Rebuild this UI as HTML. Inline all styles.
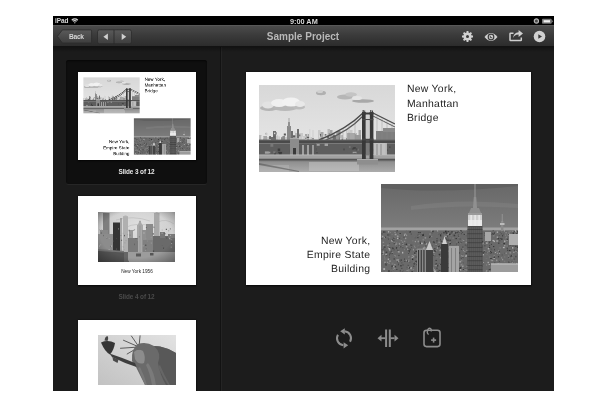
<!DOCTYPE html>
<html><head><meta charset="utf-8">
<style>
html,body{margin:0;padding:0;background:#fff;width:606px;height:406px;overflow:hidden;font-family:"Liberation Sans",sans-serif;}
#scr{position:absolute;left:53px;top:16px;width:501px;height:375px;background:#1c1c1c;overflow:hidden;}
#status{position:absolute;left:0;top:0;width:501px;height:9px;background:#000;}
#toolbar{position:absolute;left:0;top:9px;width:501px;height:21px;background:linear-gradient(#4d4d4d,#3a3a3a 50%,#2c2c2c);box-shadow:0 1px 0 #141414;}
#side{position:absolute;left:0;top:30px;width:167px;height:345px;background:#1b1b1b;}
#sep{position:absolute;left:167px;top:30px;width:1px;height:345px;background:#121212;}
#sep2{position:absolute;left:168px;top:30px;width:1px;height:345px;background:#242424;}
#main{position:absolute;left:169px;top:30px;width:332px;height:345px;background:#1c1c1c;}
.abs{position:absolute;}
.txt{position:absolute;white-space:nowrap;}
svg{position:absolute;display:block;}
.txt,svg{will-change:transform;}
</style></head><body>
<div id="scr">
  <div id="status">
    <div class="txt" style="left:1.5px;top:0.7px;color:#d8d8d8;font-size:6.5px;font-weight:bold;line-height:7px;letter-spacing:-0.1px;">iPad</div>
    <svg style="left:18px;top:2.2px" width="7.6" height="5.6" viewBox="0 0 8 6"><path d="M0.8 2.4 A4.4 4.4 0 0 1 7.2 2.4" stroke="#d8d8d8" stroke-width="1.3" fill="none"/><path d="M2.1 3.7 A2.6 2.6 0 0 1 5.9 3.7" stroke="#d8d8d8" stroke-width="1.3" fill="none"/><path d="M3 5 L4 6 L5 5 A1.4 1.4 0 0 0 3 5Z" fill="#d8d8d8"/></svg>
    <div class="txt" style="left:236.5px;top:1.7px;color:#d8d8d8;font-size:7.3px;font-weight:bold;line-height:7px;">9:00 AM</div>
    <svg style="left:480px;top:1.5px" width="7" height="7" viewBox="0 0 7 7"><circle cx="3.4" cy="3" r="2.1" stroke="#b8b8b8" stroke-width="1.2" fill="#4a4a4a"/></svg>
    <svg style="left:488px;top:1.5px" width="13" height="7" viewBox="0 0 13 7"><rect x="1" y="0.8" width="9.6" height="5" rx="0.8" fill="#787878"/><rect x="2.6" y="2.2" width="6.4" height="2.2" fill="#f0f0f0"/><path d="M10.4 1.4 L12.2 3.3 L10.4 5.2Z" fill="#787878"/></svg>
  </div>
  <div id="toolbar">
    <div class="abs" style="left:0;top:0;width:501px;height:1px;background:#585858;"></div>
    <svg style="left:4px;top:4px" width="36" height="16" viewBox="0 0 36 16"><defs><linearGradient id="btn" x1="0" y1="0" x2="0" y2="1"><stop offset="0" stop-color="#5a5a5a"/><stop offset="1" stop-color="#3e3e3e"/></linearGradient></defs>
      <path d="M0.4 7.4 L5.4 0.9 L33.6 0.9 Q34.6 0.9 34.6 1.9 L34.6 13 Q34.6 14 33.6 14 L5.4 14Z" fill="url(#btn)" stroke="#2c2c2c" stroke-width="0.8"/></svg>
    <div class="txt" style="left:15.8px;top:7.8px;color:#d4d4d4;font-size:6.7px;font-weight:bold;line-height:7px;letter-spacing:-0.3px;">Back</div>
    <svg style="left:44px;top:4px" width="35" height="16" viewBox="0 0 35 16">
      <rect x="0.5" y="0.8" width="34" height="14" rx="2" fill="url(#btn)" stroke="#2c2c2c" stroke-width="0.8"/>
      <rect x="16.6" y="1" width="0.8" height="14" fill="#2a2a2a"/>
      <path d="M6.4 7.8 L10.9 4.6 L10.9 11Z" fill="#d0d0d0"/><path d="M29.2 7.8 L24.7 4.6 L24.7 11Z" fill="#d0d0d0"/>
    </svg>
    <div class="txt" style="left:200px;top:5.8px;width:100px;text-align:center;color:#b8b8b8;font-size:10px;font-weight:bold;line-height:12px;">Sample Project</div>
    <svg style="left:407.6px;top:4.8px" width="13" height="13" viewBox="-6.5 -6.5 13 13"><g fill="#d0d0d0"><path d="M5.52 -0.96 L5.52 0.96 L4.08 0.98 L3.58 2.19 L4.58 3.22 L3.22 4.58 L2.19 3.58 L0.98 4.08 L0.96 5.52 L-0.96 5.52 L-0.98 4.08 L-2.19 3.58 L-3.22 4.58 L-4.58 3.22 L-3.58 2.19 L-4.08 0.98 L-5.52 0.96 L-5.52 -0.96 L-4.08 -0.98 L-3.58 -2.19 L-4.58 -3.22 L-3.22 -4.58 L-2.19 -3.58 L-0.98 -4.08 L-0.96 -5.52 L0.96 -5.52 L0.98 -4.08 L2.19 -3.58 L3.22 -4.58 L4.58 -3.22 L3.58 -2.19 L4.08 -0.98Z"/></g><circle r="1.5" fill="#3a3a3a"/></svg>
    <svg style="left:431px;top:7px" width="14" height="10" viewBox="0 0 14 10"><path d="M0.5 5 Q7 -3 13.5 5 Q7 13 0.5 5Z" fill="#d0d0d0"/><circle cx="7" cy="5" r="3.4" fill="#3a3a3a"/><circle cx="7" cy="5" r="2.2" fill="#d0d0d0"/><path d="M6.3 3.8 L6.3 5.7 L8.2 5.7" stroke="#3a3a3a" stroke-width="0.9" fill="none"/></svg>
    <svg style="left:455.6px;top:4.8px" width="15" height="12" viewBox="0 0 15 12"><path d="M4.5 3.2 L1.6 3.2 Q1 3.2 1 3.8 L1 10 Q1 10.6 1.6 10.6 L11.7 10.6 Q12.3 10.6 12.3 10 L12.3 7.6" stroke="#cfcfcf" stroke-width="1.5" fill="none"/><path d="M3.8 8.6 Q4.6 4.6 9.6 4.4 L9.6 7 L14 3.4 L9.6 0 L9.6 2.2 Q4.6 2.6 3.8 8.6Z" fill="#cfcfcf"/></svg>
    <svg style="left:479.6px;top:5px" width="13" height="13" viewBox="0 0 13 13"><circle cx="6.5" cy="6.5" r="5.8" fill="#d0d0d0"/><path d="M5.3 4.3 L9 6.5 L5.3 8.7Z" fill="#383838"/></svg>
  </div>
  <div id="side">
    <div class="abs" style="left:13px;top:14px;width:141px;height:124px;border-radius:2.5px;background:#0f0f0f;box-shadow:inset 0 1px 2px rgba(0,0,0,0.6),0 1px 0 #262626;"></div>
    <div class="txt" style="left:13px;top:122px;width:141px;text-align:center;color:#e8e8e8;font-size:6.4px;font-weight:bold;line-height:8px;letter-spacing:-0.1px;">Slide 3 of 12</div>
    <div class="txt" style="left:13px;top:247px;width:141px;text-align:center;color:#4a4a4a;font-size:6.4px;font-weight:bold;line-height:8px;letter-spacing:-0.1px;">Slide 4 of 12</div>
  </div>
  <div id="sep"></div><div id="sep2"></div>
  <div id="main"></div>
  <div class="abs" style="left:0;top:30px;width:501px;height:1px;background:#121212;"></div>
  <div class="abs" style="left:0;top:31px;width:501px;height:5px;background:linear-gradient(rgba(0,0,0,0.35),rgba(0,0,0,0));"></div>
  <svg style="left:280px;top:309px" width="24" height="26" viewBox="0 0 24 26">
    <path d="M11.6 6.33 A7 7 0 0 1 17.06 16.8" stroke="#8c8c8c" stroke-width="2" fill="none"/>
    <path d="M4.94 9.8 A7 7 0 0 0 10.39 20.27" stroke="#8c8c8c" stroke-width="2" fill="none"/>
    <path d="M7.2 6.3 L11.8 3.2 L11.8 9.4Z" fill="#8c8c8c"/>
    <path d="M15.2 20.3 L10.6 17.2 L10.6 23.4Z" fill="#8c8c8c"/>
  </svg>
  <svg style="left:323px;top:312px" width="24" height="21" viewBox="0 0 24 21">
    <rect x="9.1" y="1.5" width="2" height="17.5" fill="#8c8c8c"/><rect x="12.8" y="1.5" width="2" height="17.5" fill="#8c8c8c"/>
    <rect x="4" y="9.3" width="5.5" height="1.8" fill="#8c8c8c"/><rect x="14.5" y="9.3" width="4" height="1.8" fill="#8c8c8c"/>
    <path d="M1.5 10.2 L5.5 6.8 L5.5 13.6Z" fill="#8c8c8c"/><path d="M22.5 10.2 L18.5 6.8 L18.5 13.6Z" fill="#8c8c8c"/>
  </svg>
  <svg style="left:368px;top:309px" width="22" height="24" viewBox="0 0 22 24">
    <rect x="3" y="5.2" width="16" height="16.4" rx="2.5" fill="none" stroke="#8c8c8c" stroke-width="1.6"/>
    <path d="M7.6 9.5 Q5.6 8 6.6 5.2 Q7.8 2.5 9.6 3.6 Q10.8 4.6 10 6.6" stroke="#8c8c8c" stroke-width="1.4" fill="none"/>
    <rect x="10.1" y="14.3" width="5" height="1.6" fill="#8c8c8c"/><rect x="11.8" y="12.6" width="1.6" height="5" fill="#8c8c8c"/>
  </svg>
  <!-- main slide -->
  <div class="abs" style="left:193px;top:56px;width:285px;height:213px;box-shadow:0 0.5px 1.5px 0.5px rgba(0,0,0,0.9);"></div>
  <svg style="left:193px;top:56px" width="285" height="213" viewBox="0 0 285 213"><rect width="285" height="213" fill="#fff"/>
<svg x="13" y="13" width="136" height="87" viewBox="0 0 136 87"><defs><linearGradient id="p1sky" x1="0" y1="0" x2="0" y2="1"><stop offset="0" stop-color="#d8d8d8"/><stop offset="1" stop-color="#eaeaea"/></linearGradient><linearGradient id="p1wat" x1="0" y1="0" x2="0" y2="1"><stop offset="0" stop-color="#8a8a8a"/><stop offset="1" stop-color="#acacac"/></linearGradient></defs><rect width="136" height="87" fill="url(#p1sky)"/><ellipse cx="10" cy="23" rx="9" ry="3" fill="#b4b4b4"/><ellipse cx="26" cy="23" rx="12" ry="3" fill="#b8b8b8"/><ellipse cx="40" cy="22" rx="6" ry="2.5" fill="#bcbcbc"/><ellipse cx="9" cy="20" rx="6" ry="3.5" fill="#e2e2e2"/><ellipse cx="20" cy="18" rx="8" ry="4" fill="#f0f0f0"/><ellipse cx="32" cy="17" rx="9" ry="4.5" fill="#f2f2f2"/><ellipse cx="41" cy="19" rx="5" ry="3" fill="#e8e8e8"/><ellipse cx="62" cy="8" rx="5" ry="2.2" fill="#b0b0b0"/><ellipse cx="61" cy="6.5" rx="3" ry="1.5" fill="#d0d0d0"/><ellipse cx="86" cy="12" rx="8" ry="2.5" fill="#b6b6b6"/><ellipse cx="104" cy="16" rx="11" ry="1.8" fill="#a8a8a8"/><ellipse cx="92" cy="9.5" rx="6" ry="2.2" fill="#c4c4c4"/><ellipse cx="98" cy="13" rx="5" ry="2" fill="#e4e4e4"/><rect x="0.0" y="50" width="2.5" height="6" fill="#b9b9b9"/><rect x="2.5" y="51" width="1.5" height="5" fill="#e1e1e1"/><rect x="4.0" y="51" width="4" height="5" fill="#a5a5a5"/><rect x="8.0" y="52" width="4" height="4" fill="#c8c8c8"/><rect x="12.0" y="52" width="2" height="4" fill="#6e6e6e"/><rect x="14.0" y="46" width="3" height="10" fill="#6e6e6e"/><rect x="17.0" y="51" width="2" height="5" fill="#c8c8c8"/><rect x="19.0" y="52" width="3" height="4" fill="#e1e1e1"/><rect x="22.0" y="51" width="4" height="5" fill="#8c8c8c"/><rect x="26.0" y="52" width="4" height="4" fill="#c8c8c8"/><rect x="30.0" y="46" width="4" height="10" fill="#6e6e6e"/><rect x="34.0" y="52" width="2" height="4" fill="#c8c8c8"/><rect x="36.0" y="48" width="2" height="8" fill="#b9b9b9"/><rect x="38.0" y="44" width="2" height="12" fill="#6e6e6e"/><rect x="40.0" y="48" width="4" height="8" fill="#c8c8c8"/><rect x="44.0" y="51" width="2" height="5" fill="#c8c8c8"/><rect x="46.0" y="49" width="4" height="7" fill="#a5a5a5"/><rect x="50.0" y="44" width="1.5" height="12" fill="#d7d7d7"/><rect x="51.5" y="52" width="1.5" height="4" fill="#c8c8c8"/><rect x="53.0" y="45" width="2" height="11" fill="#d7d7d7"/><rect x="55.0" y="46" width="4" height="10" fill="#e1e1e1"/><rect x="59.0" y="45" width="2.5" height="11" fill="#c8c8c8"/><rect x="61.5" y="47" width="3" height="9" fill="#a5a5a5"/><rect x="64.5" y="50" width="2" height="6" fill="#d7d7d7"/><rect x="66.5" y="51" width="2" height="5" fill="#c8c8c8"/><rect x="68.5" y="44" width="2.5" height="12" fill="#b9b9b9"/><rect x="71.0" y="45" width="2.5" height="11" fill="#a5a5a5"/><rect x="73.5" y="51" width="4" height="5" fill="#6e6e6e"/><rect x="77.5" y="46" width="4" height="10" fill="#8c8c8c"/><rect x="81.5" y="50" width="2.5" height="6" fill="#b9b9b9"/><rect x="84.0" y="52" width="3" height="4" fill="#d7d7d7"/><rect x="87.0" y="44" width="1.5" height="12" fill="#c8c8c8"/><rect x="88.5" y="47" width="2.5" height="9" fill="#d7d7d7"/><rect x="91.0" y="45" width="2.5" height="11" fill="#c8c8c8"/><rect x="93.5" y="51" width="3" height="5" fill="#e1e1e1"/><rect x="96.5" y="48" width="1.5" height="8" fill="#b9b9b9"/><rect x="98.0" y="52" width="1.5" height="4" fill="#d7d7d7"/><rect x="99.5" y="45" width="2.5" height="11" fill="#a5a5a5"/><rect x="71.7" y="54.0" width="1.4" height="2.9" fill="#c8c8c8"/><rect x="16.8" y="47.1" width="0.9" height="2.5" fill="#787878"/><rect x="73.8" y="49.6" width="2.4" height="2.0" fill="#787878"/><rect x="44.9" y="50.9" width="2.3" height="2.6" fill="#c8c8c8"/><rect x="70.6" y="54.9" width="2.0" height="1.8" fill="#787878"/><rect x="15.1" y="47.6" width="1.2" height="1.5" fill="#e1e1e1"/><rect x="83.1" y="47.6" width="1.3" height="1.3" fill="#c8c8c8"/><rect x="61.0" y="48.9" width="1.0" height="2.7" fill="#5a5a5a"/><rect x="45.7" y="53.8" width="2.4" height="2.4" fill="#e1e1e1"/><rect x="39.8" y="49.5" width="1.6" height="1.8" fill="#787878"/><rect x="6.7" y="47.9" width="1.1" height="1.7" fill="#5a5a5a"/><rect x="10.2" y="51.1" width="1.7" height="2.9" fill="#5a5a5a"/><rect x="7.0" y="47.9" width="1.4" height="2.3" fill="#c8c8c8"/><rect x="60.2" y="50.3" width="1.0" height="2.0" fill="#e1e1e1"/><rect x="48.0" y="48.8" width="1.0" height="2.5" fill="#c8c8c8"/><rect x="47.9" y="52.2" width="1.7" height="1.4" fill="#c8c8c8"/><rect x="14.7" y="50.9" width="0.8" height="2.1" fill="#5a5a5a"/><rect x="69.6" y="48.4" width="1.4" height="1.3" fill="#787878"/><rect x="53.3" y="53.0" width="1.4" height="1.4" fill="#787878"/><rect x="80.6" y="53.4" width="2.1" height="1.5" fill="#e1e1e1"/><rect x="35.6" y="46.3" width="0.8" height="1.6" fill="#c8c8c8"/><rect x="19.4" y="51.4" width="1.4" height="2.6" fill="#c8c8c8"/><rect x="95.5" y="49.3" width="1.2" height="1.5" fill="#787878"/><rect x="33.8" y="50.3" width="2.5" height="2.2" fill="#5a5a5a"/><rect x="47.9" y="51.9" width="2.2" height="1.2" fill="#5a5a5a"/><rect x="91.0" y="53.0" width="2.1" height="2.0" fill="#787878"/><rect x="43.4" y="51.7" width="0.9" height="2.9" fill="#e1e1e1"/><rect x="46.3" y="52.7" width="0.9" height="1.3" fill="#787878"/><rect x="2.8" y="51.3" width="1.6" height="2.3" fill="#e1e1e1"/><rect x="65.7" y="49.2" width="1.7" height="1.3" fill="#5a5a5a"/><rect x="79.9" y="52.5" width="1.0" height="2.5" fill="#787878"/><rect x="43.4" y="53.8" width="2.2" height="1.4" fill="#c8c8c8"/><rect x="21.3" y="50.5" width="2.1" height="1.7" fill="#e1e1e1"/><rect x="83.4" y="46.5" width="2.1" height="2.8" fill="#e1e1e1"/><rect x="82.7" y="53.9" width="1.0" height="1.3" fill="#5a5a5a"/><rect x="87.3" y="53.0" width="1.8" height="2.6" fill="#787878"/><rect x="17.2" y="50.3" width="2.0" height="2.1" fill="#c8c8c8"/><rect x="68.2" y="50.8" width="1.6" height="2.6" fill="#5a5a5a"/><rect x="24.8" y="48.5" width="2.1" height="2.0" fill="#5a5a5a"/><rect x="76.0" y="54.2" width="1.6" height="2.2" fill="#787878"/><rect x="28" y="41" width="4" height="14" fill="#8a8a8a"/><rect x="29" y="37" width="2" height="5" fill="#909090"/><rect x="29.6" y="33" width="0.8" height="5" fill="#999"/><rect x="117" y="46" width="19" height="10" fill="#7e7e7e"/><rect x="124" y="43" width="12" height="4" fill="#8a8a8a"/><rect x="88" y="48" width="8" height="8" fill="#a8a8a8"/><rect x="96" y="50" width="6" height="6" fill="#999"/><rect x="78" y="46" width="1.5" height="10" fill="#999"/><path d="M104 28 Q88 44 60 55" stroke="#4a4a4a" stroke-width="1.4" fill="none"/><path d="M104 31 Q90 46 66 55.5" stroke="#555" stroke-width="1.1" fill="none"/><path d="M114 28 Q124 33 136 39" stroke="#4a4a4a" stroke-width="1.3" fill="none"/><path d="M114 31 Q124 36 136 42" stroke="#555" stroke-width="1" fill="none"/><line x1="72" y1="52" x2="72" y2="56" stroke="#888" stroke-width="0.4"/><line x1="78" y1="48" x2="78" y2="56" stroke="#888" stroke-width="0.4"/><line x1="84" y1="44" x2="84" y2="56" stroke="#888" stroke-width="0.4"/><line x1="90" y1="40" x2="90" y2="56" stroke="#888" stroke-width="0.4"/><line x1="96" y1="36" x2="96" y2="56" stroke="#888" stroke-width="0.4"/><line x1="118" y1="31.0" x2="118" y2="56" stroke="#888" stroke-width="0.4"/><line x1="123" y1="33.6" x2="123" y2="56" stroke="#888" stroke-width="0.4"/><line x1="128" y1="36.2" x2="128" y2="56" stroke="#888" stroke-width="0.4"/><line x1="133" y1="38.8" x2="133" y2="56" stroke="#888" stroke-width="0.4"/><rect x="0" y="55" width="136" height="3.5" fill="#4a4a4a"/><rect x="0" y="54.5" width="136" height="1" fill="#6a6a6a"/><rect x="0" y="58.5" width="136" height="11.5" fill="#5e5e5e"/><rect x="92.8" y="62.8" width="2.6" height="2.0" fill="#4b4b4b"/><rect x="93.7" y="66.8" width="3.8" height="1.5" fill="#a0a0a0"/><rect x="119.6" y="60.4" width="2.3" height="1.8" fill="#787878"/><rect x="59.2" y="59.2" width="1.7" height="1.1" fill="#5f5f5f"/><rect x="105.0" y="67.0" width="1.5" height="2.4" fill="#5f5f5f"/><rect x="19.2" y="66.9" width="3.9" height="1.4" fill="#3c3c3c"/><rect x="53.4" y="63.1" width="4.0" height="2.7" fill="#4b4b4b"/><rect x="94.6" y="67.9" width="2.2" height="1.8" fill="#5f5f5f"/><rect x="42.7" y="65.4" width="1.1" height="2.1" fill="#787878"/><rect x="94.2" y="62.2" width="2.6" height="1.6" fill="#3c3c3c"/><rect x="15.1" y="67.2" width="1.7" height="2.8" fill="#3c3c3c"/><rect x="35.6" y="58.9" width="3.3" height="1.5" fill="#4b4b4b"/><rect x="109.9" y="66.6" width="3.0" height="2.9" fill="#787878"/><rect x="20.0" y="67.2" width="2.7" height="2.4" fill="#3c3c3c"/><rect x="37.4" y="66.1" width="1.6" height="2.8" fill="#5f5f5f"/><rect x="125.7" y="64.5" width="3.4" height="1.2" fill="#4b4b4b"/><rect x="8.9" y="66.7" width="2.4" height="1.7" fill="#a0a0a0"/><rect x="56.0" y="67.2" width="2.9" height="1.1" fill="#4b4b4b"/><rect x="125.7" y="67.7" width="1.8" height="1.4" fill="#5f5f5f"/><rect x="84.2" y="63.5" width="1.6" height="1.9" fill="#4b4b4b"/><rect x="36.2" y="66.1" width="4.0" height="1.1" fill="#3c3c3c"/><rect x="98.2" y="63.7" width="1.6" height="1.9" fill="#787878"/><rect x="14.2" y="66.3" width="2.3" height="2.0" fill="#787878"/><rect x="130.0" y="61.4" width="1.6" height="1.5" fill="#4b4b4b"/><rect x="111.5" y="65.2" width="2.9" height="1.8" fill="#5f5f5f"/><rect x="131.6" y="66.5" width="1.0" height="2.3" fill="#5f5f5f"/><rect x="57.7" y="59.0" width="3.0" height="1.8" fill="#a0a0a0"/><rect x="89.9" y="61.2" width="1.7" height="1.6" fill="#787878"/><rect x="24.8" y="61.1" width="1.0" height="1.7" fill="#5f5f5f"/><rect x="130.3" y="63.7" width="1.7" height="2.9" fill="#5f5f5f"/><rect x="29.2" y="60.2" width="2.0" height="1.2" fill="#5f5f5f"/><rect x="67.4" y="60.4" width="2.5" height="1.0" fill="#5f5f5f"/><rect x="109.5" y="59.9" width="2.8" height="1.8" fill="#5f5f5f"/><rect x="40.8" y="60.7" width="2.8" height="2.1" fill="#4b4b4b"/><rect x="88.1" y="65.3" width="3.6" height="1.8" fill="#5f5f5f"/><rect x="96.6" y="63.2" width="1.9" height="2.2" fill="#4b4b4b"/><rect x="5.9" y="66.4" width="3.7" height="2.3" fill="#a0a0a0"/><rect x="18.7" y="63.5" width="2.5" height="2.7" fill="#3c3c3c"/><rect x="110.7" y="64.0" width="3.7" height="2.4" fill="#4b4b4b"/><rect x="11.4" y="58.9" width="2.9" height="2.9" fill="#787878"/><rect x="112.0" y="63.8" width="2.9" height="2.3" fill="#4b4b4b"/><rect x="65.6" y="58.5" width="3.4" height="2.5" fill="#a0a0a0"/><rect x="120.3" y="59.4" width="2.6" height="2.5" fill="#787878"/><rect x="33.8" y="59.2" width="1.8" height="2.5" fill="#4b4b4b"/><rect x="30.9" y="64.7" width="2.4" height="2.7" fill="#3c3c3c"/><rect x="116" y="58" width="12" height="12" fill="#b4b4b4"/><rect x="119" y="59" width="1" height="11" fill="#888"/><rect x="123" y="59" width="1" height="11" fill="#888"/><rect x="31" y="53" width="9" height="17" fill="#8c8c8c"/><rect x="34" y="63" width="3" height="7" fill="#3a3a3a"/><rect x="31" y="53" width="9" height="1" fill="#a8a8a8"/><rect x="40" y="58.5" width="17" height="11.5" fill="#5a5a5a"/><rect x="43" y="60" width="2" height="10" fill="#a0a0a0"/><rect x="48" y="60" width="2" height="10" fill="#a0a0a0"/><rect x="53" y="60" width="2" height="10" fill="#9a9a9a"/><rect x="0" y="70" width="136" height="3.5" fill="#a2a2a2"/><rect x="0" y="73.5" width="136" height="1.5" fill="#555"/><rect x="0" y="69.5" width="136" height="0.8" fill="#c0c0c0"/><rect x="0" y="75" width="136" height="12" fill="url(#p1wat)"/><rect x="50" y="77" width="50" height="9" fill="#c8c8c8" opacity="0.5"/><rect x="0" y="80" width="30" height="7" fill="#bcbcbc" opacity="0.4"/><rect x="0" y="75" width="136" height="1.2" fill="#6a6a6a"/><path d="M0 78 L40 86 L40 87 L0 80Z" fill="#555" opacity="0.6"/><rect x="103" y="27" width="3.8" height="50" fill="#383838"/><rect x="110.6" y="27" width="3.8" height="50" fill="#383838"/><rect x="103.6" y="25" width="1.2" height="3" fill="#444"/><rect x="105.2" y="25.5" width="1" height="2" fill="#444"/><rect x="111.2" y="25" width="1.2" height="3" fill="#444"/><rect x="113" y="25.5" width="1" height="2" fill="#444"/><rect x="103" y="27.5" width="11.4" height="2.2" fill="#3c3c3c"/><rect x="103" y="34" width="11.4" height="1.2" fill="#4a4a4a"/><rect x="103" y="53.5" width="11.4" height="2" fill="#444"/><rect x="106.8" y="29.7" width="3.8" height="4.3" fill="#d2d2d2"/><rect x="106.8" y="35.2" width="3.8" height="18.3" fill="#cbcbcb"/><rect x="106.8" y="58.5" width="3.8" height="12" fill="#7a7a7a"/><rect x="114.5" y="58" width="12" height="12" fill="#c0c0c0"/><rect x="117.5" y="59" width="1" height="11" fill="#8a8a8a"/><rect x="121.5" y="59" width="1" height="11" fill="#8a8a8a"/><rect x="98" y="74" width="21" height="5.5" fill="#8e8e8e"/><rect x="98" y="74" width="21" height="1" fill="#aaa"/></svg>
<svg x="135" y="112" width="137" height="88" viewBox="0 0 137 88"><defs><linearGradient id="p2sky" x1="0" y1="0" x2="0" y2="1"><stop offset="0" stop-color="#686868"/><stop offset="0.5" stop-color="#7c7c7c"/><stop offset="1" stop-color="#8e8e8e"/></linearGradient></defs><rect width="137" height="88" fill="url(#p2sky)"/><path d="M0 4 Q60 10 137 2 L137 0 L0 0Z" fill="#606060"/><path d="M30 22 Q80 14 137 20 L137 24 Q80 20 30 26Z" fill="#8a8a8a" opacity="0.35"/><rect x="0" y="43.5" width="137" height="3" fill="#a2a2a2"/><rect x="0" y="46.5" width="137" height="41.5" fill="#6a6a6a"/><rect x="61.7" y="69.2" width="1.7" height="1.2" fill="#b4b4b4"/><rect x="116.7" y="53.9" width="1.6" height="1.2" fill="#4b4b4b"/><rect x="12.8" y="58.6" width="0.7" height="1.6" fill="#323232"/><rect x="81.3" y="62.4" width="1.1" height="1.5" fill="#4b4b4b"/><rect x="85.1" y="80.5" width="0.7" height="0.6" fill="#5a5a5a"/><rect x="81.8" y="78.3" width="1.0" height="1.3" fill="#5a5a5a"/><rect x="70.9" y="72.6" width="1.2" height="1.4" fill="#9b9b9b"/><rect x="89.4" y="62.9" width="1.3" height="1.7" fill="#3c3c3c"/><rect x="96.6" y="59.1" width="0.9" height="0.9" fill="#3c3c3c"/><rect x="76.9" y="50.5" width="0.7" height="0.9" fill="#3c3c3c"/><rect x="130.8" y="81.2" width="0.6" height="0.9" fill="#323232"/><rect x="64.2" y="86.7" width="1.1" height="0.7" fill="#5a5a5a"/><rect x="106.3" y="57.2" width="0.7" height="1.0" fill="#878787"/><rect x="103.5" y="50.9" width="0.9" height="0.7" fill="#323232"/><rect x="63.5" y="66.2" width="1.4" height="0.8" fill="#b4b4b4"/><rect x="26.0" y="76.4" width="0.8" height="1.4" fill="#3c3c3c"/><rect x="53.9" y="87.1" width="0.6" height="1.6" fill="#696969"/><rect x="136.2" y="46.8" width="0.8" height="1.8" fill="#3c3c3c"/><rect x="5.7" y="52.1" width="1.1" height="0.6" fill="#787878"/><rect x="113.3" y="62.0" width="0.7" height="0.9" fill="#5a5a5a"/><rect x="2.1" y="61.3" width="1.3" height="0.8" fill="#9b9b9b"/><rect x="113.6" y="51.6" width="1.1" height="1.4" fill="#696969"/><rect x="124.0" y="79.9" width="0.9" height="0.8" fill="#b4b4b4"/><rect x="26.8" y="85.4" width="1.7" height="1.3" fill="#878787"/><rect x="6.5" y="50.5" width="1.2" height="0.9" fill="#878787"/><rect x="35.1" y="80.2" width="1.3" height="1.0" fill="#4b4b4b"/><rect x="126.8" y="86.6" width="0.8" height="1.2" fill="#3c3c3c"/><rect x="38.2" y="84.1" width="0.8" height="0.6" fill="#696969"/><rect x="56.2" y="56.3" width="0.7" height="0.9" fill="#b4b4b4"/><rect x="78.1" y="51.5" width="1.0" height="1.7" fill="#787878"/><rect x="89.7" y="74.7" width="1.3" height="0.8" fill="#323232"/><rect x="126.1" y="65.7" width="1.0" height="1.0" fill="#323232"/><rect x="2.9" y="72.4" width="1.2" height="1.5" fill="#787878"/><rect x="18.6" y="49.0" width="1.1" height="1.0" fill="#323232"/><rect x="122.9" y="76.6" width="1.4" height="1.6" fill="#787878"/><rect x="48.0" y="74.4" width="1.7" height="1.6" fill="#878787"/><rect x="128.9" y="47.3" width="1.2" height="0.6" fill="#878787"/><rect x="51.8" y="46.5" width="0.7" height="0.7" fill="#3c3c3c"/><rect x="135.6" y="82.5" width="1.5" height="1.1" fill="#9b9b9b"/><rect x="60.1" y="80.8" width="0.7" height="1.5" fill="#323232"/><rect x="42.3" y="49.6" width="0.6" height="1.7" fill="#3c3c3c"/><rect x="67.9" y="71.5" width="1.7" height="0.9" fill="#323232"/><rect x="50.2" y="51.9" width="1.3" height="1.2" fill="#787878"/><rect x="90.1" y="64.3" width="1.7" height="1.0" fill="#696969"/><rect x="27.1" y="63.9" width="1.6" height="1.7" fill="#5a5a5a"/><rect x="52.5" y="70.2" width="1.0" height="0.8" fill="#9b9b9b"/><rect x="47.9" y="83.2" width="0.6" height="0.7" fill="#696969"/><rect x="112.2" y="50.7" width="1.2" height="1.7" fill="#878787"/><rect x="52.2" y="67.6" width="1.4" height="1.5" fill="#9b9b9b"/><rect x="43.7" y="80.4" width="0.9" height="1.3" fill="#696969"/><rect x="77.9" y="58.8" width="1.5" height="0.6" fill="#4b4b4b"/><rect x="55.3" y="53.9" width="1.5" height="0.9" fill="#4b4b4b"/><rect x="108.8" y="86.8" width="0.7" height="0.7" fill="#b4b4b4"/><rect x="89.4" y="79.5" width="1.8" height="1.4" fill="#5a5a5a"/><rect x="112.5" y="56.6" width="1.5" height="1.5" fill="#b4b4b4"/><rect x="97.5" y="53.4" width="0.9" height="1.0" fill="#b4b4b4"/><rect x="68.3" y="87.4" width="0.8" height="1.6" fill="#5a5a5a"/><rect x="11.9" y="84.7" width="1.5" height="0.8" fill="#9b9b9b"/><rect x="26.9" y="82.8" width="0.6" height="1.3" fill="#b4b4b4"/><rect x="108.8" y="85.2" width="1.2" height="1.4" fill="#5a5a5a"/><rect x="13.5" y="81.9" width="1.6" height="1.7" fill="#3c3c3c"/><rect x="29.1" y="83.3" width="1.8" height="1.8" fill="#b4b4b4"/><rect x="133.3" y="84.7" width="0.9" height="1.5" fill="#323232"/><rect x="47.6" y="49.4" width="1.1" height="1.3" fill="#696969"/><rect x="66.5" y="47.2" width="1.6" height="0.7" fill="#323232"/><rect x="23.6" y="59.9" width="1.5" height="0.8" fill="#4b4b4b"/><rect x="136.5" y="83.4" width="1.2" height="1.4" fill="#9b9b9b"/><rect x="129.1" y="66.4" width="1.7" height="0.7" fill="#5a5a5a"/><rect x="60.0" y="69.2" width="1.6" height="1.3" fill="#4b4b4b"/><rect x="71.4" y="81.0" width="1.3" height="1.0" fill="#878787"/><rect x="130.3" y="82.1" width="1.3" height="1.0" fill="#4b4b4b"/><rect x="132.2" y="67.8" width="1.3" height="0.8" fill="#b4b4b4"/><rect x="15.6" y="46.2" width="1.1" height="1.2" fill="#323232"/><rect x="70.4" y="62.6" width="1.6" height="1.3" fill="#9b9b9b"/><rect x="12.7" y="52.9" width="1.7" height="1.2" fill="#878787"/><rect x="36.7" y="65.6" width="0.8" height="1.1" fill="#9b9b9b"/><rect x="71.7" y="50.5" width="1.1" height="0.6" fill="#696969"/><rect x="17.7" y="78.3" width="0.6" height="0.8" fill="#5a5a5a"/><rect x="1.6" y="57.8" width="1.5" height="0.9" fill="#9b9b9b"/><rect x="14.3" y="76.3" width="0.7" height="1.2" fill="#696969"/><rect x="98.0" y="75.1" width="1.7" height="0.6" fill="#878787"/><rect x="112.6" y="71.6" width="1.2" height="1.6" fill="#b4b4b4"/><rect x="87.2" y="68.0" width="1.6" height="1.3" fill="#4b4b4b"/><rect x="31.8" y="76.7" width="1.6" height="1.7" fill="#787878"/><rect x="82.3" y="83.0" width="0.8" height="1.5" fill="#5a5a5a"/><rect x="121.1" y="51.6" width="0.9" height="1.5" fill="#696969"/><rect x="52.9" y="64.0" width="1.7" height="1.3" fill="#4b4b4b"/><rect x="27.4" y="72.1" width="1.6" height="0.7" fill="#787878"/><rect x="124.4" y="86.2" width="0.7" height="1.2" fill="#787878"/><rect x="68.6" y="74.5" width="0.8" height="0.7" fill="#3c3c3c"/><rect x="3.3" y="77.6" width="1.3" height="1.7" fill="#9b9b9b"/><rect x="20.0" y="53.7" width="0.8" height="1.6" fill="#696969"/><rect x="126.5" y="50.0" width="0.7" height="1.7" fill="#9b9b9b"/><rect x="10.6" y="50.0" width="1.1" height="1.1" fill="#787878"/><rect x="58.7" y="70.9" width="0.6" height="1.4" fill="#5a5a5a"/><rect x="24.7" y="64.8" width="1.5" height="1.1" fill="#5a5a5a"/><rect x="82.6" y="49.9" width="1.6" height="1.0" fill="#3c3c3c"/><rect x="109.4" y="75.2" width="1.6" height="1.4" fill="#878787"/><rect x="77.8" y="53.9" width="1.3" height="1.0" fill="#696969"/><rect x="38.2" y="50.8" width="1.5" height="0.8" fill="#878787"/><rect x="18.2" y="59.7" width="1.2" height="1.0" fill="#878787"/><rect x="104.5" y="62.8" width="1.5" height="0.7" fill="#787878"/><rect x="41.2" y="50.2" width="1.7" height="1.8" fill="#323232"/><rect x="31.7" y="85.2" width="1.4" height="1.0" fill="#878787"/><rect x="77.7" y="68.1" width="1.1" height="1.8" fill="#5a5a5a"/><rect x="95.7" y="77.6" width="1.8" height="0.6" fill="#3c3c3c"/><rect x="100.8" y="56.7" width="1.1" height="0.7" fill="#5a5a5a"/><rect x="88.5" y="46.4" width="0.9" height="0.9" fill="#787878"/><rect x="75.1" y="67.1" width="1.8" height="1.3" fill="#3c3c3c"/><rect x="87.1" y="79.6" width="0.7" height="1.3" fill="#323232"/><rect x="52.7" y="85.0" width="1.1" height="1.8" fill="#9b9b9b"/><rect x="74.0" y="70.8" width="1.1" height="1.2" fill="#696969"/><rect x="71.9" y="70.8" width="1.0" height="0.9" fill="#696969"/><rect x="76.5" y="57.8" width="1.5" height="1.0" fill="#323232"/><rect x="105.4" y="70.3" width="1.4" height="1.1" fill="#878787"/><rect x="7.2" y="59.1" width="1.1" height="1.3" fill="#787878"/><rect x="10.0" y="83.6" width="1.1" height="1.2" fill="#5a5a5a"/><rect x="6.2" y="50.1" width="1.6" height="1.7" fill="#4b4b4b"/><rect x="133.6" y="79.9" width="1.3" height="0.7" fill="#878787"/><rect x="62.2" y="54.5" width="0.7" height="1.2" fill="#3c3c3c"/><rect x="49.6" y="51.8" width="1.1" height="1.3" fill="#878787"/><rect x="49.7" y="76.9" width="1.6" height="0.8" fill="#696969"/><rect x="100.2" y="55.9" width="0.7" height="1.7" fill="#b4b4b4"/><rect x="85.3" y="60.9" width="0.9" height="1.4" fill="#5a5a5a"/><rect x="86.4" y="77.3" width="0.8" height="0.9" fill="#5a5a5a"/><rect x="120.0" y="47.6" width="0.7" height="0.9" fill="#878787"/><rect x="3.7" y="47.6" width="0.9" height="0.9" fill="#3c3c3c"/><rect x="124.6" y="52.7" width="0.9" height="1.8" fill="#9b9b9b"/><rect x="65.3" y="54.7" width="1.0" height="1.5" fill="#3c3c3c"/><rect x="109.5" y="64.6" width="1.6" height="1.6" fill="#5a5a5a"/><rect x="60.7" y="77.0" width="1.1" height="0.8" fill="#4b4b4b"/><rect x="89.2" y="87.1" width="1.0" height="1.3" fill="#4b4b4b"/><rect x="58.4" y="61.3" width="0.7" height="1.7" fill="#3c3c3c"/><rect x="74.2" y="63.9" width="1.3" height="1.6" fill="#9b9b9b"/><rect x="40.8" y="78.2" width="0.7" height="0.9" fill="#3c3c3c"/><rect x="94.9" y="66.5" width="1.5" height="1.0" fill="#4b4b4b"/><rect x="29.9" y="73.3" width="1.0" height="1.7" fill="#787878"/><rect x="96.8" y="69.6" width="1.7" height="1.7" fill="#696969"/><rect x="59.8" y="79.3" width="1.0" height="1.0" fill="#878787"/><rect x="132.1" y="76.3" width="1.2" height="0.7" fill="#787878"/><rect x="3.3" y="74.1" width="1.3" height="1.6" fill="#787878"/><rect x="108.8" y="68.4" width="1.6" height="1.3" fill="#4b4b4b"/><rect x="12.2" y="64.9" width="1.6" height="1.6" fill="#5a5a5a"/><rect x="70.4" y="68.6" width="1.3" height="1.8" fill="#878787"/><rect x="8.7" y="68.7" width="1.5" height="0.7" fill="#3c3c3c"/><rect x="37.4" y="50.4" width="1.0" height="0.6" fill="#4b4b4b"/><rect x="13.3" y="79.9" width="1.1" height="1.5" fill="#9b9b9b"/><rect x="104.5" y="67.6" width="1.5" height="1.1" fill="#787878"/><rect x="110.2" y="59.8" width="0.8" height="1.2" fill="#3c3c3c"/><rect x="96.7" y="84.0" width="1.1" height="1.6" fill="#787878"/><rect x="116.5" y="79.4" width="1.6" height="1.7" fill="#b4b4b4"/><rect x="87.4" y="67.7" width="1.5" height="1.6" fill="#878787"/><rect x="126.1" y="84.0" width="0.9" height="0.8" fill="#878787"/><rect x="93.4" y="59.3" width="1.1" height="1.2" fill="#696969"/><rect x="132.4" y="48.5" width="1.0" height="0.7" fill="#4b4b4b"/><rect x="105.9" y="53.4" width="0.7" height="1.2" fill="#9b9b9b"/><rect x="124.1" y="47.5" width="0.7" height="0.8" fill="#5a5a5a"/><rect x="80.3" y="70.9" width="1.2" height="1.2" fill="#9b9b9b"/><rect x="25.3" y="57.7" width="0.8" height="1.5" fill="#696969"/><rect x="85.6" y="85.1" width="1.3" height="1.6" fill="#9b9b9b"/><rect x="121.1" y="83.9" width="1.0" height="1.3" fill="#3c3c3c"/><rect x="65.9" y="55.2" width="0.7" height="1.7" fill="#878787"/><rect x="133.2" y="79.0" width="1.5" height="1.5" fill="#323232"/><rect x="89.8" y="55.9" width="0.6" height="1.2" fill="#787878"/><rect x="61.4" y="56.2" width="1.1" height="1.6" fill="#878787"/><rect x="21.4" y="59.4" width="0.9" height="1.6" fill="#b4b4b4"/><rect x="17.9" y="76.8" width="1.3" height="1.2" fill="#323232"/><rect x="20.6" y="78.0" width="0.6" height="1.6" fill="#4b4b4b"/><rect x="112.2" y="49.4" width="0.9" height="1.5" fill="#3c3c3c"/><rect x="121.4" y="74.8" width="0.7" height="1.5" fill="#b4b4b4"/><rect x="117.0" y="58.6" width="1.5" height="1.1" fill="#3c3c3c"/><rect x="106.7" y="64.3" width="0.6" height="1.1" fill="#9b9b9b"/><rect x="21.5" y="80.5" width="1.0" height="1.0" fill="#3c3c3c"/><rect x="75.9" y="87.4" width="1.4" height="0.7" fill="#3c3c3c"/><rect x="93.8" y="50.4" width="1.1" height="1.2" fill="#3c3c3c"/><rect x="89.3" y="46.5" width="1.1" height="1.5" fill="#5a5a5a"/><rect x="40.1" y="50.7" width="1.5" height="1.6" fill="#5a5a5a"/><rect x="123.1" y="52.3" width="1.4" height="1.7" fill="#696969"/><rect x="130.2" y="77.3" width="1.3" height="0.7" fill="#5a5a5a"/><rect x="27.3" y="76.4" width="1.0" height="1.7" fill="#9b9b9b"/><rect x="98.8" y="59.8" width="1.6" height="0.7" fill="#4b4b4b"/><rect x="84.9" y="51.5" width="1.4" height="0.8" fill="#5a5a5a"/><rect x="54.9" y="80.7" width="1.3" height="0.7" fill="#5a5a5a"/><rect x="4.4" y="87.0" width="1.1" height="1.5" fill="#787878"/><rect x="125.7" y="63.7" width="1.2" height="1.4" fill="#4b4b4b"/><rect x="112.1" y="62.0" width="1.0" height="1.1" fill="#323232"/><rect x="99.2" y="71.4" width="1.0" height="1.5" fill="#5a5a5a"/><rect x="90.1" y="71.3" width="0.6" height="1.0" fill="#787878"/><rect x="41.9" y="64.3" width="1.3" height="0.8" fill="#787878"/><rect x="107.6" y="80.2" width="1.3" height="0.8" fill="#b4b4b4"/><rect x="123.3" y="68.8" width="1.0" height="1.2" fill="#4b4b4b"/><rect x="78.4" y="54.2" width="1.7" height="1.8" fill="#5a5a5a"/><rect x="77.4" y="47.1" width="1.4" height="1.5" fill="#4b4b4b"/><rect x="33.4" y="69.9" width="1.4" height="1.0" fill="#787878"/><rect x="36.3" y="82.6" width="1.1" height="1.5" fill="#5a5a5a"/><rect x="123.4" y="68.6" width="1.3" height="1.3" fill="#696969"/><rect x="23.0" y="76.9" width="1.7" height="1.0" fill="#4b4b4b"/><rect x="16.7" y="80.2" width="0.9" height="1.7" fill="#5a5a5a"/><rect x="103.5" y="61.1" width="0.8" height="1.3" fill="#3c3c3c"/><rect x="62.0" y="62.7" width="1.5" height="1.7" fill="#4b4b4b"/><rect x="42.0" y="73.9" width="1.5" height="1.1" fill="#323232"/><rect x="21.6" y="63.1" width="0.6" height="1.2" fill="#3c3c3c"/><rect x="77.7" y="53.2" width="1.2" height="0.9" fill="#787878"/><rect x="7.3" y="78.5" width="1.5" height="1.5" fill="#878787"/><rect x="130.9" y="70.9" width="1.2" height="1.1" fill="#878787"/><rect x="102.6" y="66.2" width="1.8" height="1.6" fill="#878787"/><rect x="112.6" y="50.9" width="0.7" height="1.7" fill="#787878"/><rect x="71.7" y="63.9" width="1.7" height="1.0" fill="#323232"/><rect x="40.4" y="71.6" width="1.1" height="1.1" fill="#787878"/><rect x="102.6" y="58.6" width="1.3" height="0.7" fill="#3c3c3c"/><rect x="115.3" y="56.1" width="1.6" height="1.8" fill="#9b9b9b"/><rect x="94.9" y="67.8" width="0.9" height="1.0" fill="#878787"/><rect x="128.3" y="82.5" width="1.8" height="1.5" fill="#787878"/><rect x="118.3" y="63.5" width="1.6" height="0.9" fill="#878787"/><rect x="77.4" y="83.5" width="0.7" height="1.6" fill="#3c3c3c"/><rect x="120.4" y="69.9" width="1.1" height="1.0" fill="#696969"/><rect x="3.3" y="53.1" width="1.1" height="1.1" fill="#b4b4b4"/><rect x="54.2" y="60.8" width="1.3" height="0.7" fill="#323232"/><rect x="62.1" y="59.0" width="1.0" height="0.8" fill="#9b9b9b"/><rect x="119.9" y="54.4" width="1.6" height="1.4" fill="#323232"/><rect x="26.7" y="80.8" width="1.0" height="1.2" fill="#4b4b4b"/><rect x="86.7" y="75.0" width="1.3" height="1.2" fill="#5a5a5a"/><rect x="26.1" y="82.5" width="0.7" height="0.7" fill="#787878"/><rect x="131.2" y="57.4" width="1.1" height="1.7" fill="#787878"/><rect x="95.0" y="84.9" width="1.1" height="0.7" fill="#5a5a5a"/><rect x="117.6" y="51.0" width="1.4" height="0.9" fill="#5a5a5a"/><rect x="68.4" y="58.3" width="0.9" height="1.6" fill="#b4b4b4"/><rect x="120.7" y="70.5" width="0.9" height="1.0" fill="#4b4b4b"/><rect x="91.1" y="57.5" width="1.4" height="0.7" fill="#3c3c3c"/><rect x="60.1" y="67.9" width="1.2" height="0.7" fill="#696969"/><rect x="73.3" y="63.6" width="1.3" height="0.8" fill="#5a5a5a"/><rect x="33.6" y="57.6" width="1.3" height="0.8" fill="#4b4b4b"/><rect x="134.8" y="47.4" width="1.2" height="1.5" fill="#878787"/><rect x="0.4" y="83.0" width="0.7" height="0.7" fill="#787878"/><rect x="43.8" y="66.1" width="0.6" height="0.9" fill="#b4b4b4"/><rect x="101.6" y="68.1" width="1.3" height="1.5" fill="#3c3c3c"/><rect x="83.0" y="55.8" width="1.1" height="1.5" fill="#5a5a5a"/><rect x="35.4" y="68.6" width="1.6" height="1.3" fill="#696969"/><rect x="4.8" y="70.8" width="1.5" height="1.3" fill="#4b4b4b"/><rect x="44.4" y="71.2" width="1.3" height="1.6" fill="#b4b4b4"/><rect x="60.3" y="56.9" width="1.6" height="0.7" fill="#4b4b4b"/><rect x="77.7" y="68.5" width="1.5" height="0.9" fill="#4b4b4b"/><rect x="7.4" y="63.7" width="1.4" height="1.6" fill="#b4b4b4"/><rect x="106.6" y="77.8" width="1.2" height="1.4" fill="#b4b4b4"/><rect x="23.4" y="56.6" width="0.8" height="1.4" fill="#9b9b9b"/><rect x="8.3" y="63.0" width="1.0" height="0.9" fill="#323232"/><rect x="17.5" y="77.3" width="1.3" height="0.8" fill="#9b9b9b"/><rect x="71.2" y="86.9" width="0.6" height="1.1" fill="#b4b4b4"/><rect x="19.3" y="62.3" width="1.0" height="1.1" fill="#3c3c3c"/><rect x="132.6" y="74.2" width="1.5" height="1.8" fill="#5a5a5a"/><rect x="40.4" y="50.9" width="1.6" height="1.1" fill="#3c3c3c"/><rect x="127.3" y="61.1" width="1.0" height="1.8" fill="#5a5a5a"/><rect x="5.4" y="62.7" width="1.4" height="0.7" fill="#787878"/><rect x="77.5" y="83.8" width="1.7" height="1.7" fill="#4b4b4b"/><rect x="63.1" y="62.3" width="1.6" height="1.1" fill="#323232"/><rect x="29.4" y="60.4" width="0.8" height="1.3" fill="#4b4b4b"/><rect x="65.5" y="62.6" width="1.3" height="1.5" fill="#9b9b9b"/><rect x="61.0" y="87.2" width="1.4" height="1.6" fill="#5a5a5a"/><rect x="73.8" y="63.4" width="0.7" height="0.9" fill="#696969"/><rect x="84.8" y="67.5" width="1.5" height="1.2" fill="#5a5a5a"/><rect x="36.7" y="61.0" width="0.8" height="1.7" fill="#787878"/><rect x="18.7" y="56.0" width="1.6" height="0.7" fill="#787878"/><rect x="114.5" y="64.7" width="1.6" height="1.1" fill="#696969"/><rect x="105.2" y="67.6" width="0.7" height="1.1" fill="#5a5a5a"/><rect x="66.7" y="53.8" width="1.2" height="0.8" fill="#5a5a5a"/><rect x="42.6" y="63.6" width="1.3" height="0.8" fill="#b4b4b4"/><rect x="35.5" y="76.1" width="1.4" height="0.8" fill="#5a5a5a"/><rect x="113.9" y="68.2" width="1.1" height="0.8" fill="#b4b4b4"/><rect x="118.2" y="55.4" width="1.0" height="1.0" fill="#5a5a5a"/><rect x="19.2" y="81.2" width="1.5" height="1.2" fill="#323232"/><rect x="110.4" y="86.5" width="1.0" height="1.4" fill="#5a5a5a"/><rect x="76.2" y="60.7" width="0.7" height="1.5" fill="#787878"/><rect x="32.0" y="72.2" width="0.7" height="1.1" fill="#878787"/><rect x="67.3" y="66.3" width="1.7" height="0.9" fill="#696969"/><rect x="30.3" y="84.4" width="0.8" height="1.5" fill="#787878"/><rect x="90.8" y="56.0" width="0.7" height="1.0" fill="#878787"/><rect x="109.8" y="65.8" width="0.9" height="1.6" fill="#696969"/><rect x="95.6" y="47.0" width="1.1" height="1.0" fill="#3c3c3c"/><rect x="124.5" y="57.3" width="1.1" height="1.6" fill="#696969"/><rect x="64.0" y="59.5" width="0.9" height="0.6" fill="#787878"/><rect x="44.2" y="61.5" width="1.0" height="1.6" fill="#4b4b4b"/><rect x="87.7" y="62.0" width="1.0" height="1.7" fill="#323232"/><rect x="78.6" y="85.1" width="1.5" height="1.4" fill="#b4b4b4"/><rect x="56.1" y="63.2" width="0.9" height="1.6" fill="#9b9b9b"/><rect x="52.1" y="83.7" width="0.6" height="0.8" fill="#b4b4b4"/><rect x="37.2" y="66.5" width="1.2" height="0.6" fill="#5a5a5a"/><rect x="36.8" y="56.7" width="0.9" height="1.2" fill="#b4b4b4"/><rect x="133.7" y="46.1" width="1.3" height="1.6" fill="#b4b4b4"/><rect x="10.8" y="80.2" width="1.7" height="1.4" fill="#787878"/><rect x="36.0" y="50.3" width="0.6" height="1.6" fill="#5a5a5a"/><rect x="94.9" y="74.5" width="1.8" height="1.6" fill="#4b4b4b"/><rect x="45.5" y="74.6" width="1.6" height="1.0" fill="#878787"/><rect x="39.0" y="77.1" width="1.2" height="0.9" fill="#5a5a5a"/><rect x="49.4" y="75.3" width="1.7" height="1.5" fill="#3c3c3c"/><rect x="135.0" y="79.9" width="1.7" height="1.0" fill="#9b9b9b"/><rect x="69.9" y="74.2" width="0.6" height="1.3" fill="#878787"/><rect x="118.7" y="48.2" width="0.9" height="1.2" fill="#878787"/><rect x="34.5" y="72.3" width="1.0" height="1.4" fill="#4b4b4b"/><rect x="45.6" y="77.5" width="1.6" height="1.6" fill="#878787"/><rect x="87.5" y="51.2" width="1.5" height="0.9" fill="#4b4b4b"/><rect x="17.1" y="61.6" width="1.4" height="0.9" fill="#4b4b4b"/><rect x="132.9" y="65.6" width="1.4" height="1.5" fill="#4b4b4b"/><rect x="36.6" y="57.3" width="0.9" height="1.4" fill="#878787"/><rect x="127.4" y="87.0" width="0.7" height="1.5" fill="#3c3c3c"/><rect x="118.9" y="54.0" width="1.0" height="1.2" fill="#3c3c3c"/><rect x="55.2" y="83.5" width="1.6" height="1.6" fill="#4b4b4b"/><rect x="51.0" y="58.8" width="1.6" height="1.6" fill="#696969"/><rect x="30.5" y="76.0" width="1.1" height="0.8" fill="#878787"/><rect x="92.1" y="55.0" width="0.9" height="1.6" fill="#9b9b9b"/><rect x="23.9" y="50.4" width="1.7" height="0.9" fill="#9b9b9b"/><rect x="59.1" y="52.3" width="1.7" height="0.9" fill="#4b4b4b"/><rect x="37.4" y="62.6" width="1.0" height="0.7" fill="#5a5a5a"/><rect x="49.9" y="56.8" width="0.7" height="0.7" fill="#696969"/><rect x="91.5" y="46.2" width="1.0" height="0.8" fill="#5a5a5a"/><rect x="135.4" y="63.0" width="0.6" height="1.0" fill="#b4b4b4"/><rect x="54.0" y="48.4" width="1.3" height="1.4" fill="#696969"/><rect x="37.8" y="85.0" width="1.6" height="1.8" fill="#9b9b9b"/><rect x="78.0" y="85.0" width="0.7" height="1.6" fill="#4b4b4b"/><rect x="73.6" y="74.0" width="0.9" height="0.6" fill="#b4b4b4"/><rect x="42.3" y="67.3" width="0.6" height="0.9" fill="#787878"/><rect x="1.5" y="67.9" width="1.6" height="1.6" fill="#9b9b9b"/><rect x="54.5" y="79.3" width="1.6" height="1.5" fill="#3c3c3c"/><rect x="127.8" y="66.0" width="1.6" height="1.1" fill="#323232"/><rect x="1.3" y="51.8" width="1.0" height="1.5" fill="#b4b4b4"/><rect x="89.7" y="79.6" width="1.0" height="1.4" fill="#787878"/><rect x="42.6" y="48.8" width="1.4" height="1.3" fill="#696969"/><rect x="45.7" y="76.8" width="0.9" height="1.5" fill="#b4b4b4"/><rect x="41.6" y="54.5" width="1.0" height="0.8" fill="#787878"/><rect x="47.8" y="63.9" width="0.6" height="1.2" fill="#878787"/><rect x="12.9" y="85.5" width="1.6" height="1.5" fill="#323232"/><rect x="120.2" y="59.3" width="1.5" height="0.7" fill="#787878"/><rect x="58.7" y="86.0" width="0.9" height="1.1" fill="#4b4b4b"/><rect x="110.9" y="48.9" width="1.1" height="1.7" fill="#4b4b4b"/><rect x="106.2" y="67.8" width="0.6" height="1.5" fill="#878787"/><rect x="124.4" y="48.3" width="1.3" height="1.0" fill="#9b9b9b"/><rect x="116.9" y="72.1" width="1.2" height="1.3" fill="#3c3c3c"/><rect x="16.6" y="76.7" width="1.5" height="1.1" fill="#9b9b9b"/><rect x="57.2" y="62.0" width="0.9" height="1.3" fill="#323232"/><rect x="70.3" y="47.3" width="1.4" height="1.1" fill="#323232"/><rect x="81.2" y="84.7" width="0.8" height="1.2" fill="#696969"/><rect x="100.7" y="59.0" width="1.5" height="1.8" fill="#878787"/><rect x="7.2" y="86.2" width="1.5" height="1.7" fill="#3c3c3c"/><rect x="32.0" y="80.9" width="1.4" height="1.7" fill="#3c3c3c"/><rect x="108.9" y="67.2" width="1.8" height="0.7" fill="#323232"/><rect x="97.1" y="56.4" width="1.6" height="1.1" fill="#b4b4b4"/><rect x="2.0" y="63.7" width="1.2" height="1.8" fill="#5a5a5a"/><rect x="10.0" y="69.0" width="1.5" height="1.2" fill="#5a5a5a"/><rect x="9.8" y="66.6" width="0.7" height="1.6" fill="#3c3c3c"/><rect x="108.8" y="52.3" width="1.0" height="0.7" fill="#323232"/><rect x="126.8" y="85.6" width="0.9" height="0.9" fill="#878787"/><rect x="24.8" y="62.1" width="1.6" height="1.3" fill="#9b9b9b"/><rect x="9.8" y="87.0" width="0.8" height="1.4" fill="#5a5a5a"/><rect x="76.4" y="87.3" width="1.1" height="1.6" fill="#787878"/><rect x="115.3" y="85.3" width="1.4" height="0.9" fill="#5a5a5a"/><rect x="24.7" y="51.3" width="1.4" height="1.2" fill="#4b4b4b"/><rect x="38.0" y="56.7" width="1.0" height="1.3" fill="#696969"/><rect x="26.8" y="87.3" width="1.4" height="1.5" fill="#787878"/><rect x="118.8" y="77.9" width="0.8" height="0.7" fill="#696969"/><rect x="58.0" y="80.0" width="1.1" height="1.1" fill="#b4b4b4"/><rect x="16.9" y="49.9" width="1.2" height="1.1" fill="#9b9b9b"/><rect x="79.1" y="57.8" width="1.6" height="0.9" fill="#3c3c3c"/><rect x="92.4" y="64.9" width="1.7" height="1.1" fill="#878787"/><rect x="82.1" y="64.6" width="0.7" height="1.1" fill="#696969"/><rect x="79.8" y="73.3" width="0.9" height="1.4" fill="#323232"/><rect x="91.7" y="56.2" width="1.1" height="0.8" fill="#696969"/><rect x="53.0" y="57.6" width="0.7" height="1.7" fill="#3c3c3c"/><rect x="74.5" y="50.1" width="1.7" height="0.7" fill="#787878"/><rect x="2.2" y="47.3" width="1.3" height="1.4" fill="#323232"/><rect x="91.2" y="52.5" width="0.7" height="0.8" fill="#b4b4b4"/><rect x="43.1" y="73.8" width="1.3" height="1.8" fill="#323232"/><rect x="135.5" y="62.4" width="1.6" height="1.4" fill="#3c3c3c"/><rect x="136.2" y="48.8" width="1.2" height="1.1" fill="#5a5a5a"/><rect x="70.7" y="70.2" width="1.2" height="1.6" fill="#b4b4b4"/><rect x="53.9" y="76.8" width="0.7" height="0.8" fill="#696969"/><rect x="90.5" y="86.3" width="1.2" height="1.7" fill="#878787"/><rect x="64.0" y="46.7" width="1.6" height="1.7" fill="#323232"/><rect x="14.9" y="63.1" width="1.3" height="1.8" fill="#3c3c3c"/><rect x="41.2" y="67.1" width="0.7" height="1.3" fill="#4b4b4b"/><rect x="90.5" y="67.2" width="1.0" height="1.0" fill="#5a5a5a"/><rect x="33.7" y="63.2" width="0.7" height="0.9" fill="#9b9b9b"/><rect x="23.2" y="50.3" width="0.8" height="1.7" fill="#b4b4b4"/><rect x="21.1" y="86.3" width="1.2" height="1.1" fill="#3c3c3c"/><rect x="56.4" y="46.4" width="0.8" height="1.6" fill="#878787"/><rect x="21.4" y="68.0" width="0.6" height="0.7" fill="#696969"/><rect x="124.5" y="68.5" width="1.5" height="1.5" fill="#878787"/><rect x="56.8" y="49.3" width="0.9" height="0.7" fill="#878787"/><rect x="44.9" y="66.3" width="1.4" height="1.7" fill="#4b4b4b"/><rect x="77.5" y="66.8" width="1.7" height="1.1" fill="#696969"/><rect x="36.5" y="70.9" width="0.9" height="0.7" fill="#9b9b9b"/><rect x="52.5" y="72.9" width="1.0" height="0.7" fill="#696969"/><rect x="114.1" y="48.6" width="1.2" height="1.3" fill="#878787"/><rect x="111.7" y="74.0" width="1.5" height="0.6" fill="#787878"/><rect x="66.1" y="55.6" width="1.5" height="1.2" fill="#323232"/><rect x="51.0" y="70.6" width="0.7" height="1.4" fill="#787878"/><rect x="131.1" y="61.2" width="1.3" height="1.0" fill="#696969"/><rect x="28.6" y="77.7" width="0.7" height="0.8" fill="#3c3c3c"/><rect x="70.5" y="77.3" width="0.7" height="0.7" fill="#696969"/><rect x="80.5" y="79.5" width="1.7" height="1.4" fill="#787878"/><rect x="54.9" y="57.9" width="1.4" height="0.7" fill="#5a5a5a"/><rect x="113.5" y="59.6" width="1.0" height="1.6" fill="#696969"/><rect x="87.7" y="48.4" width="1.5" height="0.7" fill="#3c3c3c"/><rect x="75.4" y="84.5" width="1.4" height="0.6" fill="#5a5a5a"/><rect x="79.1" y="46.2" width="1.5" height="1.1" fill="#3c3c3c"/><rect x="23.5" y="49.5" width="1.4" height="0.8" fill="#9b9b9b"/><rect x="92.4" y="79.2" width="1.1" height="1.7" fill="#3c3c3c"/><rect x="114.0" y="85.7" width="1.0" height="1.6" fill="#3c3c3c"/><rect x="96.0" y="62.5" width="1.4" height="1.4" fill="#3c3c3c"/><rect x="125.9" y="54.8" width="1.1" height="1.2" fill="#3c3c3c"/><rect x="21.2" y="57.4" width="1.1" height="1.7" fill="#878787"/><rect x="27.3" y="75.2" width="1.2" height="1.1" fill="#878787"/><rect x="69.8" y="66.0" width="1.3" height="1.6" fill="#787878"/><rect x="27.6" y="60.4" width="0.8" height="1.0" fill="#b4b4b4"/><rect x="93.3" y="64.8" width="1.3" height="1.2" fill="#4b4b4b"/><rect x="65.6" y="86.7" width="1.0" height="1.4" fill="#5a5a5a"/><rect x="86.3" y="60.6" width="1.1" height="0.7" fill="#3c3c3c"/><rect x="109.6" y="56.6" width="0.9" height="0.9" fill="#3c3c3c"/><rect x="76.4" y="86.5" width="1.7" height="1.1" fill="#9b9b9b"/><rect x="16.0" y="53.7" width="1.3" height="1.4" fill="#b4b4b4"/><rect x="115.7" y="47.5" width="1.4" height="1.3" fill="#b4b4b4"/><rect x="66.9" y="66.3" width="1.1" height="1.8" fill="#787878"/><rect x="110.0" y="50.1" width="1.5" height="0.9" fill="#5a5a5a"/><rect x="117.5" y="76.6" width="1.0" height="0.8" fill="#5a5a5a"/><rect x="79.5" y="83.3" width="1.7" height="1.4" fill="#787878"/><rect x="14.9" y="78.7" width="1.6" height="1.3" fill="#696969"/><rect x="15.1" y="60.9" width="0.8" height="1.7" fill="#696969"/><rect x="39.1" y="69.3" width="0.9" height="0.7" fill="#323232"/><rect x="38.9" y="57.5" width="1.2" height="1.6" fill="#4b4b4b"/><rect x="112.2" y="68.6" width="0.8" height="0.7" fill="#4b4b4b"/><rect x="73.0" y="73.4" width="1.7" height="1.5" fill="#696969"/><rect x="41.8" y="63.7" width="1.5" height="1.4" fill="#b4b4b4"/><rect x="31.9" y="64.8" width="1.0" height="1.5" fill="#b4b4b4"/><rect x="37.0" y="76.2" width="1.7" height="0.7" fill="#b4b4b4"/><rect x="15.1" y="85.0" width="1.4" height="0.7" fill="#323232"/><rect x="13.9" y="69.5" width="0.7" height="1.8" fill="#696969"/><rect x="48.3" y="51.8" width="1.7" height="1.4" fill="#4b4b4b"/><rect x="4.1" y="69.7" width="1.8" height="1.4" fill="#b4b4b4"/><rect x="74.0" y="64.1" width="1.4" height="0.7" fill="#787878"/><rect x="83.6" y="84.4" width="1.7" height="0.7" fill="#4b4b4b"/><rect x="66.3" y="49.3" width="1.2" height="1.3" fill="#b4b4b4"/><rect x="12.2" y="83.3" width="0.9" height="0.9" fill="#696969"/><rect x="128.2" y="86.5" width="1.7" height="1.7" fill="#878787"/><rect x="127.6" y="46.8" width="1.2" height="1.3" fill="#787878"/><rect x="127.4" y="49.6" width="1.2" height="1.8" fill="#323232"/><rect x="14.9" y="58.4" width="1.0" height="1.8" fill="#878787"/><rect x="4.4" y="80.4" width="1.4" height="1.2" fill="#3c3c3c"/><rect x="0.1" y="48.8" width="1.6" height="1.8" fill="#5a5a5a"/><rect x="55.6" y="59.9" width="1.0" height="0.6" fill="#5a5a5a"/><rect x="35.8" y="70.3" width="1.2" height="1.0" fill="#787878"/><rect x="62.1" y="55.7" width="1.7" height="0.8" fill="#4b4b4b"/><rect x="28.9" y="64.7" width="0.9" height="1.7" fill="#4b4b4b"/><rect x="32.5" y="73.2" width="0.9" height="1.2" fill="#696969"/><rect x="78.3" y="46.9" width="1.0" height="0.7" fill="#b4b4b4"/><rect x="45.0" y="76.1" width="1.4" height="1.5" fill="#b4b4b4"/><rect x="12.6" y="74.4" width="1.2" height="1.1" fill="#323232"/><rect x="56.6" y="87.1" width="1.0" height="1.0" fill="#3c3c3c"/><rect x="135.2" y="62.1" width="0.8" height="1.5" fill="#5a5a5a"/><rect x="46.2" y="78.8" width="1.1" height="0.9" fill="#3c3c3c"/><rect x="65.0" y="80.0" width="0.6" height="1.2" fill="#878787"/><rect x="130.3" y="63.6" width="0.8" height="0.7" fill="#4b4b4b"/><rect x="119.9" y="85.9" width="1.7" height="1.0" fill="#4b4b4b"/><rect x="19.3" y="75.7" width="1.7" height="0.8" fill="#4b4b4b"/><rect x="95.8" y="55.8" width="1.6" height="1.7" fill="#9b9b9b"/><rect x="50.1" y="76.2" width="1.7" height="0.8" fill="#3c3c3c"/><rect x="134.2" y="76.1" width="1.4" height="0.7" fill="#787878"/><rect x="25.0" y="51.1" width="1.2" height="1.2" fill="#9b9b9b"/><rect x="104.1" y="67.9" width="1.7" height="0.7" fill="#5a5a5a"/><rect x="2.3" y="84.2" width="1.8" height="1.7" fill="#b4b4b4"/><rect x="25.4" y="86.1" width="1.4" height="0.7" fill="#9b9b9b"/><rect x="108.2" y="86.4" width="1.2" height="1.3" fill="#9b9b9b"/><rect x="63.5" y="53.9" width="1.7" height="1.8" fill="#323232"/><rect x="59.9" y="70.3" width="1.3" height="0.9" fill="#323232"/><rect x="23.6" y="76.6" width="0.9" height="0.6" fill="#5a5a5a"/><rect x="57.9" y="85.9" width="1.3" height="0.7" fill="#323232"/><rect x="24.9" y="46.6" width="1.0" height="0.6" fill="#696969"/><rect x="115.7" y="69.3" width="1.4" height="0.9" fill="#787878"/><rect x="22.7" y="52.0" width="1.3" height="1.3" fill="#878787"/><rect x="73.7" y="65.1" width="1.0" height="1.7" fill="#5a5a5a"/><rect x="92.5" y="71.8" width="1.7" height="1.4" fill="#9b9b9b"/><rect x="69.5" y="86.9" width="0.9" height="0.8" fill="#787878"/><rect x="32.1" y="70.2" width="0.8" height="1.7" fill="#696969"/><rect x="87.2" y="72.3" width="0.6" height="1.2" fill="#3c3c3c"/><rect x="67.9" y="84.3" width="1.2" height="1.1" fill="#323232"/><rect x="90.5" y="62.6" width="1.2" height="1.6" fill="#9b9b9b"/><rect x="7.7" y="59.3" width="1.4" height="0.7" fill="#4b4b4b"/><rect x="132.4" y="57.6" width="1.1" height="0.7" fill="#323232"/><rect x="32.0" y="80.4" width="1.6" height="0.9" fill="#b4b4b4"/><rect x="14.0" y="60.7" width="0.7" height="0.7" fill="#9b9b9b"/><rect x="20.7" y="59.1" width="1.4" height="1.2" fill="#5a5a5a"/><rect x="88.3" y="74.6" width="1.1" height="1.0" fill="#4b4b4b"/><rect x="93.5" y="79.1" width="1.5" height="1.6" fill="#4b4b4b"/><rect x="16.1" y="65.7" width="1.5" height="0.7" fill="#323232"/><rect x="130.5" y="73.3" width="1.2" height="1.4" fill="#878787"/><rect x="127.3" y="72.7" width="0.7" height="1.4" fill="#3c3c3c"/><rect x="35.4" y="58.0" width="1.1" height="0.9" fill="#696969"/><rect x="134.5" y="71.8" width="0.8" height="1.5" fill="#323232"/><rect x="59.5" y="62.9" width="1.1" height="1.5" fill="#323232"/><rect x="77.7" y="85.2" width="1.4" height="1.2" fill="#878787"/><rect x="97.1" y="47.6" width="1.7" height="1.2" fill="#5a5a5a"/><rect x="31.5" y="71.7" width="0.7" height="0.8" fill="#878787"/><rect x="43.1" y="57.3" width="0.8" height="1.4" fill="#3c3c3c"/><rect x="45.1" y="84.5" width="1.7" height="0.9" fill="#696969"/><rect x="131.4" y="78.1" width="1.0" height="0.9" fill="#b4b4b4"/><rect x="135.4" y="48.7" width="0.7" height="1.4" fill="#323232"/><rect x="64.6" y="76.9" width="0.9" height="0.8" fill="#787878"/><rect x="32.9" y="59.6" width="0.7" height="0.7" fill="#787878"/><rect x="40.4" y="81.7" width="1.6" height="1.2" fill="#5a5a5a"/><rect x="55.5" y="55.8" width="1.2" height="1.8" fill="#3c3c3c"/><rect x="58.6" y="65.8" width="1.1" height="1.4" fill="#b4b4b4"/><rect x="123.2" y="56.4" width="1.2" height="1.8" fill="#b4b4b4"/><rect x="11.9" y="53.5" width="1.8" height="1.3" fill="#4b4b4b"/><rect x="75.3" y="57.3" width="1.5" height="1.5" fill="#787878"/><rect x="36.6" y="79.1" width="0.6" height="0.7" fill="#323232"/><rect x="59.0" y="50.4" width="1.2" height="1.7" fill="#323232"/><rect x="75.1" y="46.1" width="1.2" height="1.3" fill="#4b4b4b"/><rect x="135.9" y="66.7" width="1.5" height="0.9" fill="#5a5a5a"/><rect x="93.0" y="71.6" width="0.7" height="1.5" fill="#4b4b4b"/><rect x="33.5" y="69.7" width="1.1" height="1.1" fill="#878787"/><rect x="99.7" y="71.7" width="0.8" height="0.9" fill="#9b9b9b"/><rect x="134.7" y="82.3" width="1.7" height="1.4" fill="#787878"/><rect x="41.5" y="55.2" width="1.6" height="1.2" fill="#878787"/><rect x="100.9" y="82.1" width="0.8" height="0.6" fill="#3c3c3c"/><rect x="96.7" y="64.6" width="1.0" height="1.1" fill="#9b9b9b"/><rect x="59.4" y="54.8" width="0.6" height="1.6" fill="#3c3c3c"/><rect x="62.1" y="65.7" width="1.7" height="1.1" fill="#878787"/><rect x="92.5" y="66.9" width="1.6" height="1.7" fill="#3c3c3c"/><rect x="101.1" y="58.3" width="1.5" height="1.7" fill="#9b9b9b"/><rect x="59.4" y="73.1" width="0.9" height="1.5" fill="#b4b4b4"/><rect x="80.1" y="76.2" width="1.3" height="1.1" fill="#878787"/><rect x="47.0" y="63.7" width="0.7" height="1.1" fill="#878787"/><rect x="40.9" y="85.7" width="1.5" height="1.1" fill="#9b9b9b"/><rect x="79.6" y="80.1" width="1.6" height="1.1" fill="#787878"/><rect x="101.9" y="70.0" width="0.9" height="1.4" fill="#b4b4b4"/><rect x="55.6" y="52.5" width="0.6" height="1.5" fill="#787878"/><rect x="110.5" y="67.1" width="0.6" height="1.5" fill="#787878"/><rect x="72.1" y="66.6" width="0.8" height="1.4" fill="#9b9b9b"/><rect x="90.5" y="58.0" width="1.6" height="1.1" fill="#4b4b4b"/><rect x="13.4" y="48.0" width="1.2" height="1.3" fill="#9b9b9b"/><rect x="77.7" y="85.6" width="1.0" height="1.5" fill="#3c3c3c"/><rect x="1.2" y="68.7" width="0.8" height="1.0" fill="#5a5a5a"/><rect x="51.9" y="57.4" width="1.0" height="1.2" fill="#323232"/><rect x="73.6" y="62.5" width="1.1" height="1.5" fill="#5a5a5a"/><rect x="28.2" y="47.1" width="1.7" height="1.4" fill="#323232"/><rect x="100.9" y="57.0" width="1.2" height="1.4" fill="#323232"/><rect x="90.8" y="58.1" width="1.0" height="1.3" fill="#787878"/><rect x="95.5" y="60.0" width="1.7" height="0.9" fill="#9b9b9b"/><rect x="95.7" y="47.1" width="1.7" height="1.5" fill="#696969"/><rect x="83.2" y="87.0" width="0.9" height="0.9" fill="#787878"/><rect x="20.5" y="86.0" width="1.0" height="1.1" fill="#878787"/><rect x="24.0" y="53.6" width="1.3" height="1.5" fill="#9b9b9b"/><rect x="48.5" y="75.3" width="0.9" height="1.7" fill="#5a5a5a"/><rect x="65.4" y="48.5" width="1.2" height="1.4" fill="#3c3c3c"/><rect x="104.6" y="74.2" width="1.7" height="0.6" fill="#787878"/><rect x="6.0" y="60.7" width="1.8" height="1.3" fill="#878787"/><rect x="8.6" y="50.2" width="0.6" height="1.4" fill="#4b4b4b"/><rect x="75.6" y="47.8" width="0.8" height="1.4" fill="#323232"/><rect x="63.8" y="58.0" width="1.3" height="1.0" fill="#787878"/><rect x="0.5" y="84.3" width="1.0" height="0.6" fill="#787878"/><rect x="42.4" y="70.6" width="0.9" height="0.7" fill="#3c3c3c"/><rect x="64.0" y="67.2" width="1.0" height="1.7" fill="#9b9b9b"/><rect x="94.5" y="66.8" width="1.1" height="1.1" fill="#b4b4b4"/><rect x="36.3" y="64.4" width="1.3" height="1.8" fill="#5a5a5a"/><rect x="38.9" y="58.3" width="1.1" height="1.4" fill="#323232"/><rect x="84.7" y="57.8" width="0.8" height="1.6" fill="#b4b4b4"/><rect x="93.3" y="74.7" width="1.5" height="1.1" fill="#878787"/><rect x="68.4" y="55.4" width="1.3" height="1.4" fill="#5a5a5a"/><rect x="10.2" y="56.2" width="1.8" height="1.3" fill="#b4b4b4"/><rect x="75.9" y="47.6" width="0.9" height="1.0" fill="#3c3c3c"/><rect x="72.6" y="50.7" width="1.6" height="1.6" fill="#3c3c3c"/><rect x="61.1" y="87.1" width="1.7" height="1.3" fill="#b4b4b4"/><rect x="80.8" y="70.2" width="0.8" height="1.2" fill="#5a5a5a"/><rect x="92.0" y="55.0" width="1.1" height="1.3" fill="#787878"/><rect x="135.1" y="84.2" width="1.3" height="0.6" fill="#5a5a5a"/><rect x="82.4" y="56.1" width="1.0" height="0.8" fill="#b4b4b4"/><rect x="71.4" y="86.5" width="0.8" height="0.8" fill="#5a5a5a"/><rect x="103.5" y="48.4" width="0.6" height="1.6" fill="#4b4b4b"/><rect x="108.0" y="72.3" width="1.5" height="1.7" fill="#787878"/><rect x="109.9" y="83.4" width="1.5" height="1.0" fill="#3c3c3c"/><rect x="84.0" y="84.8" width="0.7" height="1.3" fill="#878787"/><rect x="120.0" y="73.2" width="1.1" height="1.4" fill="#878787"/><rect x="67.6" y="86.2" width="0.9" height="0.9" fill="#5a5a5a"/><rect x="92.1" y="48.7" width="0.8" height="0.9" fill="#696969"/><rect x="127.7" y="73.6" width="0.7" height="1.4" fill="#878787"/><rect x="127.6" y="59.3" width="0.6" height="1.1" fill="#878787"/><rect x="16.7" y="56.5" width="0.7" height="1.0" fill="#787878"/><rect x="76.1" y="62.2" width="1.7" height="1.4" fill="#4b4b4b"/><rect x="27.8" y="46.5" width="1.4" height="1.4" fill="#5a5a5a"/><rect x="61.2" y="66.1" width="0.7" height="1.3" fill="#323232"/><rect x="17.7" y="61.9" width="0.9" height="1.1" fill="#878787"/><rect x="101.8" y="77.6" width="1.5" height="0.7" fill="#3c3c3c"/><rect x="20.2" y="52.7" width="0.6" height="0.6" fill="#878787"/><rect x="19.8" y="75.6" width="0.8" height="1.0" fill="#323232"/><rect x="80.9" y="55.5" width="0.8" height="1.1" fill="#878787"/><rect x="27.4" y="72.6" width="0.8" height="0.8" fill="#b4b4b4"/><rect x="108.1" y="63.0" width="1.1" height="1.5" fill="#3c3c3c"/><rect x="53.0" y="65.7" width="0.6" height="1.3" fill="#5a5a5a"/><rect x="110.1" y="84.8" width="1.1" height="1.5" fill="#878787"/><rect x="39.5" y="57.9" width="1.4" height="0.8" fill="#787878"/><rect x="126.2" y="50.5" width="1.4" height="0.9" fill="#696969"/><rect x="40.0" y="77.1" width="1.5" height="1.4" fill="#4b4b4b"/><rect x="85.7" y="81.9" width="1.0" height="0.9" fill="#b4b4b4"/><rect x="133.7" y="76.7" width="1.6" height="1.0" fill="#696969"/><rect x="136.4" y="80.8" width="1.4" height="1.8" fill="#4b4b4b"/><rect x="35.4" y="66.6" width="0.7" height="1.5" fill="#323232"/><rect x="59.3" y="70.0" width="0.9" height="1.7" fill="#878787"/><rect x="26.1" y="64.6" width="1.6" height="1.8" fill="#696969"/><rect x="25.5" y="67.0" width="1.3" height="1.3" fill="#696969"/><rect x="27.1" y="69.1" width="1.0" height="0.6" fill="#323232"/><rect x="93.9" y="72.0" width="1.4" height="1.2" fill="#b4b4b4"/><rect x="87.0" y="48.7" width="1.5" height="0.9" fill="#9b9b9b"/><rect x="24.3" y="65.2" width="1.2" height="1.4" fill="#696969"/><rect x="43.4" y="62.5" width="1.0" height="1.5" fill="#9b9b9b"/><rect x="73.5" y="71.7" width="1.7" height="1.4" fill="#5a5a5a"/><rect x="17.2" y="70.9" width="1.4" height="1.1" fill="#4b4b4b"/><rect x="74.5" y="54.1" width="1.4" height="1.0" fill="#323232"/><rect x="50.4" y="84.7" width="0.8" height="1.4" fill="#696969"/><rect x="93.3" y="68.7" width="1.6" height="1.0" fill="#3c3c3c"/><rect x="7.8" y="72.9" width="1.2" height="0.7" fill="#4b4b4b"/><rect x="116.4" y="52.7" width="1.0" height="0.7" fill="#787878"/><rect x="125.4" y="61.5" width="1.4" height="1.0" fill="#878787"/><rect x="75.6" y="70.2" width="1.6" height="1.4" fill="#787878"/><rect x="39.2" y="78.1" width="1.4" height="1.2" fill="#323232"/><rect x="60.2" y="81.4" width="1.2" height="1.7" fill="#4b4b4b"/><rect x="69.7" y="48.4" width="0.8" height="1.3" fill="#3c3c3c"/><rect x="135.2" y="78.9" width="0.9" height="1.1" fill="#b4b4b4"/><rect x="57.3" y="57.6" width="1.8" height="1.4" fill="#878787"/><rect x="93.1" y="81.5" width="0.7" height="0.7" fill="#878787"/><rect x="72.8" y="85.9" width="1.7" height="1.1" fill="#878787"/><rect x="13.4" y="55.6" width="0.8" height="1.4" fill="#696969"/><rect x="50.2" y="82.9" width="0.9" height="0.6" fill="#4b4b4b"/><rect x="65.9" y="51.5" width="0.8" height="1.7" fill="#3c3c3c"/><rect x="77.3" y="52.4" width="1.0" height="0.8" fill="#323232"/><rect x="38.4" y="48.0" width="1.4" height="1.1" fill="#3c3c3c"/><rect x="14.9" y="47.5" width="1.4" height="1.2" fill="#5a5a5a"/><rect x="113.1" y="83.8" width="0.8" height="1.2" fill="#696969"/><rect x="125.2" y="54.7" width="1.4" height="0.7" fill="#4b4b4b"/><rect x="129.5" y="71.6" width="1.0" height="1.5" fill="#323232"/><rect x="111.5" y="55.9" width="1.6" height="1.2" fill="#b4b4b4"/><rect x="118.1" y="56.3" width="1.3" height="1.0" fill="#4b4b4b"/><rect x="81.2" y="56.9" width="0.9" height="1.4" fill="#5a5a5a"/><rect x="63.3" y="50.9" width="0.7" height="0.8" fill="#878787"/><rect x="67.7" y="72.7" width="1.0" height="1.0" fill="#4b4b4b"/><rect x="30.8" y="71.2" width="0.9" height="0.7" fill="#b4b4b4"/><rect x="81.6" y="71.5" width="1.5" height="1.3" fill="#878787"/><rect x="55.5" y="72.9" width="1.0" height="1.1" fill="#787878"/><rect x="16.8" y="56.4" width="1.2" height="1.3" fill="#696969"/><rect x="109.2" y="74.1" width="1.6" height="1.1" fill="#323232"/><rect x="34.3" y="59.1" width="0.7" height="1.6" fill="#696969"/><rect x="80.8" y="72.4" width="1.4" height="1.8" fill="#b4b4b4"/><rect x="121.8" y="49.5" width="0.9" height="1.5" fill="#5a5a5a"/><rect x="12.9" y="48.8" width="1.4" height="1.7" fill="#696969"/><rect x="127.3" y="79.5" width="1.0" height="1.2" fill="#5a5a5a"/><rect x="87.2" y="79.3" width="1.0" height="0.8" fill="#3c3c3c"/><rect x="57.2" y="49.4" width="1.5" height="1.3" fill="#5a5a5a"/><rect x="61.9" y="70.8" width="1.0" height="0.6" fill="#878787"/><rect x="59.8" y="56.7" width="0.8" height="1.3" fill="#3c3c3c"/><rect x="17.2" y="79.5" width="0.7" height="1.3" fill="#3c3c3c"/><rect x="68.8" y="53.4" width="1.3" height="1.0" fill="#787878"/><rect x="78.9" y="83.2" width="1.7" height="1.5" fill="#323232"/><rect x="64.6" y="78.3" width="1.4" height="0.8" fill="#b4b4b4"/><rect x="118.9" y="79.4" width="1.5" height="1.7" fill="#9b9b9b"/><rect x="12.6" y="52.0" width="0.7" height="0.8" fill="#696969"/><rect x="15.5" y="51.8" width="0.8" height="1.3" fill="#787878"/><rect x="14.1" y="59.9" width="1.1" height="1.2" fill="#878787"/><rect x="12.7" y="82.7" width="0.7" height="0.9" fill="#4b4b4b"/><rect x="56.4" y="67.6" width="0.8" height="1.2" fill="#696969"/><rect x="8.1" y="65.3" width="1.3" height="1.3" fill="#b4b4b4"/><rect x="73.6" y="66.3" width="1.8" height="0.9" fill="#878787"/><rect x="85.5" y="65.8" width="1.4" height="1.1" fill="#9b9b9b"/><rect x="127.9" y="54.7" width="0.7" height="0.8" fill="#5a5a5a"/><rect x="124.4" y="49.8" width="0.6" height="1.6" fill="#787878"/><rect x="12.4" y="57.8" width="1.6" height="1.2" fill="#787878"/><rect x="59.7" y="65.0" width="1.2" height="1.0" fill="#9b9b9b"/><rect x="69.0" y="85.5" width="1.7" height="1.8" fill="#4b4b4b"/><rect x="21.0" y="67.8" width="1.3" height="1.7" fill="#b4b4b4"/><rect x="10.9" y="63.7" width="1.7" height="1.6" fill="#323232"/><rect x="11.2" y="55.3" width="0.7" height="1.5" fill="#323232"/><rect x="80.6" y="80.8" width="1.1" height="0.8" fill="#3c3c3c"/><rect x="46.6" y="64.4" width="1.5" height="0.8" fill="#3c3c3c"/><rect x="27.3" y="61.7" width="1.2" height="0.7" fill="#696969"/><rect x="6.0" y="66.3" width="0.7" height="0.7" fill="#696969"/><rect x="127.5" y="48.7" width="1.0" height="1.0" fill="#b4b4b4"/><rect x="128.0" y="53.1" width="1.8" height="0.8" fill="#5a5a5a"/><rect x="16.5" y="58.6" width="1.1" height="1.6" fill="#787878"/><rect x="27.8" y="83.3" width="1.6" height="1.2" fill="#323232"/><rect x="40.4" y="83.9" width="1.6" height="1.1" fill="#3c3c3c"/><rect x="81.2" y="80.0" width="0.7" height="0.9" fill="#787878"/><rect x="59.7" y="66.7" width="1.5" height="1.0" fill="#696969"/><rect x="74.6" y="62.6" width="1.3" height="0.9" fill="#323232"/><rect x="62.3" y="47.9" width="1.3" height="1.6" fill="#3c3c3c"/><rect x="36.9" y="48.1" width="1.0" height="1.0" fill="#3c3c3c"/><rect x="32.4" y="79.4" width="1.3" height="1.5" fill="#323232"/><rect x="49.2" y="64.4" width="1.2" height="0.6" fill="#3c3c3c"/><rect x="54.9" y="80.6" width="1.4" height="0.7" fill="#878787"/><rect x="102.5" y="66.9" width="1.6" height="1.6" fill="#4b4b4b"/><rect x="92.0" y="65.2" width="1.2" height="1.3" fill="#b4b4b4"/><rect x="70.4" y="87.0" width="1.7" height="1.6" fill="#b4b4b4"/><rect x="81.7" y="83.7" width="0.7" height="1.2" fill="#878787"/><rect x="1.0" y="70.1" width="1.7" height="0.9" fill="#9b9b9b"/><rect x="15.4" y="72.3" width="1.6" height="1.1" fill="#787878"/><rect x="30.7" y="76.4" width="1.7" height="1.5" fill="#696969"/><rect x="131.1" y="63.0" width="1.2" height="1.7" fill="#b4b4b4"/><rect x="10.5" y="64.3" width="0.9" height="0.8" fill="#878787"/><rect x="127.6" y="51.1" width="1.1" height="0.9" fill="#b4b4b4"/><rect x="15.0" y="59.8" width="1.1" height="1.2" fill="#878787"/><rect x="18.2" y="58.9" width="0.6" height="1.5" fill="#b4b4b4"/><rect x="31.2" y="56.1" width="1.2" height="1.4" fill="#787878"/><rect x="89.6" y="58.2" width="1.4" height="0.8" fill="#5a5a5a"/><rect x="135.2" y="85.5" width="1.7" height="1.4" fill="#3c3c3c"/><rect x="33.1" y="78.6" width="1.7" height="0.9" fill="#3c3c3c"/><rect x="60.7" y="57.5" width="1.7" height="1.3" fill="#4b4b4b"/><rect x="101.9" y="77.8" width="1.2" height="0.9" fill="#b4b4b4"/><rect x="82.3" y="75.1" width="1.5" height="0.8" fill="#696969"/><rect x="132.5" y="54.8" width="0.9" height="1.8" fill="#323232"/><rect x="126.3" y="80.9" width="1.6" height="1.6" fill="#3c3c3c"/><rect x="120.5" y="84.8" width="1.5" height="0.7" fill="#878787"/><rect x="8.4" y="76.3" width="1.2" height="1.7" fill="#9b9b9b"/><rect x="116.7" y="54.3" width="1.0" height="1.1" fill="#323232"/><rect x="87.3" y="48.8" width="1.7" height="1.5" fill="#878787"/><rect x="63.1" y="54.5" width="1.1" height="1.4" fill="#b4b4b4"/><rect x="97.7" y="52.5" width="1.8" height="1.7" fill="#5a5a5a"/><rect x="18.7" y="86.2" width="1.6" height="1.3" fill="#4b4b4b"/><rect x="92.4" y="46.9" width="1.6" height="1.3" fill="#696969"/><rect x="83.8" y="60.7" width="1.0" height="0.7" fill="#323232"/><rect x="116.0" y="68.8" width="0.7" height="1.2" fill="#9b9b9b"/><rect x="110.3" y="85.8" width="1.6" height="1.8" fill="#9b9b9b"/><rect x="106.0" y="71.0" width="1.3" height="0.8" fill="#787878"/><rect x="49.6" y="46.2" width="1.6" height="1.3" fill="#9b9b9b"/><rect x="81.0" y="81.4" width="1.5" height="1.8" fill="#9b9b9b"/><rect x="122.9" y="72.3" width="1.5" height="1.3" fill="#787878"/><rect x="8.3" y="69.6" width="1.0" height="0.7" fill="#3c3c3c"/><rect x="78.6" y="76.9" width="1.5" height="0.7" fill="#b4b4b4"/><rect x="57.7" y="79.3" width="1.0" height="1.8" fill="#5a5a5a"/><rect x="78.7" y="58.5" width="1.0" height="1.2" fill="#878787"/><rect x="122.2" y="58.1" width="1.2" height="1.2" fill="#696969"/><rect x="95.2" y="60.8" width="1.1" height="1.7" fill="#4b4b4b"/><rect x="118.3" y="76.8" width="0.7" height="0.8" fill="#3c3c3c"/><rect x="114.6" y="87.1" width="1.5" height="0.8" fill="#3c3c3c"/><rect x="85.2" y="71.1" width="0.8" height="1.8" fill="#b4b4b4"/><rect x="131.7" y="48.5" width="1.1" height="1.6" fill="#323232"/><rect x="35.4" y="55.1" width="1.0" height="1.3" fill="#787878"/><rect x="115.6" y="86.5" width="1.3" height="0.9" fill="#696969"/><rect x="123.1" y="60.8" width="1.3" height="1.6" fill="#9b9b9b"/><rect x="13.5" y="85.4" width="0.8" height="1.5" fill="#b4b4b4"/><rect x="79.8" y="80.2" width="0.8" height="1.6" fill="#9b9b9b"/><rect x="117.0" y="66.6" width="1.1" height="0.9" fill="#b4b4b4"/><rect x="0.6" y="65.4" width="1.8" height="1.0" fill="#4b4b4b"/><rect x="95.8" y="59.7" width="1.5" height="1.3" fill="#878787"/><rect x="70.4" y="80.6" width="1.6" height="1.4" fill="#696969"/><rect x="47.7" y="78.0" width="1.0" height="0.8" fill="#323232"/><rect x="13.7" y="49.8" width="1.8" height="1.5" fill="#9b9b9b"/><rect x="8.5" y="52.8" width="0.7" height="1.3" fill="#878787"/><rect x="130.4" y="58.3" width="0.9" height="0.9" fill="#4b4b4b"/><rect x="115.7" y="52.6" width="1.3" height="1.1" fill="#b4b4b4"/><rect x="129.8" y="59.0" width="1.6" height="1.2" fill="#3c3c3c"/><rect x="63.3" y="60.8" width="1.3" height="1.2" fill="#5a5a5a"/><rect x="95.8" y="55.6" width="1.4" height="1.6" fill="#5a5a5a"/><rect x="33.4" y="52.5" width="1.8" height="1.7" fill="#5a5a5a"/><rect x="73.9" y="48.1" width="1.0" height="1.7" fill="#3c3c3c"/><rect x="23.3" y="74.3" width="0.6" height="1.7" fill="#3c3c3c"/><rect x="118.3" y="47.9" width="1.7" height="0.9" fill="#5a5a5a"/><rect x="13.2" y="68.2" width="0.7" height="1.1" fill="#696969"/><rect x="60.1" y="51.2" width="1.3" height="1.6" fill="#696969"/><rect x="0.5" y="69.0" width="1.2" height="1.5" fill="#4b4b4b"/><rect x="94.8" y="55.3" width="0.8" height="1.2" fill="#696969"/><rect x="30.5" y="87.0" width="1.2" height="1.0" fill="#323232"/><rect x="72.2" y="48.1" width="1.4" height="1.2" fill="#878787"/><rect x="134.0" y="55.8" width="0.7" height="1.1" fill="#b4b4b4"/><rect x="28.5" y="46.2" width="0.8" height="0.7" fill="#9b9b9b"/><rect x="56.8" y="85.7" width="0.6" height="0.9" fill="#323232"/><rect x="81.1" y="72.7" width="1.6" height="1.6" fill="#4b4b4b"/><rect x="79.9" y="64.7" width="1.1" height="1.2" fill="#4b4b4b"/><rect x="93.0" y="79.6" width="1.2" height="1.7" fill="#9b9b9b"/><rect x="113.2" y="79.4" width="0.9" height="1.0" fill="#323232"/><rect x="60.8" y="65.0" width="1.1" height="0.8" fill="#696969"/><rect x="58.8" y="82.0" width="1.8" height="1.5" fill="#696969"/><rect x="41.3" y="68.9" width="1.8" height="1.7" fill="#b4b4b4"/><rect x="84.6" y="69.0" width="1.2" height="1.0" fill="#3c3c3c"/><rect x="103.2" y="65.9" width="0.9" height="0.7" fill="#878787"/><rect x="62.4" y="64.3" width="0.7" height="1.5" fill="#878787"/><rect x="112.4" y="74.2" width="1.5" height="0.8" fill="#b4b4b4"/><rect x="10.8" y="63.6" width="0.8" height="1.6" fill="#3c3c3c"/><rect x="118.3" y="69.0" width="0.8" height="0.9" fill="#b4b4b4"/><rect x="6.6" y="54.3" width="1.1" height="1.6" fill="#4b4b4b"/><rect x="80.7" y="56.8" width="0.7" height="1.3" fill="#878787"/><rect x="115.3" y="67.3" width="1.2" height="0.9" fill="#878787"/><rect x="3.9" y="79.5" width="1.6" height="0.8" fill="#323232"/><rect x="47.9" y="60.3" width="0.8" height="0.8" fill="#b4b4b4"/><rect x="38.2" y="71.2" width="0.9" height="1.5" fill="#696969"/><rect x="101.4" y="79.6" width="0.9" height="1.3" fill="#4b4b4b"/><rect x="130.2" y="70.2" width="0.9" height="1.4" fill="#696969"/><rect x="100.2" y="78.0" width="1.3" height="0.9" fill="#3c3c3c"/><rect x="13.7" y="78.2" width="0.8" height="1.5" fill="#696969"/><rect x="25.8" y="82.7" width="0.6" height="1.4" fill="#4b4b4b"/><rect x="82.4" y="84.8" width="1.3" height="1.3" fill="#787878"/><rect x="13.7" y="71.1" width="0.9" height="1.8" fill="#878787"/><rect x="117.9" y="75.9" width="0.9" height="0.6" fill="#787878"/><rect x="16.0" y="51.6" width="1.6" height="1.0" fill="#b4b4b4"/><rect x="4.8" y="53.1" width="1.5" height="1.3" fill="#696969"/><rect x="16.9" y="64.2" width="1.7" height="1.7" fill="#696969"/><rect x="2.9" y="62.5" width="1.7" height="1.2" fill="#3c3c3c"/><rect x="94.7" y="74.3" width="1.6" height="0.6" fill="#3c3c3c"/><rect x="24.5" y="75.7" width="1.3" height="1.4" fill="#9b9b9b"/><rect x="64.3" y="51.8" width="1.2" height="1.2" fill="#b4b4b4"/><rect x="29.4" y="76.4" width="1.3" height="1.8" fill="#696969"/><rect x="74.9" y="77.9" width="0.9" height="1.0" fill="#878787"/><rect x="67.3" y="83.0" width="1.3" height="1.0" fill="#4b4b4b"/><rect x="134.1" y="66.6" width="1.8" height="1.3" fill="#878787"/><rect x="59.9" y="51.0" width="1.0" height="1.5" fill="#5a5a5a"/><rect x="106.9" y="64.1" width="1.5" height="1.3" fill="#b4b4b4"/><rect x="49.4" y="81.1" width="0.9" height="1.6" fill="#b4b4b4"/><rect x="96.1" y="63.8" width="1.8" height="1.2" fill="#4b4b4b"/><rect x="53.5" y="71.7" width="1.0" height="0.6" fill="#4b4b4b"/><rect x="24.2" y="75.6" width="0.8" height="1.2" fill="#696969"/><rect x="12.1" y="81.6" width="0.6" height="1.8" fill="#9b9b9b"/><rect x="10.6" y="78.6" width="1.8" height="1.6" fill="#787878"/><rect x="60.2" y="82.1" width="0.7" height="1.2" fill="#9b9b9b"/><rect x="111.6" y="46.1" width="1.3" height="1.1" fill="#5a5a5a"/><rect x="130.3" y="70.9" width="0.9" height="1.3" fill="#323232"/><rect x="125.5" y="55.9" width="1.0" height="1.2" fill="#9b9b9b"/><rect x="31.6" y="64.2" width="1.1" height="1.3" fill="#696969"/><rect x="63.6" y="72.5" width="1.4" height="1.7" fill="#4b4b4b"/><rect x="32.4" y="86.5" width="1.3" height="1.0" fill="#696969"/><rect x="59.3" y="87.0" width="1.2" height="1.8" fill="#696969"/><rect x="52.2" y="87.4" width="1.1" height="1.1" fill="#4b4b4b"/><rect x="71.4" y="68.7" width="1.3" height="1.7" fill="#5a5a5a"/><rect x="12.6" y="87.0" width="0.6" height="0.7" fill="#696969"/><rect x="132.3" y="78.7" width="1.7" height="0.7" fill="#9b9b9b"/><rect x="2.7" y="52.9" width="0.6" height="0.7" fill="#787878"/><rect x="64.7" y="80.1" width="1.3" height="1.5" fill="#5a5a5a"/><rect x="80.6" y="83.8" width="1.4" height="0.9" fill="#787878"/><rect x="49.3" y="75.9" width="1.1" height="1.1" fill="#5a5a5a"/><rect x="27.3" y="66.4" width="1.6" height="0.9" fill="#323232"/><rect x="12.5" y="56.0" width="0.8" height="1.2" fill="#3c3c3c"/><rect x="31.0" y="74.6" width="1.3" height="1.5" fill="#323232"/><rect x="45.5" y="87.4" width="1.1" height="1.2" fill="#4b4b4b"/><rect x="34.3" y="76.8" width="1.8" height="1.6" fill="#3c3c3c"/><rect x="11.5" y="68.5" width="0.8" height="0.9" fill="#9b9b9b"/><rect x="44.7" y="65.2" width="1.6" height="1.3" fill="#5a5a5a"/><rect x="60.7" y="68.3" width="1.4" height="1.6" fill="#b4b4b4"/><rect x="33.9" y="78.4" width="0.7" height="0.8" fill="#b4b4b4"/><rect x="30.4" y="71.9" width="0.9" height="0.6" fill="#787878"/><rect x="59.1" y="79.8" width="1.7" height="1.1" fill="#323232"/><rect x="67.2" y="62.6" width="0.7" height="1.4" fill="#787878"/><rect x="93.9" y="59.2" width="1.2" height="1.0" fill="#878787"/><rect x="29.9" y="60.7" width="1.5" height="1.0" fill="#4b4b4b"/><rect x="62.5" y="70.2" width="1.7" height="0.6" fill="#787878"/><rect x="81.5" y="63.9" width="1.4" height="1.1" fill="#787878"/><rect x="75.2" y="50.4" width="1.2" height="0.9" fill="#696969"/><rect x="58.6" y="70.7" width="0.7" height="1.0" fill="#3c3c3c"/><rect x="54.0" y="81.1" width="1.5" height="0.8" fill="#b4b4b4"/><rect x="131.7" y="61.3" width="0.6" height="1.5" fill="#4b4b4b"/><rect x="6.2" y="77.8" width="0.7" height="0.9" fill="#b4b4b4"/><rect x="104.7" y="55.7" width="1.2" height="1.6" fill="#4b4b4b"/><rect x="71.7" y="53.7" width="0.7" height="0.8" fill="#b4b4b4"/><rect x="107.6" y="66.5" width="1.1" height="1.4" fill="#9b9b9b"/><rect x="56.1" y="80.9" width="1.2" height="1.7" fill="#3c3c3c"/><rect x="113.0" y="78.0" width="1.4" height="1.3" fill="#5a5a5a"/><rect x="79.9" y="48.9" width="0.9" height="1.4" fill="#4b4b4b"/><rect x="75.0" y="71.2" width="1.1" height="0.9" fill="#696969"/><rect x="123.1" y="46.3" width="0.8" height="1.2" fill="#b4b4b4"/><rect x="61.1" y="63.8" width="1.4" height="1.5" fill="#b4b4b4"/><rect x="110.4" y="76.1" width="1.8" height="1.1" fill="#9b9b9b"/><rect x="70.4" y="57.8" width="0.8" height="0.9" fill="#5a5a5a"/><rect x="76.0" y="67.6" width="1.0" height="0.6" fill="#696969"/><rect x="89.1" y="68.4" width="1.5" height="0.7" fill="#3c3c3c"/><rect x="108.0" y="57.6" width="0.6" height="1.7" fill="#3c3c3c"/><rect x="128.8" y="60.4" width="1.4" height="1.2" fill="#4b4b4b"/><rect x="123.1" y="83.5" width="1.5" height="0.9" fill="#787878"/><rect x="111.5" y="58.0" width="1.4" height="0.8" fill="#696969"/><rect x="104.7" y="86.8" width="1.3" height="1.4" fill="#878787"/><rect x="65.5" y="61.7" width="0.7" height="1.3" fill="#4b4b4b"/><rect x="71.2" y="77.1" width="0.7" height="1.6" fill="#787878"/><rect x="92.7" y="47.9" width="1.7" height="1.2" fill="#5a5a5a"/><rect x="118.6" y="67.5" width="0.8" height="1.3" fill="#696969"/><rect x="34.9" y="65.5" width="1.2" height="1.0" fill="#878787"/><rect x="20.4" y="56.5" width="0.7" height="0.6" fill="#b4b4b4"/><rect x="62.0" y="75.2" width="1.6" height="0.8" fill="#787878"/><rect x="89.9" y="57.9" width="1.7" height="1.0" fill="#5a5a5a"/><rect x="26.7" y="64.0" width="1.1" height="0.7" fill="#3c3c3c"/><rect x="21.2" y="62.0" width="1.1" height="1.0" fill="#787878"/><rect x="33.2" y="52.5" width="1.4" height="0.9" fill="#787878"/><rect x="36.0" y="53.3" width="1.7" height="0.8" fill="#3c3c3c"/><rect x="96.3" y="80.9" width="1.7" height="1.7" fill="#878787"/><rect x="23.0" y="65.0" width="0.6" height="1.3" fill="#878787"/><rect x="84.9" y="46.3" width="1.5" height="0.7" fill="#878787"/><rect x="1.3" y="76.1" width="0.7" height="0.7" fill="#787878"/><rect x="32.1" y="71.6" width="1.1" height="1.7" fill="#9b9b9b"/><rect x="33.1" y="67.9" width="1.6" height="1.0" fill="#787878"/><rect x="33.1" y="68.2" width="1.4" height="1.7" fill="#3c3c3c"/><rect x="112.5" y="72.3" width="1.5" height="1.6" fill="#3c3c3c"/><rect x="84.9" y="72.0" width="1.1" height="0.9" fill="#878787"/><rect x="39.2" y="50.7" width="0.6" height="1.2" fill="#4b4b4b"/><rect x="91.9" y="84.3" width="1.2" height="1.2" fill="#9b9b9b"/><rect x="21.8" y="64.1" width="1.2" height="1.4" fill="#696969"/><rect x="51.1" y="47.1" width="1.6" height="1.1" fill="#3c3c3c"/><rect x="89.4" y="67.9" width="1.6" height="1.5" fill="#9b9b9b"/><rect x="127.7" y="84.9" width="1.8" height="1.3" fill="#696969"/><rect x="82.1" y="65.8" width="0.8" height="1.4" fill="#9b9b9b"/><rect x="136.3" y="68.1" width="0.6" height="1.3" fill="#878787"/><rect x="65.4" y="57.9" width="1.5" height="1.2" fill="#696969"/><rect x="46.2" y="65.4" width="1.0" height="1.4" fill="#878787"/><rect x="131.3" y="82.5" width="1.3" height="1.7" fill="#b4b4b4"/><rect x="109.6" y="82.4" width="1.3" height="1.6" fill="#878787"/><rect x="13.3" y="83.5" width="1.1" height="1.4" fill="#9b9b9b"/><rect x="66.8" y="55.7" width="1.6" height="1.4" fill="#4b4b4b"/><rect x="133.1" y="86.2" width="1.5" height="1.0" fill="#b4b4b4"/><rect x="105.2" y="86.2" width="1.1" height="1.1" fill="#9b9b9b"/><rect x="3.5" y="65.5" width="0.9" height="1.3" fill="#4b4b4b"/><rect x="117.5" y="67.0" width="1.4" height="0.7" fill="#323232"/><rect x="126.9" y="71.5" width="1.2" height="1.2" fill="#878787"/><rect x="122.3" y="59.1" width="1.7" height="1.2" fill="#323232"/><rect x="115.2" y="75.5" width="1.1" height="1.7" fill="#9b9b9b"/><rect x="129.9" y="53.6" width="1.2" height="1.2" fill="#4b4b4b"/><rect x="62.4" y="66.5" width="1.6" height="1.0" fill="#323232"/><rect x="91.0" y="56.4" width="1.7" height="1.1" fill="#9b9b9b"/><rect x="19.6" y="51.0" width="1.3" height="1.8" fill="#696969"/><rect x="130.7" y="57.8" width="0.7" height="1.4" fill="#323232"/><rect x="16.0" y="76.9" width="0.8" height="1.6" fill="#4b4b4b"/><rect x="86.9" y="49.1" width="1.0" height="1.5" fill="#3c3c3c"/><rect x="85.9" y="61.8" width="0.7" height="1.4" fill="#5a5a5a"/><rect x="35.2" y="77.9" width="1.6" height="1.1" fill="#5a5a5a"/><rect x="53.3" y="66.0" width="1.6" height="1.7" fill="#323232"/><rect x="100.9" y="61.6" width="0.9" height="1.1" fill="#4b4b4b"/><rect x="10.4" y="81.4" width="1.8" height="1.7" fill="#3c3c3c"/><rect x="78.5" y="77.1" width="1.3" height="1.6" fill="#9b9b9b"/><rect x="68.6" y="86.5" width="1.2" height="1.1" fill="#787878"/><rect x="80.2" y="85.0" width="0.9" height="1.7" fill="#787878"/><rect x="105.3" y="58.3" width="1.2" height="1.7" fill="#b4b4b4"/><rect x="128.7" y="67.8" width="0.9" height="1.8" fill="#9b9b9b"/><rect x="130.6" y="81.4" width="1.8" height="1.7" fill="#696969"/><rect x="75.4" y="59.3" width="0.7" height="1.5" fill="#4b4b4b"/><rect x="107.3" y="48.6" width="0.9" height="1.2" fill="#696969"/><rect x="65.2" y="81.7" width="1.4" height="1.0" fill="#878787"/><rect x="6.9" y="47.2" width="1.3" height="1.3" fill="#b4b4b4"/><rect x="135.1" y="66.3" width="1.1" height="0.7" fill="#4b4b4b"/><rect x="30.5" y="52.5" width="1.2" height="1.0" fill="#696969"/><rect x="26.3" y="64.0" width="1.0" height="1.8" fill="#b4b4b4"/><rect x="100.5" y="79.2" width="1.2" height="1.7" fill="#696969"/><rect x="108.2" y="60.9" width="0.9" height="1.4" fill="#4b4b4b"/><rect x="132.6" y="84.1" width="1.4" height="1.7" fill="#b4b4b4"/><rect x="110.1" y="68.1" width="1.0" height="1.0" fill="#323232"/><rect x="33.1" y="61.8" width="1.0" height="1.3" fill="#878787"/><rect x="133.8" y="61.8" width="1.5" height="1.1" fill="#3c3c3c"/><rect x="40.7" y="48.4" width="0.9" height="1.7" fill="#787878"/><rect x="13.0" y="71.6" width="1.4" height="1.5" fill="#9b9b9b"/><rect x="107.7" y="85.1" width="1.7" height="1.2" fill="#3c3c3c"/><rect x="39.8" y="51.1" width="0.7" height="0.9" fill="#9b9b9b"/><rect x="77.3" y="53.1" width="0.8" height="0.7" fill="#878787"/><rect x="54.5" y="75.9" width="1.3" height="1.1" fill="#3c3c3c"/><rect x="16.4" y="50.3" width="1.7" height="0.9" fill="#5a5a5a"/><rect x="54.5" y="60.5" width="0.8" height="1.4" fill="#787878"/><rect x="1.7" y="65.9" width="1.5" height="0.7" fill="#787878"/><rect x="7.9" y="70.4" width="1.1" height="1.1" fill="#4b4b4b"/><rect x="2.0" y="67.3" width="0.7" height="0.8" fill="#b4b4b4"/><rect x="95.7" y="70.3" width="1.2" height="1.5" fill="#878787"/><rect x="95.9" y="48.2" width="1.6" height="1.1" fill="#4b4b4b"/><rect x="54.6" y="85.9" width="0.6" height="1.4" fill="#878787"/><rect x="30.2" y="63.0" width="0.7" height="1.1" fill="#4b4b4b"/><rect x="66.0" y="84.1" width="0.9" height="1.4" fill="#5a5a5a"/><rect x="0.2" y="54.0" width="1.3" height="1.3" fill="#4b4b4b"/><rect x="118.5" y="79.5" width="1.6" height="0.9" fill="#696969"/><rect x="93.0" y="69.3" width="1.2" height="0.9" fill="#5a5a5a"/><rect x="54.6" y="66.1" width="0.9" height="0.9" fill="#9b9b9b"/><rect x="11.8" y="82.4" width="1.8" height="0.8" fill="#b4b4b4"/><rect x="85.2" y="46.2" width="1.1" height="1.0" fill="#696969"/><rect x="105.0" y="80.7" width="1.2" height="0.6" fill="#9b9b9b"/><rect x="43.5" y="76.4" width="1.2" height="0.8" fill="#9b9b9b"/><rect x="48.2" y="77.2" width="1.5" height="1.0" fill="#4b4b4b"/><rect x="48.0" y="53.2" width="1.1" height="0.7" fill="#323232"/><rect x="34.4" y="66.7" width="1.6" height="1.3" fill="#3c3c3c"/><rect x="99.1" y="74.7" width="1.5" height="1.4" fill="#b4b4b4"/><rect x="62.3" y="61.2" width="1.2" height="0.9" fill="#323232"/><rect x="68.4" y="58.9" width="1.5" height="1.4" fill="#323232"/><rect x="43.6" y="53.3" width="1.6" height="1.2" fill="#9b9b9b"/><rect x="47.3" y="84.6" width="1.1" height="1.0" fill="#b4b4b4"/><rect x="84.1" y="71.5" width="1.3" height="1.2" fill="#b4b4b4"/><rect x="35.7" y="74.7" width="1.7" height="0.9" fill="#9b9b9b"/><rect x="109.9" y="87.4" width="0.7" height="0.9" fill="#5a5a5a"/><rect x="51.5" y="70.6" width="1.5" height="1.3" fill="#4b4b4b"/><rect x="98.6" y="70.4" width="1.7" height="1.7" fill="#3c3c3c"/><rect x="9.1" y="48.4" width="0.8" height="0.6" fill="#9b9b9b"/><rect x="40.1" y="58.7" width="1.7" height="1.5" fill="#b4b4b4"/><rect x="12.8" y="72.0" width="1.5" height="1.7" fill="#696969"/><rect x="41.0" y="85.5" width="0.9" height="1.4" fill="#787878"/><rect x="50.5" y="48.5" width="1.1" height="1.2" fill="#5a5a5a"/><rect x="16.8" y="67.3" width="1.8" height="1.0" fill="#b4b4b4"/><rect x="90.2" y="49.6" width="1.5" height="1.2" fill="#787878"/><rect x="20.2" y="83.8" width="1.2" height="1.2" fill="#4b4b4b"/><rect x="74.4" y="87.3" width="0.6" height="0.9" fill="#696969"/><rect x="90.1" y="48.2" width="0.8" height="1.3" fill="#3c3c3c"/><rect x="119.8" y="48.6" width="0.8" height="1.7" fill="#4b4b4b"/><rect x="79.9" y="46.4" width="0.7" height="1.6" fill="#4b4b4b"/><rect x="70.2" y="75.0" width="0.8" height="1.5" fill="#4b4b4b"/><rect x="130.4" y="51.7" width="1.1" height="0.7" fill="#b4b4b4"/><rect x="130.8" y="46.6" width="1.6" height="1.4" fill="#878787"/><rect x="121.2" y="51.2" width="0.9" height="1.2" fill="#323232"/><rect x="15.0" y="75.1" width="1.8" height="1.8" fill="#878787"/><rect x="17.6" y="68.0" width="0.7" height="0.9" fill="#9b9b9b"/><rect x="71.7" y="64.5" width="1.6" height="1.1" fill="#787878"/><rect x="68.6" y="55.9" width="1.5" height="0.7" fill="#323232"/><rect x="26.2" y="63.5" width="1.6" height="1.1" fill="#5a5a5a"/><rect x="64.4" y="70.1" width="0.9" height="1.1" fill="#696969"/><rect x="11.5" y="64.8" width="0.9" height="0.9" fill="#787878"/><rect x="3.8" y="60.3" width="1.1" height="0.9" fill="#696969"/><rect x="92.7" y="77.5" width="0.8" height="1.7" fill="#323232"/><rect x="18.1" y="53.8" width="1.0" height="1.2" fill="#4b4b4b"/><rect x="113.9" y="81.7" width="0.6" height="0.6" fill="#787878"/><rect x="25.0" y="59.6" width="1.0" height="1.3" fill="#323232"/><rect x="119.3" y="54.7" width="1.0" height="0.8" fill="#787878"/><rect x="15.4" y="64.2" width="0.9" height="0.9" fill="#4b4b4b"/><rect x="97.5" y="76.6" width="1.0" height="1.8" fill="#5a5a5a"/><rect x="72.1" y="62.8" width="0.7" height="0.9" fill="#4b4b4b"/><rect x="136.3" y="79.9" width="0.9" height="1.8" fill="#3c3c3c"/><rect x="5.2" y="54.6" width="1.8" height="1.6" fill="#696969"/><rect x="90.4" y="47.0" width="1.7" height="1.0" fill="#b4b4b4"/><rect x="68.0" y="49.7" width="1.7" height="1.4" fill="#323232"/><rect x="53.8" y="81.4" width="0.8" height="1.0" fill="#787878"/><rect x="99.8" y="78.7" width="1.4" height="1.5" fill="#878787"/><rect x="111.6" y="65.9" width="0.7" height="0.9" fill="#696969"/><rect x="121.9" y="62.9" width="1.8" height="1.3" fill="#b4b4b4"/><rect x="51.5" y="69.1" width="1.5" height="1.1" fill="#696969"/><rect x="94.3" y="68.0" width="1.6" height="0.9" fill="#4b4b4b"/><rect x="48.6" y="70.3" width="0.8" height="1.2" fill="#787878"/><rect x="67.9" y="64.5" width="1.7" height="1.3" fill="#787878"/><rect x="50.6" y="61.2" width="0.9" height="1.6" fill="#4b4b4b"/><rect x="96.3" y="55.0" width="0.6" height="1.7" fill="#696969"/><rect x="97.3" y="59.8" width="1.1" height="1.6" fill="#3c3c3c"/><rect x="16.4" y="64.1" width="1.1" height="1.5" fill="#787878"/><rect x="86.2" y="82.7" width="0.8" height="1.1" fill="#696969"/><rect x="87.8" y="75.0" width="1.3" height="1.3" fill="#5a5a5a"/><rect x="116.4" y="86.5" width="1.5" height="1.5" fill="#3c3c3c"/><rect x="98.8" y="48.5" width="1.5" height="1.7" fill="#4b4b4b"/><rect x="50.9" y="56.1" width="0.7" height="1.2" fill="#787878"/><rect x="48.6" y="49.2" width="0.8" height="1.7" fill="#9b9b9b"/><rect x="6.7" y="74.6" width="1.3" height="1.2" fill="#b4b4b4"/><rect x="33.7" y="56.9" width="1.3" height="1.5" fill="#9b9b9b"/><rect x="108.4" y="59.1" width="1.0" height="1.1" fill="#696969"/><rect x="69.0" y="82.1" width="0.9" height="0.7" fill="#787878"/><rect x="92.3" y="56.2" width="1.5" height="1.2" fill="#5a5a5a"/><rect x="43.3" y="69.3" width="1.3" height="1.2" fill="#323232"/><rect x="53.1" y="86.6" width="1.7" height="1.6" fill="#b4b4b4"/><rect x="84.8" y="55.6" width="0.7" height="0.7" fill="#9b9b9b"/><rect x="105.3" y="70.5" width="1.6" height="1.6" fill="#696969"/><rect x="84.1" y="49.5" width="1.1" height="1.3" fill="#787878"/><rect x="86.0" y="60.2" width="0.7" height="1.0" fill="#5a5a5a"/><rect x="81.9" y="85.0" width="1.0" height="0.9" fill="#323232"/><rect x="10.7" y="67.9" width="0.8" height="0.8" fill="#9b9b9b"/><rect x="88.8" y="74.4" width="1.7" height="0.8" fill="#696969"/><rect x="32.4" y="61.2" width="1.8" height="0.6" fill="#787878"/><rect x="4.6" y="67.6" width="1.7" height="1.3" fill="#3c3c3c"/><rect x="66.0" y="71.9" width="1.1" height="0.9" fill="#696969"/><rect x="125.1" y="81.4" width="1.0" height="1.2" fill="#b4b4b4"/><rect x="67.9" y="86.9" width="1.3" height="0.8" fill="#878787"/><rect x="28.2" y="67.2" width="0.6" height="1.2" fill="#323232"/><rect x="113.3" y="64.9" width="0.7" height="1.5" fill="#3c3c3c"/><rect x="29.8" y="49.2" width="0.7" height="1.7" fill="#4b4b4b"/><rect x="75.4" y="46.2" width="0.9" height="1.5" fill="#9b9b9b"/><rect x="88.6" y="86.0" width="1.7" height="1.6" fill="#787878"/><rect x="11.1" y="69.2" width="1.0" height="0.6" fill="#323232"/><rect x="57.7" y="69.8" width="1.7" height="1.3" fill="#323232"/><rect x="30.6" y="73.0" width="1.5" height="1.0" fill="#9b9b9b"/><rect x="127.5" y="77.4" width="0.9" height="1.4" fill="#323232"/><rect x="60.3" y="49.5" width="0.7" height="0.7" fill="#3c3c3c"/><rect x="43.7" y="58.6" width="0.9" height="1.4" fill="#323232"/><rect x="124.2" y="50.7" width="0.9" height="1.1" fill="#878787"/><rect x="135.2" y="82.2" width="1.2" height="1.5" fill="#b4b4b4"/><rect x="96.0" y="48.8" width="1.8" height="1.0" fill="#323232"/><rect x="128.6" y="77.0" width="0.9" height="0.8" fill="#787878"/><rect x="22.4" y="52.4" width="1.4" height="1.3" fill="#4b4b4b"/><rect x="65.3" y="86.3" width="1.2" height="1.4" fill="#323232"/><rect x="16.5" y="75.1" width="1.3" height="1.7" fill="#9b9b9b"/><rect x="88.0" y="79.2" width="1.7" height="0.7" fill="#323232"/><rect x="113.3" y="48.4" width="0.9" height="1.4" fill="#323232"/><rect x="43.9" y="70.5" width="1.1" height="0.7" fill="#9b9b9b"/><rect x="67.4" y="79.3" width="0.6" height="0.8" fill="#5a5a5a"/><rect x="3.9" y="52.7" width="1.0" height="1.2" fill="#3c3c3c"/><rect x="52.8" y="81.1" width="1.6" height="0.9" fill="#787878"/><rect x="55.7" y="63.8" width="1.4" height="0.7" fill="#878787"/><rect x="91.5" y="56.8" width="1.2" height="1.0" fill="#b4b4b4"/><rect x="64.7" y="48.5" width="1.1" height="1.1" fill="#323232"/><rect x="37.1" y="85.5" width="1.1" height="1.7" fill="#9b9b9b"/><rect x="95.4" y="61.3" width="1.5" height="1.2" fill="#b4b4b4"/><rect x="123.6" y="81.0" width="1.6" height="1.6" fill="#5a5a5a"/><rect x="58.5" y="74.2" width="1.5" height="0.8" fill="#787878"/><rect x="3.8" y="69.4" width="1.8" height="0.9" fill="#696969"/><rect x="131.7" y="78.5" width="1.6" height="1.2" fill="#4b4b4b"/><rect x="62.1" y="65.0" width="1.2" height="0.6" fill="#9b9b9b"/><rect x="54.7" y="60.0" width="0.7" height="1.0" fill="#b4b4b4"/><rect x="121.4" y="80.6" width="1.7" height="1.2" fill="#696969"/><rect x="80.9" y="48.0" width="1.2" height="0.9" fill="#4b4b4b"/><rect x="63.2" y="77.6" width="1.8" height="1.5" fill="#787878"/><rect x="69.3" y="50.7" width="1.5" height="0.8" fill="#878787"/><rect x="56.4" y="46.2" width="0.6" height="1.2" fill="#b4b4b4"/><rect x="132.8" y="46.9" width="1.2" height="1.0" fill="#4b4b4b"/><rect x="88.5" y="70.5" width="1.7" height="1.1" fill="#787878"/><rect x="75.2" y="72.1" width="1.4" height="1.4" fill="#5a5a5a"/><rect x="46.9" y="63.5" width="1.5" height="0.6" fill="#878787"/><rect x="83.4" y="67.2" width="0.9" height="0.8" fill="#9b9b9b"/><rect x="44.8" y="59.0" width="0.8" height="1.8" fill="#b4b4b4"/><rect x="42.9" y="69.7" width="1.0" height="1.5" fill="#4b4b4b"/><rect x="36" y="64.5" width="11" height="23.5" fill="#8a8a8a"/><rect x="37.0" y="66" width="1.1" height="22" fill="#333"/><rect x="39.7" y="66" width="1.1" height="22" fill="#333"/><rect x="42.4" y="66" width="1.1" height="22" fill="#333"/><rect x="45.1" y="66" width="1.1" height="22" fill="#333"/><path d="M48.5 57 L52 66 L45 66Z" fill="#c8c8c8"/><rect x="45" y="66" width="7" height="22" fill="#444"/><path d="M63.5 52 L66 60 L61 60Z" fill="#d0d0d0"/><rect x="60" y="60" width="7" height="28" fill="#3a3a3a"/><rect x="68" y="62" width="10" height="26" fill="#a4a4a4"/><rect x="70" y="64" width="0.8" height="24" fill="#777"/><rect x="74" y="64" width="0.8" height="24" fill="#777"/><rect x="110" y="79.5" width="27" height="8.5" fill="#9c9c9c"/><rect x="110" y="79.5" width="27" height="1" fill="#c4c4c4"/><rect x="120" y="37" width="2.4" height="10" fill="#8a8a8a"/><rect x="120.8" y="30" width="0.8" height="8" fill="#9a9a9a"/><rect x="119" y="39" width="4.5" height="2" fill="#bbb"/><rect x="128" y="50" width="9" height="11" fill="#b0b0b0"/><rect x="104" y="48" width="6" height="9" fill="#a6a6a6"/><rect x="93.6" y="0" width="0.8" height="14" fill="#a8a8a8"/><path d="M92.8 13 L95.2 13 L96 24 L92 24Z" fill="#909090"/><path d="M88 29 L90 24 L98 24 L100 29Z" fill="#8e8e8e"/><rect x="87" y="29" width="14" height="13" fill="#cfcfcf"/><rect x="87" y="36" width="14" height="6" fill="#e8e8e8"/><rect x="87" y="29" width="14" height="2" fill="#9a9a9a"/><rect x="89.5" y="31" width="1.2" height="11" fill="#efefef"/><rect x="93.5" y="31" width="1.2" height="11" fill="#efefef"/><rect x="97.5" y="31" width="1.2" height="11" fill="#efefef"/><rect x="86.5" y="42" width="15" height="46" fill="#4c4c4c"/><rect x="87.5" y="43" width="0.8" height="45" fill="#6a6a6a"/><rect x="89.5" y="43" width="0.8" height="45" fill="#6a6a6a"/><rect x="91.5" y="43" width="0.8" height="45" fill="#6a6a6a"/><rect x="93.5" y="43" width="0.8" height="45" fill="#6a6a6a"/><rect x="95.5" y="43" width="0.8" height="45" fill="#6a6a6a"/><rect x="97.5" y="43" width="0.8" height="45" fill="#6a6a6a"/><rect x="99.5" y="43" width="0.8" height="45" fill="#6a6a6a"/><rect x="86.5" y="45.0" width="15" height="0.6" fill="#383838"/><rect x="86.5" y="49.5" width="15" height="0.6" fill="#383838"/><rect x="86.5" y="54.0" width="15" height="0.6" fill="#383838"/><rect x="86.5" y="58.5" width="15" height="0.6" fill="#383838"/><rect x="86.5" y="63.0" width="15" height="0.6" fill="#383838"/><rect x="86.5" y="67.5" width="15" height="0.6" fill="#383838"/><rect x="86.5" y="72.0" width="15" height="0.6" fill="#383838"/><rect x="86.5" y="76.5" width="15" height="0.6" fill="#383838"/><rect x="86.5" y="81.0" width="15" height="0.6" fill="#383838"/><rect x="86.5" y="85.5" width="15" height="0.6" fill="#383838"/></svg><g font-family="Liberation Sans" font-size="10.4" fill="#1e1e1e" letter-spacing="0.3" text-rendering="geometricPrecision">
<text x="160.9" y="20.3">New York,</text><text x="160.9" y="34.5">Manhattan</text><text x="160.9" y="48.7">Bridge</text>
<text x="124.4" y="171.8" text-anchor="end">New York,</text><text x="124.4" y="186" text-anchor="end">Empire State</text><text x="124.4" y="200.2" text-anchor="end">Building</text>
</g></svg>
  <!-- thumbs -->
  <div class="abs" style="left:25px;top:56px;width:118px;height:88px;box-shadow:0 0.5px 1.5px 0.5px rgba(0,0,0,0.9);"></div>
  <svg style="left:25px;top:56px" width="118" height="88" viewBox="0 0 285 213" preserveAspectRatio="none"><rect width="285" height="213" fill="#fff"/>
<svg x="13" y="13" width="136" height="87" viewBox="0 0 136 87"><defs><linearGradient id="p1skyb" x1="0" y1="0" x2="0" y2="1"><stop offset="0" stop-color="#d8d8d8"/><stop offset="1" stop-color="#eaeaea"/></linearGradient><linearGradient id="p1watb" x1="0" y1="0" x2="0" y2="1"><stop offset="0" stop-color="#8a8a8a"/><stop offset="1" stop-color="#acacac"/></linearGradient></defs><rect width="136" height="87" fill="url(#p1skyb)"/><ellipse cx="10" cy="23" rx="9" ry="3" fill="#b4b4b4"/><ellipse cx="26" cy="23" rx="12" ry="3" fill="#b8b8b8"/><ellipse cx="40" cy="22" rx="6" ry="2.5" fill="#bcbcbc"/><ellipse cx="9" cy="20" rx="6" ry="3.5" fill="#e2e2e2"/><ellipse cx="20" cy="18" rx="8" ry="4" fill="#f0f0f0"/><ellipse cx="32" cy="17" rx="9" ry="4.5" fill="#f2f2f2"/><ellipse cx="41" cy="19" rx="5" ry="3" fill="#e8e8e8"/><ellipse cx="62" cy="8" rx="5" ry="2.2" fill="#b0b0b0"/><ellipse cx="61" cy="6.5" rx="3" ry="1.5" fill="#d0d0d0"/><ellipse cx="86" cy="12" rx="8" ry="2.5" fill="#b6b6b6"/><ellipse cx="104" cy="16" rx="11" ry="1.8" fill="#a8a8a8"/><ellipse cx="92" cy="9.5" rx="6" ry="2.2" fill="#c4c4c4"/><ellipse cx="98" cy="13" rx="5" ry="2" fill="#e4e4e4"/><rect x="0.0" y="50" width="2.5" height="6" fill="#b9b9b9"/><rect x="2.5" y="51" width="1.5" height="5" fill="#e1e1e1"/><rect x="4.0" y="51" width="4" height="5" fill="#a5a5a5"/><rect x="8.0" y="52" width="4" height="4" fill="#c8c8c8"/><rect x="12.0" y="52" width="2" height="4" fill="#6e6e6e"/><rect x="14.0" y="46" width="3" height="10" fill="#6e6e6e"/><rect x="17.0" y="51" width="2" height="5" fill="#c8c8c8"/><rect x="19.0" y="52" width="3" height="4" fill="#e1e1e1"/><rect x="22.0" y="51" width="4" height="5" fill="#8c8c8c"/><rect x="26.0" y="52" width="4" height="4" fill="#c8c8c8"/><rect x="30.0" y="46" width="4" height="10" fill="#6e6e6e"/><rect x="34.0" y="52" width="2" height="4" fill="#c8c8c8"/><rect x="36.0" y="48" width="2" height="8" fill="#b9b9b9"/><rect x="38.0" y="44" width="2" height="12" fill="#6e6e6e"/><rect x="40.0" y="48" width="4" height="8" fill="#c8c8c8"/><rect x="44.0" y="51" width="2" height="5" fill="#c8c8c8"/><rect x="46.0" y="49" width="4" height="7" fill="#a5a5a5"/><rect x="50.0" y="44" width="1.5" height="12" fill="#d7d7d7"/><rect x="51.5" y="52" width="1.5" height="4" fill="#c8c8c8"/><rect x="53.0" y="45" width="2" height="11" fill="#d7d7d7"/><rect x="55.0" y="46" width="4" height="10" fill="#e1e1e1"/><rect x="59.0" y="45" width="2.5" height="11" fill="#c8c8c8"/><rect x="61.5" y="47" width="3" height="9" fill="#a5a5a5"/><rect x="64.5" y="50" width="2" height="6" fill="#d7d7d7"/><rect x="66.5" y="51" width="2" height="5" fill="#c8c8c8"/><rect x="68.5" y="44" width="2.5" height="12" fill="#b9b9b9"/><rect x="71.0" y="45" width="2.5" height="11" fill="#a5a5a5"/><rect x="73.5" y="51" width="4" height="5" fill="#6e6e6e"/><rect x="77.5" y="46" width="4" height="10" fill="#8c8c8c"/><rect x="81.5" y="50" width="2.5" height="6" fill="#b9b9b9"/><rect x="84.0" y="52" width="3" height="4" fill="#d7d7d7"/><rect x="87.0" y="44" width="1.5" height="12" fill="#c8c8c8"/><rect x="88.5" y="47" width="2.5" height="9" fill="#d7d7d7"/><rect x="91.0" y="45" width="2.5" height="11" fill="#c8c8c8"/><rect x="93.5" y="51" width="3" height="5" fill="#e1e1e1"/><rect x="96.5" y="48" width="1.5" height="8" fill="#b9b9b9"/><rect x="98.0" y="52" width="1.5" height="4" fill="#d7d7d7"/><rect x="99.5" y="45" width="2.5" height="11" fill="#a5a5a5"/><rect x="71.7" y="54.0" width="1.4" height="2.9" fill="#c8c8c8"/><rect x="16.8" y="47.1" width="0.9" height="2.5" fill="#787878"/><rect x="73.8" y="49.6" width="2.4" height="2.0" fill="#787878"/><rect x="44.9" y="50.9" width="2.3" height="2.6" fill="#c8c8c8"/><rect x="70.6" y="54.9" width="2.0" height="1.8" fill="#787878"/><rect x="15.1" y="47.6" width="1.2" height="1.5" fill="#e1e1e1"/><rect x="83.1" y="47.6" width="1.3" height="1.3" fill="#c8c8c8"/><rect x="61.0" y="48.9" width="1.0" height="2.7" fill="#5a5a5a"/><rect x="45.7" y="53.8" width="2.4" height="2.4" fill="#e1e1e1"/><rect x="39.8" y="49.5" width="1.6" height="1.8" fill="#787878"/><rect x="6.7" y="47.9" width="1.1" height="1.7" fill="#5a5a5a"/><rect x="10.2" y="51.1" width="1.7" height="2.9" fill="#5a5a5a"/><rect x="7.0" y="47.9" width="1.4" height="2.3" fill="#c8c8c8"/><rect x="60.2" y="50.3" width="1.0" height="2.0" fill="#e1e1e1"/><rect x="48.0" y="48.8" width="1.0" height="2.5" fill="#c8c8c8"/><rect x="47.9" y="52.2" width="1.7" height="1.4" fill="#c8c8c8"/><rect x="14.7" y="50.9" width="0.8" height="2.1" fill="#5a5a5a"/><rect x="69.6" y="48.4" width="1.4" height="1.3" fill="#787878"/><rect x="53.3" y="53.0" width="1.4" height="1.4" fill="#787878"/><rect x="80.6" y="53.4" width="2.1" height="1.5" fill="#e1e1e1"/><rect x="35.6" y="46.3" width="0.8" height="1.6" fill="#c8c8c8"/><rect x="19.4" y="51.4" width="1.4" height="2.6" fill="#c8c8c8"/><rect x="95.5" y="49.3" width="1.2" height="1.5" fill="#787878"/><rect x="33.8" y="50.3" width="2.5" height="2.2" fill="#5a5a5a"/><rect x="47.9" y="51.9" width="2.2" height="1.2" fill="#5a5a5a"/><rect x="91.0" y="53.0" width="2.1" height="2.0" fill="#787878"/><rect x="43.4" y="51.7" width="0.9" height="2.9" fill="#e1e1e1"/><rect x="46.3" y="52.7" width="0.9" height="1.3" fill="#787878"/><rect x="2.8" y="51.3" width="1.6" height="2.3" fill="#e1e1e1"/><rect x="65.7" y="49.2" width="1.7" height="1.3" fill="#5a5a5a"/><rect x="79.9" y="52.5" width="1.0" height="2.5" fill="#787878"/><rect x="43.4" y="53.8" width="2.2" height="1.4" fill="#c8c8c8"/><rect x="21.3" y="50.5" width="2.1" height="1.7" fill="#e1e1e1"/><rect x="83.4" y="46.5" width="2.1" height="2.8" fill="#e1e1e1"/><rect x="82.7" y="53.9" width="1.0" height="1.3" fill="#5a5a5a"/><rect x="87.3" y="53.0" width="1.8" height="2.6" fill="#787878"/><rect x="17.2" y="50.3" width="2.0" height="2.1" fill="#c8c8c8"/><rect x="68.2" y="50.8" width="1.6" height="2.6" fill="#5a5a5a"/><rect x="24.8" y="48.5" width="2.1" height="2.0" fill="#5a5a5a"/><rect x="76.0" y="54.2" width="1.6" height="2.2" fill="#787878"/><rect x="28" y="41" width="4" height="14" fill="#8a8a8a"/><rect x="29" y="37" width="2" height="5" fill="#909090"/><rect x="29.6" y="33" width="0.8" height="5" fill="#999"/><rect x="117" y="46" width="19" height="10" fill="#7e7e7e"/><rect x="124" y="43" width="12" height="4" fill="#8a8a8a"/><rect x="88" y="48" width="8" height="8" fill="#a8a8a8"/><rect x="96" y="50" width="6" height="6" fill="#999"/><rect x="78" y="46" width="1.5" height="10" fill="#999"/><path d="M104 28 Q88 44 60 55" stroke="#4a4a4a" stroke-width="1.4" fill="none"/><path d="M104 31 Q90 46 66 55.5" stroke="#555" stroke-width="1.1" fill="none"/><path d="M114 28 Q124 33 136 39" stroke="#4a4a4a" stroke-width="1.3" fill="none"/><path d="M114 31 Q124 36 136 42" stroke="#555" stroke-width="1" fill="none"/><line x1="72" y1="52" x2="72" y2="56" stroke="#888" stroke-width="0.4"/><line x1="78" y1="48" x2="78" y2="56" stroke="#888" stroke-width="0.4"/><line x1="84" y1="44" x2="84" y2="56" stroke="#888" stroke-width="0.4"/><line x1="90" y1="40" x2="90" y2="56" stroke="#888" stroke-width="0.4"/><line x1="96" y1="36" x2="96" y2="56" stroke="#888" stroke-width="0.4"/><line x1="118" y1="31.0" x2="118" y2="56" stroke="#888" stroke-width="0.4"/><line x1="123" y1="33.6" x2="123" y2="56" stroke="#888" stroke-width="0.4"/><line x1="128" y1="36.2" x2="128" y2="56" stroke="#888" stroke-width="0.4"/><line x1="133" y1="38.8" x2="133" y2="56" stroke="#888" stroke-width="0.4"/><rect x="0" y="55" width="136" height="3.5" fill="#4a4a4a"/><rect x="0" y="54.5" width="136" height="1" fill="#6a6a6a"/><rect x="0" y="58.5" width="136" height="11.5" fill="#5e5e5e"/><rect x="92.8" y="62.8" width="2.6" height="2.0" fill="#4b4b4b"/><rect x="93.7" y="66.8" width="3.8" height="1.5" fill="#a0a0a0"/><rect x="119.6" y="60.4" width="2.3" height="1.8" fill="#787878"/><rect x="59.2" y="59.2" width="1.7" height="1.1" fill="#5f5f5f"/><rect x="105.0" y="67.0" width="1.5" height="2.4" fill="#5f5f5f"/><rect x="19.2" y="66.9" width="3.9" height="1.4" fill="#3c3c3c"/><rect x="53.4" y="63.1" width="4.0" height="2.7" fill="#4b4b4b"/><rect x="94.6" y="67.9" width="2.2" height="1.8" fill="#5f5f5f"/><rect x="42.7" y="65.4" width="1.1" height="2.1" fill="#787878"/><rect x="94.2" y="62.2" width="2.6" height="1.6" fill="#3c3c3c"/><rect x="15.1" y="67.2" width="1.7" height="2.8" fill="#3c3c3c"/><rect x="35.6" y="58.9" width="3.3" height="1.5" fill="#4b4b4b"/><rect x="109.9" y="66.6" width="3.0" height="2.9" fill="#787878"/><rect x="20.0" y="67.2" width="2.7" height="2.4" fill="#3c3c3c"/><rect x="37.4" y="66.1" width="1.6" height="2.8" fill="#5f5f5f"/><rect x="125.7" y="64.5" width="3.4" height="1.2" fill="#4b4b4b"/><rect x="8.9" y="66.7" width="2.4" height="1.7" fill="#a0a0a0"/><rect x="56.0" y="67.2" width="2.9" height="1.1" fill="#4b4b4b"/><rect x="125.7" y="67.7" width="1.8" height="1.4" fill="#5f5f5f"/><rect x="84.2" y="63.5" width="1.6" height="1.9" fill="#4b4b4b"/><rect x="36.2" y="66.1" width="4.0" height="1.1" fill="#3c3c3c"/><rect x="98.2" y="63.7" width="1.6" height="1.9" fill="#787878"/><rect x="14.2" y="66.3" width="2.3" height="2.0" fill="#787878"/><rect x="130.0" y="61.4" width="1.6" height="1.5" fill="#4b4b4b"/><rect x="111.5" y="65.2" width="2.9" height="1.8" fill="#5f5f5f"/><rect x="131.6" y="66.5" width="1.0" height="2.3" fill="#5f5f5f"/><rect x="57.7" y="59.0" width="3.0" height="1.8" fill="#a0a0a0"/><rect x="89.9" y="61.2" width="1.7" height="1.6" fill="#787878"/><rect x="24.8" y="61.1" width="1.0" height="1.7" fill="#5f5f5f"/><rect x="130.3" y="63.7" width="1.7" height="2.9" fill="#5f5f5f"/><rect x="29.2" y="60.2" width="2.0" height="1.2" fill="#5f5f5f"/><rect x="67.4" y="60.4" width="2.5" height="1.0" fill="#5f5f5f"/><rect x="109.5" y="59.9" width="2.8" height="1.8" fill="#5f5f5f"/><rect x="40.8" y="60.7" width="2.8" height="2.1" fill="#4b4b4b"/><rect x="88.1" y="65.3" width="3.6" height="1.8" fill="#5f5f5f"/><rect x="96.6" y="63.2" width="1.9" height="2.2" fill="#4b4b4b"/><rect x="5.9" y="66.4" width="3.7" height="2.3" fill="#a0a0a0"/><rect x="18.7" y="63.5" width="2.5" height="2.7" fill="#3c3c3c"/><rect x="110.7" y="64.0" width="3.7" height="2.4" fill="#4b4b4b"/><rect x="11.4" y="58.9" width="2.9" height="2.9" fill="#787878"/><rect x="112.0" y="63.8" width="2.9" height="2.3" fill="#4b4b4b"/><rect x="65.6" y="58.5" width="3.4" height="2.5" fill="#a0a0a0"/><rect x="120.3" y="59.4" width="2.6" height="2.5" fill="#787878"/><rect x="33.8" y="59.2" width="1.8" height="2.5" fill="#4b4b4b"/><rect x="30.9" y="64.7" width="2.4" height="2.7" fill="#3c3c3c"/><rect x="116" y="58" width="12" height="12" fill="#b4b4b4"/><rect x="119" y="59" width="1" height="11" fill="#888"/><rect x="123" y="59" width="1" height="11" fill="#888"/><rect x="31" y="53" width="9" height="17" fill="#8c8c8c"/><rect x="34" y="63" width="3" height="7" fill="#3a3a3a"/><rect x="31" y="53" width="9" height="1" fill="#a8a8a8"/><rect x="40" y="58.5" width="17" height="11.5" fill="#5a5a5a"/><rect x="43" y="60" width="2" height="10" fill="#a0a0a0"/><rect x="48" y="60" width="2" height="10" fill="#a0a0a0"/><rect x="53" y="60" width="2" height="10" fill="#9a9a9a"/><rect x="0" y="70" width="136" height="3.5" fill="#a2a2a2"/><rect x="0" y="73.5" width="136" height="1.5" fill="#555"/><rect x="0" y="69.5" width="136" height="0.8" fill="#c0c0c0"/><rect x="0" y="75" width="136" height="12" fill="url(#p1watb)"/><rect x="50" y="77" width="50" height="9" fill="#c8c8c8" opacity="0.5"/><rect x="0" y="80" width="30" height="7" fill="#bcbcbc" opacity="0.4"/><rect x="0" y="75" width="136" height="1.2" fill="#6a6a6a"/><path d="M0 78 L40 86 L40 87 L0 80Z" fill="#555" opacity="0.6"/><rect x="103" y="27" width="3.8" height="50" fill="#383838"/><rect x="110.6" y="27" width="3.8" height="50" fill="#383838"/><rect x="103.6" y="25" width="1.2" height="3" fill="#444"/><rect x="105.2" y="25.5" width="1" height="2" fill="#444"/><rect x="111.2" y="25" width="1.2" height="3" fill="#444"/><rect x="113" y="25.5" width="1" height="2" fill="#444"/><rect x="103" y="27.5" width="11.4" height="2.2" fill="#3c3c3c"/><rect x="103" y="34" width="11.4" height="1.2" fill="#4a4a4a"/><rect x="103" y="53.5" width="11.4" height="2" fill="#444"/><rect x="106.8" y="29.7" width="3.8" height="4.3" fill="#d2d2d2"/><rect x="106.8" y="35.2" width="3.8" height="18.3" fill="#cbcbcb"/><rect x="106.8" y="58.5" width="3.8" height="12" fill="#7a7a7a"/><rect x="114.5" y="58" width="12" height="12" fill="#c0c0c0"/><rect x="117.5" y="59" width="1" height="11" fill="#8a8a8a"/><rect x="121.5" y="59" width="1" height="11" fill="#8a8a8a"/><rect x="98" y="74" width="21" height="5.5" fill="#8e8e8e"/><rect x="98" y="74" width="21" height="1" fill="#aaa"/></svg>
<svg x="135" y="112" width="137" height="88" viewBox="0 0 137 88"><defs><linearGradient id="p2skyb" x1="0" y1="0" x2="0" y2="1"><stop offset="0" stop-color="#686868"/><stop offset="0.5" stop-color="#7c7c7c"/><stop offset="1" stop-color="#8e8e8e"/></linearGradient></defs><rect width="137" height="88" fill="url(#p2skyb)"/><path d="M0 4 Q60 10 137 2 L137 0 L0 0Z" fill="#606060"/><path d="M30 22 Q80 14 137 20 L137 24 Q80 20 30 26Z" fill="#8a8a8a" opacity="0.35"/><rect x="0" y="43.5" width="137" height="3" fill="#a2a2a2"/><rect x="0" y="46.5" width="137" height="41.5" fill="#6a6a6a"/><rect x="61.7" y="69.2" width="1.7" height="1.2" fill="#b4b4b4"/><rect x="116.7" y="53.9" width="1.6" height="1.2" fill="#4b4b4b"/><rect x="12.8" y="58.6" width="0.7" height="1.6" fill="#323232"/><rect x="81.3" y="62.4" width="1.1" height="1.5" fill="#4b4b4b"/><rect x="85.1" y="80.5" width="0.7" height="0.6" fill="#5a5a5a"/><rect x="81.8" y="78.3" width="1.0" height="1.3" fill="#5a5a5a"/><rect x="70.9" y="72.6" width="1.2" height="1.4" fill="#9b9b9b"/><rect x="89.4" y="62.9" width="1.3" height="1.7" fill="#3c3c3c"/><rect x="96.6" y="59.1" width="0.9" height="0.9" fill="#3c3c3c"/><rect x="76.9" y="50.5" width="0.7" height="0.9" fill="#3c3c3c"/><rect x="130.8" y="81.2" width="0.6" height="0.9" fill="#323232"/><rect x="64.2" y="86.7" width="1.1" height="0.7" fill="#5a5a5a"/><rect x="106.3" y="57.2" width="0.7" height="1.0" fill="#878787"/><rect x="103.5" y="50.9" width="0.9" height="0.7" fill="#323232"/><rect x="63.5" y="66.2" width="1.4" height="0.8" fill="#b4b4b4"/><rect x="26.0" y="76.4" width="0.8" height="1.4" fill="#3c3c3c"/><rect x="53.9" y="87.1" width="0.6" height="1.6" fill="#696969"/><rect x="136.2" y="46.8" width="0.8" height="1.8" fill="#3c3c3c"/><rect x="5.7" y="52.1" width="1.1" height="0.6" fill="#787878"/><rect x="113.3" y="62.0" width="0.7" height="0.9" fill="#5a5a5a"/><rect x="2.1" y="61.3" width="1.3" height="0.8" fill="#9b9b9b"/><rect x="113.6" y="51.6" width="1.1" height="1.4" fill="#696969"/><rect x="124.0" y="79.9" width="0.9" height="0.8" fill="#b4b4b4"/><rect x="26.8" y="85.4" width="1.7" height="1.3" fill="#878787"/><rect x="6.5" y="50.5" width="1.2" height="0.9" fill="#878787"/><rect x="35.1" y="80.2" width="1.3" height="1.0" fill="#4b4b4b"/><rect x="126.8" y="86.6" width="0.8" height="1.2" fill="#3c3c3c"/><rect x="38.2" y="84.1" width="0.8" height="0.6" fill="#696969"/><rect x="56.2" y="56.3" width="0.7" height="0.9" fill="#b4b4b4"/><rect x="78.1" y="51.5" width="1.0" height="1.7" fill="#787878"/><rect x="89.7" y="74.7" width="1.3" height="0.8" fill="#323232"/><rect x="126.1" y="65.7" width="1.0" height="1.0" fill="#323232"/><rect x="2.9" y="72.4" width="1.2" height="1.5" fill="#787878"/><rect x="18.6" y="49.0" width="1.1" height="1.0" fill="#323232"/><rect x="122.9" y="76.6" width="1.4" height="1.6" fill="#787878"/><rect x="48.0" y="74.4" width="1.7" height="1.6" fill="#878787"/><rect x="128.9" y="47.3" width="1.2" height="0.6" fill="#878787"/><rect x="51.8" y="46.5" width="0.7" height="0.7" fill="#3c3c3c"/><rect x="135.6" y="82.5" width="1.5" height="1.1" fill="#9b9b9b"/><rect x="60.1" y="80.8" width="0.7" height="1.5" fill="#323232"/><rect x="42.3" y="49.6" width="0.6" height="1.7" fill="#3c3c3c"/><rect x="67.9" y="71.5" width="1.7" height="0.9" fill="#323232"/><rect x="50.2" y="51.9" width="1.3" height="1.2" fill="#787878"/><rect x="90.1" y="64.3" width="1.7" height="1.0" fill="#696969"/><rect x="27.1" y="63.9" width="1.6" height="1.7" fill="#5a5a5a"/><rect x="52.5" y="70.2" width="1.0" height="0.8" fill="#9b9b9b"/><rect x="47.9" y="83.2" width="0.6" height="0.7" fill="#696969"/><rect x="112.2" y="50.7" width="1.2" height="1.7" fill="#878787"/><rect x="52.2" y="67.6" width="1.4" height="1.5" fill="#9b9b9b"/><rect x="43.7" y="80.4" width="0.9" height="1.3" fill="#696969"/><rect x="77.9" y="58.8" width="1.5" height="0.6" fill="#4b4b4b"/><rect x="55.3" y="53.9" width="1.5" height="0.9" fill="#4b4b4b"/><rect x="108.8" y="86.8" width="0.7" height="0.7" fill="#b4b4b4"/><rect x="89.4" y="79.5" width="1.8" height="1.4" fill="#5a5a5a"/><rect x="112.5" y="56.6" width="1.5" height="1.5" fill="#b4b4b4"/><rect x="97.5" y="53.4" width="0.9" height="1.0" fill="#b4b4b4"/><rect x="68.3" y="87.4" width="0.8" height="1.6" fill="#5a5a5a"/><rect x="11.9" y="84.7" width="1.5" height="0.8" fill="#9b9b9b"/><rect x="26.9" y="82.8" width="0.6" height="1.3" fill="#b4b4b4"/><rect x="108.8" y="85.2" width="1.2" height="1.4" fill="#5a5a5a"/><rect x="13.5" y="81.9" width="1.6" height="1.7" fill="#3c3c3c"/><rect x="29.1" y="83.3" width="1.8" height="1.8" fill="#b4b4b4"/><rect x="133.3" y="84.7" width="0.9" height="1.5" fill="#323232"/><rect x="47.6" y="49.4" width="1.1" height="1.3" fill="#696969"/><rect x="66.5" y="47.2" width="1.6" height="0.7" fill="#323232"/><rect x="23.6" y="59.9" width="1.5" height="0.8" fill="#4b4b4b"/><rect x="136.5" y="83.4" width="1.2" height="1.4" fill="#9b9b9b"/><rect x="129.1" y="66.4" width="1.7" height="0.7" fill="#5a5a5a"/><rect x="60.0" y="69.2" width="1.6" height="1.3" fill="#4b4b4b"/><rect x="71.4" y="81.0" width="1.3" height="1.0" fill="#878787"/><rect x="130.3" y="82.1" width="1.3" height="1.0" fill="#4b4b4b"/><rect x="132.2" y="67.8" width="1.3" height="0.8" fill="#b4b4b4"/><rect x="15.6" y="46.2" width="1.1" height="1.2" fill="#323232"/><rect x="70.4" y="62.6" width="1.6" height="1.3" fill="#9b9b9b"/><rect x="12.7" y="52.9" width="1.7" height="1.2" fill="#878787"/><rect x="36.7" y="65.6" width="0.8" height="1.1" fill="#9b9b9b"/><rect x="71.7" y="50.5" width="1.1" height="0.6" fill="#696969"/><rect x="17.7" y="78.3" width="0.6" height="0.8" fill="#5a5a5a"/><rect x="1.6" y="57.8" width="1.5" height="0.9" fill="#9b9b9b"/><rect x="14.3" y="76.3" width="0.7" height="1.2" fill="#696969"/><rect x="98.0" y="75.1" width="1.7" height="0.6" fill="#878787"/><rect x="112.6" y="71.6" width="1.2" height="1.6" fill="#b4b4b4"/><rect x="87.2" y="68.0" width="1.6" height="1.3" fill="#4b4b4b"/><rect x="31.8" y="76.7" width="1.6" height="1.7" fill="#787878"/><rect x="82.3" y="83.0" width="0.8" height="1.5" fill="#5a5a5a"/><rect x="121.1" y="51.6" width="0.9" height="1.5" fill="#696969"/><rect x="52.9" y="64.0" width="1.7" height="1.3" fill="#4b4b4b"/><rect x="27.4" y="72.1" width="1.6" height="0.7" fill="#787878"/><rect x="124.4" y="86.2" width="0.7" height="1.2" fill="#787878"/><rect x="68.6" y="74.5" width="0.8" height="0.7" fill="#3c3c3c"/><rect x="3.3" y="77.6" width="1.3" height="1.7" fill="#9b9b9b"/><rect x="20.0" y="53.7" width="0.8" height="1.6" fill="#696969"/><rect x="126.5" y="50.0" width="0.7" height="1.7" fill="#9b9b9b"/><rect x="10.6" y="50.0" width="1.1" height="1.1" fill="#787878"/><rect x="58.7" y="70.9" width="0.6" height="1.4" fill="#5a5a5a"/><rect x="24.7" y="64.8" width="1.5" height="1.1" fill="#5a5a5a"/><rect x="82.6" y="49.9" width="1.6" height="1.0" fill="#3c3c3c"/><rect x="109.4" y="75.2" width="1.6" height="1.4" fill="#878787"/><rect x="77.8" y="53.9" width="1.3" height="1.0" fill="#696969"/><rect x="38.2" y="50.8" width="1.5" height="0.8" fill="#878787"/><rect x="18.2" y="59.7" width="1.2" height="1.0" fill="#878787"/><rect x="104.5" y="62.8" width="1.5" height="0.7" fill="#787878"/><rect x="41.2" y="50.2" width="1.7" height="1.8" fill="#323232"/><rect x="31.7" y="85.2" width="1.4" height="1.0" fill="#878787"/><rect x="77.7" y="68.1" width="1.1" height="1.8" fill="#5a5a5a"/><rect x="95.7" y="77.6" width="1.8" height="0.6" fill="#3c3c3c"/><rect x="100.8" y="56.7" width="1.1" height="0.7" fill="#5a5a5a"/><rect x="88.5" y="46.4" width="0.9" height="0.9" fill="#787878"/><rect x="75.1" y="67.1" width="1.8" height="1.3" fill="#3c3c3c"/><rect x="87.1" y="79.6" width="0.7" height="1.3" fill="#323232"/><rect x="52.7" y="85.0" width="1.1" height="1.8" fill="#9b9b9b"/><rect x="74.0" y="70.8" width="1.1" height="1.2" fill="#696969"/><rect x="71.9" y="70.8" width="1.0" height="0.9" fill="#696969"/><rect x="76.5" y="57.8" width="1.5" height="1.0" fill="#323232"/><rect x="105.4" y="70.3" width="1.4" height="1.1" fill="#878787"/><rect x="7.2" y="59.1" width="1.1" height="1.3" fill="#787878"/><rect x="10.0" y="83.6" width="1.1" height="1.2" fill="#5a5a5a"/><rect x="6.2" y="50.1" width="1.6" height="1.7" fill="#4b4b4b"/><rect x="133.6" y="79.9" width="1.3" height="0.7" fill="#878787"/><rect x="62.2" y="54.5" width="0.7" height="1.2" fill="#3c3c3c"/><rect x="49.6" y="51.8" width="1.1" height="1.3" fill="#878787"/><rect x="49.7" y="76.9" width="1.6" height="0.8" fill="#696969"/><rect x="100.2" y="55.9" width="0.7" height="1.7" fill="#b4b4b4"/><rect x="85.3" y="60.9" width="0.9" height="1.4" fill="#5a5a5a"/><rect x="86.4" y="77.3" width="0.8" height="0.9" fill="#5a5a5a"/><rect x="120.0" y="47.6" width="0.7" height="0.9" fill="#878787"/><rect x="3.7" y="47.6" width="0.9" height="0.9" fill="#3c3c3c"/><rect x="124.6" y="52.7" width="0.9" height="1.8" fill="#9b9b9b"/><rect x="65.3" y="54.7" width="1.0" height="1.5" fill="#3c3c3c"/><rect x="109.5" y="64.6" width="1.6" height="1.6" fill="#5a5a5a"/><rect x="60.7" y="77.0" width="1.1" height="0.8" fill="#4b4b4b"/><rect x="89.2" y="87.1" width="1.0" height="1.3" fill="#4b4b4b"/><rect x="58.4" y="61.3" width="0.7" height="1.7" fill="#3c3c3c"/><rect x="74.2" y="63.9" width="1.3" height="1.6" fill="#9b9b9b"/><rect x="40.8" y="78.2" width="0.7" height="0.9" fill="#3c3c3c"/><rect x="94.9" y="66.5" width="1.5" height="1.0" fill="#4b4b4b"/><rect x="29.9" y="73.3" width="1.0" height="1.7" fill="#787878"/><rect x="96.8" y="69.6" width="1.7" height="1.7" fill="#696969"/><rect x="59.8" y="79.3" width="1.0" height="1.0" fill="#878787"/><rect x="132.1" y="76.3" width="1.2" height="0.7" fill="#787878"/><rect x="3.3" y="74.1" width="1.3" height="1.6" fill="#787878"/><rect x="108.8" y="68.4" width="1.6" height="1.3" fill="#4b4b4b"/><rect x="12.2" y="64.9" width="1.6" height="1.6" fill="#5a5a5a"/><rect x="70.4" y="68.6" width="1.3" height="1.8" fill="#878787"/><rect x="8.7" y="68.7" width="1.5" height="0.7" fill="#3c3c3c"/><rect x="37.4" y="50.4" width="1.0" height="0.6" fill="#4b4b4b"/><rect x="13.3" y="79.9" width="1.1" height="1.5" fill="#9b9b9b"/><rect x="104.5" y="67.6" width="1.5" height="1.1" fill="#787878"/><rect x="110.2" y="59.8" width="0.8" height="1.2" fill="#3c3c3c"/><rect x="96.7" y="84.0" width="1.1" height="1.6" fill="#787878"/><rect x="116.5" y="79.4" width="1.6" height="1.7" fill="#b4b4b4"/><rect x="87.4" y="67.7" width="1.5" height="1.6" fill="#878787"/><rect x="126.1" y="84.0" width="0.9" height="0.8" fill="#878787"/><rect x="93.4" y="59.3" width="1.1" height="1.2" fill="#696969"/><rect x="132.4" y="48.5" width="1.0" height="0.7" fill="#4b4b4b"/><rect x="105.9" y="53.4" width="0.7" height="1.2" fill="#9b9b9b"/><rect x="124.1" y="47.5" width="0.7" height="0.8" fill="#5a5a5a"/><rect x="80.3" y="70.9" width="1.2" height="1.2" fill="#9b9b9b"/><rect x="25.3" y="57.7" width="0.8" height="1.5" fill="#696969"/><rect x="85.6" y="85.1" width="1.3" height="1.6" fill="#9b9b9b"/><rect x="121.1" y="83.9" width="1.0" height="1.3" fill="#3c3c3c"/><rect x="65.9" y="55.2" width="0.7" height="1.7" fill="#878787"/><rect x="133.2" y="79.0" width="1.5" height="1.5" fill="#323232"/><rect x="89.8" y="55.9" width="0.6" height="1.2" fill="#787878"/><rect x="61.4" y="56.2" width="1.1" height="1.6" fill="#878787"/><rect x="21.4" y="59.4" width="0.9" height="1.6" fill="#b4b4b4"/><rect x="17.9" y="76.8" width="1.3" height="1.2" fill="#323232"/><rect x="20.6" y="78.0" width="0.6" height="1.6" fill="#4b4b4b"/><rect x="112.2" y="49.4" width="0.9" height="1.5" fill="#3c3c3c"/><rect x="121.4" y="74.8" width="0.7" height="1.5" fill="#b4b4b4"/><rect x="117.0" y="58.6" width="1.5" height="1.1" fill="#3c3c3c"/><rect x="106.7" y="64.3" width="0.6" height="1.1" fill="#9b9b9b"/><rect x="21.5" y="80.5" width="1.0" height="1.0" fill="#3c3c3c"/><rect x="75.9" y="87.4" width="1.4" height="0.7" fill="#3c3c3c"/><rect x="93.8" y="50.4" width="1.1" height="1.2" fill="#3c3c3c"/><rect x="89.3" y="46.5" width="1.1" height="1.5" fill="#5a5a5a"/><rect x="40.1" y="50.7" width="1.5" height="1.6" fill="#5a5a5a"/><rect x="123.1" y="52.3" width="1.4" height="1.7" fill="#696969"/><rect x="130.2" y="77.3" width="1.3" height="0.7" fill="#5a5a5a"/><rect x="27.3" y="76.4" width="1.0" height="1.7" fill="#9b9b9b"/><rect x="98.8" y="59.8" width="1.6" height="0.7" fill="#4b4b4b"/><rect x="84.9" y="51.5" width="1.4" height="0.8" fill="#5a5a5a"/><rect x="54.9" y="80.7" width="1.3" height="0.7" fill="#5a5a5a"/><rect x="4.4" y="87.0" width="1.1" height="1.5" fill="#787878"/><rect x="125.7" y="63.7" width="1.2" height="1.4" fill="#4b4b4b"/><rect x="112.1" y="62.0" width="1.0" height="1.1" fill="#323232"/><rect x="99.2" y="71.4" width="1.0" height="1.5" fill="#5a5a5a"/><rect x="90.1" y="71.3" width="0.6" height="1.0" fill="#787878"/><rect x="41.9" y="64.3" width="1.3" height="0.8" fill="#787878"/><rect x="107.6" y="80.2" width="1.3" height="0.8" fill="#b4b4b4"/><rect x="123.3" y="68.8" width="1.0" height="1.2" fill="#4b4b4b"/><rect x="78.4" y="54.2" width="1.7" height="1.8" fill="#5a5a5a"/><rect x="77.4" y="47.1" width="1.4" height="1.5" fill="#4b4b4b"/><rect x="33.4" y="69.9" width="1.4" height="1.0" fill="#787878"/><rect x="36.3" y="82.6" width="1.1" height="1.5" fill="#5a5a5a"/><rect x="123.4" y="68.6" width="1.3" height="1.3" fill="#696969"/><rect x="23.0" y="76.9" width="1.7" height="1.0" fill="#4b4b4b"/><rect x="16.7" y="80.2" width="0.9" height="1.7" fill="#5a5a5a"/><rect x="103.5" y="61.1" width="0.8" height="1.3" fill="#3c3c3c"/><rect x="62.0" y="62.7" width="1.5" height="1.7" fill="#4b4b4b"/><rect x="42.0" y="73.9" width="1.5" height="1.1" fill="#323232"/><rect x="21.6" y="63.1" width="0.6" height="1.2" fill="#3c3c3c"/><rect x="77.7" y="53.2" width="1.2" height="0.9" fill="#787878"/><rect x="7.3" y="78.5" width="1.5" height="1.5" fill="#878787"/><rect x="130.9" y="70.9" width="1.2" height="1.1" fill="#878787"/><rect x="102.6" y="66.2" width="1.8" height="1.6" fill="#878787"/><rect x="112.6" y="50.9" width="0.7" height="1.7" fill="#787878"/><rect x="71.7" y="63.9" width="1.7" height="1.0" fill="#323232"/><rect x="40.4" y="71.6" width="1.1" height="1.1" fill="#787878"/><rect x="102.6" y="58.6" width="1.3" height="0.7" fill="#3c3c3c"/><rect x="115.3" y="56.1" width="1.6" height="1.8" fill="#9b9b9b"/><rect x="94.9" y="67.8" width="0.9" height="1.0" fill="#878787"/><rect x="128.3" y="82.5" width="1.8" height="1.5" fill="#787878"/><rect x="118.3" y="63.5" width="1.6" height="0.9" fill="#878787"/><rect x="77.4" y="83.5" width="0.7" height="1.6" fill="#3c3c3c"/><rect x="120.4" y="69.9" width="1.1" height="1.0" fill="#696969"/><rect x="3.3" y="53.1" width="1.1" height="1.1" fill="#b4b4b4"/><rect x="54.2" y="60.8" width="1.3" height="0.7" fill="#323232"/><rect x="62.1" y="59.0" width="1.0" height="0.8" fill="#9b9b9b"/><rect x="119.9" y="54.4" width="1.6" height="1.4" fill="#323232"/><rect x="26.7" y="80.8" width="1.0" height="1.2" fill="#4b4b4b"/><rect x="86.7" y="75.0" width="1.3" height="1.2" fill="#5a5a5a"/><rect x="26.1" y="82.5" width="0.7" height="0.7" fill="#787878"/><rect x="131.2" y="57.4" width="1.1" height="1.7" fill="#787878"/><rect x="95.0" y="84.9" width="1.1" height="0.7" fill="#5a5a5a"/><rect x="117.6" y="51.0" width="1.4" height="0.9" fill="#5a5a5a"/><rect x="68.4" y="58.3" width="0.9" height="1.6" fill="#b4b4b4"/><rect x="120.7" y="70.5" width="0.9" height="1.0" fill="#4b4b4b"/><rect x="91.1" y="57.5" width="1.4" height="0.7" fill="#3c3c3c"/><rect x="60.1" y="67.9" width="1.2" height="0.7" fill="#696969"/><rect x="73.3" y="63.6" width="1.3" height="0.8" fill="#5a5a5a"/><rect x="33.6" y="57.6" width="1.3" height="0.8" fill="#4b4b4b"/><rect x="134.8" y="47.4" width="1.2" height="1.5" fill="#878787"/><rect x="0.4" y="83.0" width="0.7" height="0.7" fill="#787878"/><rect x="43.8" y="66.1" width="0.6" height="0.9" fill="#b4b4b4"/><rect x="101.6" y="68.1" width="1.3" height="1.5" fill="#3c3c3c"/><rect x="83.0" y="55.8" width="1.1" height="1.5" fill="#5a5a5a"/><rect x="35.4" y="68.6" width="1.6" height="1.3" fill="#696969"/><rect x="4.8" y="70.8" width="1.5" height="1.3" fill="#4b4b4b"/><rect x="44.4" y="71.2" width="1.3" height="1.6" fill="#b4b4b4"/><rect x="60.3" y="56.9" width="1.6" height="0.7" fill="#4b4b4b"/><rect x="77.7" y="68.5" width="1.5" height="0.9" fill="#4b4b4b"/><rect x="7.4" y="63.7" width="1.4" height="1.6" fill="#b4b4b4"/><rect x="106.6" y="77.8" width="1.2" height="1.4" fill="#b4b4b4"/><rect x="23.4" y="56.6" width="0.8" height="1.4" fill="#9b9b9b"/><rect x="8.3" y="63.0" width="1.0" height="0.9" fill="#323232"/><rect x="17.5" y="77.3" width="1.3" height="0.8" fill="#9b9b9b"/><rect x="71.2" y="86.9" width="0.6" height="1.1" fill="#b4b4b4"/><rect x="19.3" y="62.3" width="1.0" height="1.1" fill="#3c3c3c"/><rect x="132.6" y="74.2" width="1.5" height="1.8" fill="#5a5a5a"/><rect x="40.4" y="50.9" width="1.6" height="1.1" fill="#3c3c3c"/><rect x="127.3" y="61.1" width="1.0" height="1.8" fill="#5a5a5a"/><rect x="5.4" y="62.7" width="1.4" height="0.7" fill="#787878"/><rect x="77.5" y="83.8" width="1.7" height="1.7" fill="#4b4b4b"/><rect x="63.1" y="62.3" width="1.6" height="1.1" fill="#323232"/><rect x="29.4" y="60.4" width="0.8" height="1.3" fill="#4b4b4b"/><rect x="65.5" y="62.6" width="1.3" height="1.5" fill="#9b9b9b"/><rect x="61.0" y="87.2" width="1.4" height="1.6" fill="#5a5a5a"/><rect x="73.8" y="63.4" width="0.7" height="0.9" fill="#696969"/><rect x="84.8" y="67.5" width="1.5" height="1.2" fill="#5a5a5a"/><rect x="36.7" y="61.0" width="0.8" height="1.7" fill="#787878"/><rect x="18.7" y="56.0" width="1.6" height="0.7" fill="#787878"/><rect x="114.5" y="64.7" width="1.6" height="1.1" fill="#696969"/><rect x="105.2" y="67.6" width="0.7" height="1.1" fill="#5a5a5a"/><rect x="66.7" y="53.8" width="1.2" height="0.8" fill="#5a5a5a"/><rect x="42.6" y="63.6" width="1.3" height="0.8" fill="#b4b4b4"/><rect x="35.5" y="76.1" width="1.4" height="0.8" fill="#5a5a5a"/><rect x="113.9" y="68.2" width="1.1" height="0.8" fill="#b4b4b4"/><rect x="118.2" y="55.4" width="1.0" height="1.0" fill="#5a5a5a"/><rect x="19.2" y="81.2" width="1.5" height="1.2" fill="#323232"/><rect x="110.4" y="86.5" width="1.0" height="1.4" fill="#5a5a5a"/><rect x="76.2" y="60.7" width="0.7" height="1.5" fill="#787878"/><rect x="32.0" y="72.2" width="0.7" height="1.1" fill="#878787"/><rect x="67.3" y="66.3" width="1.7" height="0.9" fill="#696969"/><rect x="30.3" y="84.4" width="0.8" height="1.5" fill="#787878"/><rect x="90.8" y="56.0" width="0.7" height="1.0" fill="#878787"/><rect x="109.8" y="65.8" width="0.9" height="1.6" fill="#696969"/><rect x="95.6" y="47.0" width="1.1" height="1.0" fill="#3c3c3c"/><rect x="124.5" y="57.3" width="1.1" height="1.6" fill="#696969"/><rect x="64.0" y="59.5" width="0.9" height="0.6" fill="#787878"/><rect x="44.2" y="61.5" width="1.0" height="1.6" fill="#4b4b4b"/><rect x="87.7" y="62.0" width="1.0" height="1.7" fill="#323232"/><rect x="78.6" y="85.1" width="1.5" height="1.4" fill="#b4b4b4"/><rect x="56.1" y="63.2" width="0.9" height="1.6" fill="#9b9b9b"/><rect x="52.1" y="83.7" width="0.6" height="0.8" fill="#b4b4b4"/><rect x="37.2" y="66.5" width="1.2" height="0.6" fill="#5a5a5a"/><rect x="36.8" y="56.7" width="0.9" height="1.2" fill="#b4b4b4"/><rect x="133.7" y="46.1" width="1.3" height="1.6" fill="#b4b4b4"/><rect x="10.8" y="80.2" width="1.7" height="1.4" fill="#787878"/><rect x="36.0" y="50.3" width="0.6" height="1.6" fill="#5a5a5a"/><rect x="94.9" y="74.5" width="1.8" height="1.6" fill="#4b4b4b"/><rect x="45.5" y="74.6" width="1.6" height="1.0" fill="#878787"/><rect x="39.0" y="77.1" width="1.2" height="0.9" fill="#5a5a5a"/><rect x="49.4" y="75.3" width="1.7" height="1.5" fill="#3c3c3c"/><rect x="135.0" y="79.9" width="1.7" height="1.0" fill="#9b9b9b"/><rect x="69.9" y="74.2" width="0.6" height="1.3" fill="#878787"/><rect x="118.7" y="48.2" width="0.9" height="1.2" fill="#878787"/><rect x="34.5" y="72.3" width="1.0" height="1.4" fill="#4b4b4b"/><rect x="45.6" y="77.5" width="1.6" height="1.6" fill="#878787"/><rect x="87.5" y="51.2" width="1.5" height="0.9" fill="#4b4b4b"/><rect x="17.1" y="61.6" width="1.4" height="0.9" fill="#4b4b4b"/><rect x="132.9" y="65.6" width="1.4" height="1.5" fill="#4b4b4b"/><rect x="36.6" y="57.3" width="0.9" height="1.4" fill="#878787"/><rect x="127.4" y="87.0" width="0.7" height="1.5" fill="#3c3c3c"/><rect x="118.9" y="54.0" width="1.0" height="1.2" fill="#3c3c3c"/><rect x="55.2" y="83.5" width="1.6" height="1.6" fill="#4b4b4b"/><rect x="51.0" y="58.8" width="1.6" height="1.6" fill="#696969"/><rect x="30.5" y="76.0" width="1.1" height="0.8" fill="#878787"/><rect x="92.1" y="55.0" width="0.9" height="1.6" fill="#9b9b9b"/><rect x="23.9" y="50.4" width="1.7" height="0.9" fill="#9b9b9b"/><rect x="59.1" y="52.3" width="1.7" height="0.9" fill="#4b4b4b"/><rect x="37.4" y="62.6" width="1.0" height="0.7" fill="#5a5a5a"/><rect x="49.9" y="56.8" width="0.7" height="0.7" fill="#696969"/><rect x="91.5" y="46.2" width="1.0" height="0.8" fill="#5a5a5a"/><rect x="135.4" y="63.0" width="0.6" height="1.0" fill="#b4b4b4"/><rect x="54.0" y="48.4" width="1.3" height="1.4" fill="#696969"/><rect x="37.8" y="85.0" width="1.6" height="1.8" fill="#9b9b9b"/><rect x="78.0" y="85.0" width="0.7" height="1.6" fill="#4b4b4b"/><rect x="73.6" y="74.0" width="0.9" height="0.6" fill="#b4b4b4"/><rect x="42.3" y="67.3" width="0.6" height="0.9" fill="#787878"/><rect x="1.5" y="67.9" width="1.6" height="1.6" fill="#9b9b9b"/><rect x="54.5" y="79.3" width="1.6" height="1.5" fill="#3c3c3c"/><rect x="127.8" y="66.0" width="1.6" height="1.1" fill="#323232"/><rect x="1.3" y="51.8" width="1.0" height="1.5" fill="#b4b4b4"/><rect x="89.7" y="79.6" width="1.0" height="1.4" fill="#787878"/><rect x="42.6" y="48.8" width="1.4" height="1.3" fill="#696969"/><rect x="45.7" y="76.8" width="0.9" height="1.5" fill="#b4b4b4"/><rect x="41.6" y="54.5" width="1.0" height="0.8" fill="#787878"/><rect x="47.8" y="63.9" width="0.6" height="1.2" fill="#878787"/><rect x="12.9" y="85.5" width="1.6" height="1.5" fill="#323232"/><rect x="120.2" y="59.3" width="1.5" height="0.7" fill="#787878"/><rect x="58.7" y="86.0" width="0.9" height="1.1" fill="#4b4b4b"/><rect x="110.9" y="48.9" width="1.1" height="1.7" fill="#4b4b4b"/><rect x="106.2" y="67.8" width="0.6" height="1.5" fill="#878787"/><rect x="124.4" y="48.3" width="1.3" height="1.0" fill="#9b9b9b"/><rect x="116.9" y="72.1" width="1.2" height="1.3" fill="#3c3c3c"/><rect x="16.6" y="76.7" width="1.5" height="1.1" fill="#9b9b9b"/><rect x="57.2" y="62.0" width="0.9" height="1.3" fill="#323232"/><rect x="70.3" y="47.3" width="1.4" height="1.1" fill="#323232"/><rect x="81.2" y="84.7" width="0.8" height="1.2" fill="#696969"/><rect x="100.7" y="59.0" width="1.5" height="1.8" fill="#878787"/><rect x="7.2" y="86.2" width="1.5" height="1.7" fill="#3c3c3c"/><rect x="32.0" y="80.9" width="1.4" height="1.7" fill="#3c3c3c"/><rect x="108.9" y="67.2" width="1.8" height="0.7" fill="#323232"/><rect x="97.1" y="56.4" width="1.6" height="1.1" fill="#b4b4b4"/><rect x="2.0" y="63.7" width="1.2" height="1.8" fill="#5a5a5a"/><rect x="10.0" y="69.0" width="1.5" height="1.2" fill="#5a5a5a"/><rect x="9.8" y="66.6" width="0.7" height="1.6" fill="#3c3c3c"/><rect x="108.8" y="52.3" width="1.0" height="0.7" fill="#323232"/><rect x="126.8" y="85.6" width="0.9" height="0.9" fill="#878787"/><rect x="24.8" y="62.1" width="1.6" height="1.3" fill="#9b9b9b"/><rect x="9.8" y="87.0" width="0.8" height="1.4" fill="#5a5a5a"/><rect x="76.4" y="87.3" width="1.1" height="1.6" fill="#787878"/><rect x="115.3" y="85.3" width="1.4" height="0.9" fill="#5a5a5a"/><rect x="24.7" y="51.3" width="1.4" height="1.2" fill="#4b4b4b"/><rect x="38.0" y="56.7" width="1.0" height="1.3" fill="#696969"/><rect x="26.8" y="87.3" width="1.4" height="1.5" fill="#787878"/><rect x="118.8" y="77.9" width="0.8" height="0.7" fill="#696969"/><rect x="58.0" y="80.0" width="1.1" height="1.1" fill="#b4b4b4"/><rect x="16.9" y="49.9" width="1.2" height="1.1" fill="#9b9b9b"/><rect x="79.1" y="57.8" width="1.6" height="0.9" fill="#3c3c3c"/><rect x="92.4" y="64.9" width="1.7" height="1.1" fill="#878787"/><rect x="82.1" y="64.6" width="0.7" height="1.1" fill="#696969"/><rect x="79.8" y="73.3" width="0.9" height="1.4" fill="#323232"/><rect x="91.7" y="56.2" width="1.1" height="0.8" fill="#696969"/><rect x="53.0" y="57.6" width="0.7" height="1.7" fill="#3c3c3c"/><rect x="74.5" y="50.1" width="1.7" height="0.7" fill="#787878"/><rect x="2.2" y="47.3" width="1.3" height="1.4" fill="#323232"/><rect x="91.2" y="52.5" width="0.7" height="0.8" fill="#b4b4b4"/><rect x="43.1" y="73.8" width="1.3" height="1.8" fill="#323232"/><rect x="135.5" y="62.4" width="1.6" height="1.4" fill="#3c3c3c"/><rect x="136.2" y="48.8" width="1.2" height="1.1" fill="#5a5a5a"/><rect x="70.7" y="70.2" width="1.2" height="1.6" fill="#b4b4b4"/><rect x="53.9" y="76.8" width="0.7" height="0.8" fill="#696969"/><rect x="90.5" y="86.3" width="1.2" height="1.7" fill="#878787"/><rect x="64.0" y="46.7" width="1.6" height="1.7" fill="#323232"/><rect x="14.9" y="63.1" width="1.3" height="1.8" fill="#3c3c3c"/><rect x="41.2" y="67.1" width="0.7" height="1.3" fill="#4b4b4b"/><rect x="90.5" y="67.2" width="1.0" height="1.0" fill="#5a5a5a"/><rect x="33.7" y="63.2" width="0.7" height="0.9" fill="#9b9b9b"/><rect x="23.2" y="50.3" width="0.8" height="1.7" fill="#b4b4b4"/><rect x="21.1" y="86.3" width="1.2" height="1.1" fill="#3c3c3c"/><rect x="56.4" y="46.4" width="0.8" height="1.6" fill="#878787"/><rect x="21.4" y="68.0" width="0.6" height="0.7" fill="#696969"/><rect x="124.5" y="68.5" width="1.5" height="1.5" fill="#878787"/><rect x="56.8" y="49.3" width="0.9" height="0.7" fill="#878787"/><rect x="44.9" y="66.3" width="1.4" height="1.7" fill="#4b4b4b"/><rect x="77.5" y="66.8" width="1.7" height="1.1" fill="#696969"/><rect x="36.5" y="70.9" width="0.9" height="0.7" fill="#9b9b9b"/><rect x="52.5" y="72.9" width="1.0" height="0.7" fill="#696969"/><rect x="114.1" y="48.6" width="1.2" height="1.3" fill="#878787"/><rect x="111.7" y="74.0" width="1.5" height="0.6" fill="#787878"/><rect x="66.1" y="55.6" width="1.5" height="1.2" fill="#323232"/><rect x="51.0" y="70.6" width="0.7" height="1.4" fill="#787878"/><rect x="131.1" y="61.2" width="1.3" height="1.0" fill="#696969"/><rect x="28.6" y="77.7" width="0.7" height="0.8" fill="#3c3c3c"/><rect x="70.5" y="77.3" width="0.7" height="0.7" fill="#696969"/><rect x="80.5" y="79.5" width="1.7" height="1.4" fill="#787878"/><rect x="54.9" y="57.9" width="1.4" height="0.7" fill="#5a5a5a"/><rect x="113.5" y="59.6" width="1.0" height="1.6" fill="#696969"/><rect x="87.7" y="48.4" width="1.5" height="0.7" fill="#3c3c3c"/><rect x="75.4" y="84.5" width="1.4" height="0.6" fill="#5a5a5a"/><rect x="79.1" y="46.2" width="1.5" height="1.1" fill="#3c3c3c"/><rect x="23.5" y="49.5" width="1.4" height="0.8" fill="#9b9b9b"/><rect x="92.4" y="79.2" width="1.1" height="1.7" fill="#3c3c3c"/><rect x="114.0" y="85.7" width="1.0" height="1.6" fill="#3c3c3c"/><rect x="96.0" y="62.5" width="1.4" height="1.4" fill="#3c3c3c"/><rect x="125.9" y="54.8" width="1.1" height="1.2" fill="#3c3c3c"/><rect x="21.2" y="57.4" width="1.1" height="1.7" fill="#878787"/><rect x="27.3" y="75.2" width="1.2" height="1.1" fill="#878787"/><rect x="69.8" y="66.0" width="1.3" height="1.6" fill="#787878"/><rect x="27.6" y="60.4" width="0.8" height="1.0" fill="#b4b4b4"/><rect x="93.3" y="64.8" width="1.3" height="1.2" fill="#4b4b4b"/><rect x="65.6" y="86.7" width="1.0" height="1.4" fill="#5a5a5a"/><rect x="86.3" y="60.6" width="1.1" height="0.7" fill="#3c3c3c"/><rect x="109.6" y="56.6" width="0.9" height="0.9" fill="#3c3c3c"/><rect x="76.4" y="86.5" width="1.7" height="1.1" fill="#9b9b9b"/><rect x="16.0" y="53.7" width="1.3" height="1.4" fill="#b4b4b4"/><rect x="115.7" y="47.5" width="1.4" height="1.3" fill="#b4b4b4"/><rect x="66.9" y="66.3" width="1.1" height="1.8" fill="#787878"/><rect x="110.0" y="50.1" width="1.5" height="0.9" fill="#5a5a5a"/><rect x="117.5" y="76.6" width="1.0" height="0.8" fill="#5a5a5a"/><rect x="79.5" y="83.3" width="1.7" height="1.4" fill="#787878"/><rect x="14.9" y="78.7" width="1.6" height="1.3" fill="#696969"/><rect x="15.1" y="60.9" width="0.8" height="1.7" fill="#696969"/><rect x="39.1" y="69.3" width="0.9" height="0.7" fill="#323232"/><rect x="38.9" y="57.5" width="1.2" height="1.6" fill="#4b4b4b"/><rect x="112.2" y="68.6" width="0.8" height="0.7" fill="#4b4b4b"/><rect x="73.0" y="73.4" width="1.7" height="1.5" fill="#696969"/><rect x="41.8" y="63.7" width="1.5" height="1.4" fill="#b4b4b4"/><rect x="31.9" y="64.8" width="1.0" height="1.5" fill="#b4b4b4"/><rect x="37.0" y="76.2" width="1.7" height="0.7" fill="#b4b4b4"/><rect x="15.1" y="85.0" width="1.4" height="0.7" fill="#323232"/><rect x="13.9" y="69.5" width="0.7" height="1.8" fill="#696969"/><rect x="48.3" y="51.8" width="1.7" height="1.4" fill="#4b4b4b"/><rect x="4.1" y="69.7" width="1.8" height="1.4" fill="#b4b4b4"/><rect x="74.0" y="64.1" width="1.4" height="0.7" fill="#787878"/><rect x="83.6" y="84.4" width="1.7" height="0.7" fill="#4b4b4b"/><rect x="66.3" y="49.3" width="1.2" height="1.3" fill="#b4b4b4"/><rect x="12.2" y="83.3" width="0.9" height="0.9" fill="#696969"/><rect x="128.2" y="86.5" width="1.7" height="1.7" fill="#878787"/><rect x="127.6" y="46.8" width="1.2" height="1.3" fill="#787878"/><rect x="127.4" y="49.6" width="1.2" height="1.8" fill="#323232"/><rect x="14.9" y="58.4" width="1.0" height="1.8" fill="#878787"/><rect x="4.4" y="80.4" width="1.4" height="1.2" fill="#3c3c3c"/><rect x="0.1" y="48.8" width="1.6" height="1.8" fill="#5a5a5a"/><rect x="55.6" y="59.9" width="1.0" height="0.6" fill="#5a5a5a"/><rect x="35.8" y="70.3" width="1.2" height="1.0" fill="#787878"/><rect x="62.1" y="55.7" width="1.7" height="0.8" fill="#4b4b4b"/><rect x="28.9" y="64.7" width="0.9" height="1.7" fill="#4b4b4b"/><rect x="32.5" y="73.2" width="0.9" height="1.2" fill="#696969"/><rect x="78.3" y="46.9" width="1.0" height="0.7" fill="#b4b4b4"/><rect x="45.0" y="76.1" width="1.4" height="1.5" fill="#b4b4b4"/><rect x="12.6" y="74.4" width="1.2" height="1.1" fill="#323232"/><rect x="56.6" y="87.1" width="1.0" height="1.0" fill="#3c3c3c"/><rect x="135.2" y="62.1" width="0.8" height="1.5" fill="#5a5a5a"/><rect x="46.2" y="78.8" width="1.1" height="0.9" fill="#3c3c3c"/><rect x="65.0" y="80.0" width="0.6" height="1.2" fill="#878787"/><rect x="130.3" y="63.6" width="0.8" height="0.7" fill="#4b4b4b"/><rect x="119.9" y="85.9" width="1.7" height="1.0" fill="#4b4b4b"/><rect x="19.3" y="75.7" width="1.7" height="0.8" fill="#4b4b4b"/><rect x="95.8" y="55.8" width="1.6" height="1.7" fill="#9b9b9b"/><rect x="50.1" y="76.2" width="1.7" height="0.8" fill="#3c3c3c"/><rect x="134.2" y="76.1" width="1.4" height="0.7" fill="#787878"/><rect x="25.0" y="51.1" width="1.2" height="1.2" fill="#9b9b9b"/><rect x="104.1" y="67.9" width="1.7" height="0.7" fill="#5a5a5a"/><rect x="2.3" y="84.2" width="1.8" height="1.7" fill="#b4b4b4"/><rect x="25.4" y="86.1" width="1.4" height="0.7" fill="#9b9b9b"/><rect x="108.2" y="86.4" width="1.2" height="1.3" fill="#9b9b9b"/><rect x="63.5" y="53.9" width="1.7" height="1.8" fill="#323232"/><rect x="59.9" y="70.3" width="1.3" height="0.9" fill="#323232"/><rect x="23.6" y="76.6" width="0.9" height="0.6" fill="#5a5a5a"/><rect x="57.9" y="85.9" width="1.3" height="0.7" fill="#323232"/><rect x="24.9" y="46.6" width="1.0" height="0.6" fill="#696969"/><rect x="115.7" y="69.3" width="1.4" height="0.9" fill="#787878"/><rect x="22.7" y="52.0" width="1.3" height="1.3" fill="#878787"/><rect x="73.7" y="65.1" width="1.0" height="1.7" fill="#5a5a5a"/><rect x="92.5" y="71.8" width="1.7" height="1.4" fill="#9b9b9b"/><rect x="69.5" y="86.9" width="0.9" height="0.8" fill="#787878"/><rect x="32.1" y="70.2" width="0.8" height="1.7" fill="#696969"/><rect x="87.2" y="72.3" width="0.6" height="1.2" fill="#3c3c3c"/><rect x="67.9" y="84.3" width="1.2" height="1.1" fill="#323232"/><rect x="90.5" y="62.6" width="1.2" height="1.6" fill="#9b9b9b"/><rect x="7.7" y="59.3" width="1.4" height="0.7" fill="#4b4b4b"/><rect x="132.4" y="57.6" width="1.1" height="0.7" fill="#323232"/><rect x="32.0" y="80.4" width="1.6" height="0.9" fill="#b4b4b4"/><rect x="14.0" y="60.7" width="0.7" height="0.7" fill="#9b9b9b"/><rect x="20.7" y="59.1" width="1.4" height="1.2" fill="#5a5a5a"/><rect x="88.3" y="74.6" width="1.1" height="1.0" fill="#4b4b4b"/><rect x="93.5" y="79.1" width="1.5" height="1.6" fill="#4b4b4b"/><rect x="16.1" y="65.7" width="1.5" height="0.7" fill="#323232"/><rect x="130.5" y="73.3" width="1.2" height="1.4" fill="#878787"/><rect x="127.3" y="72.7" width="0.7" height="1.4" fill="#3c3c3c"/><rect x="35.4" y="58.0" width="1.1" height="0.9" fill="#696969"/><rect x="134.5" y="71.8" width="0.8" height="1.5" fill="#323232"/><rect x="59.5" y="62.9" width="1.1" height="1.5" fill="#323232"/><rect x="77.7" y="85.2" width="1.4" height="1.2" fill="#878787"/><rect x="97.1" y="47.6" width="1.7" height="1.2" fill="#5a5a5a"/><rect x="31.5" y="71.7" width="0.7" height="0.8" fill="#878787"/><rect x="43.1" y="57.3" width="0.8" height="1.4" fill="#3c3c3c"/><rect x="45.1" y="84.5" width="1.7" height="0.9" fill="#696969"/><rect x="131.4" y="78.1" width="1.0" height="0.9" fill="#b4b4b4"/><rect x="135.4" y="48.7" width="0.7" height="1.4" fill="#323232"/><rect x="64.6" y="76.9" width="0.9" height="0.8" fill="#787878"/><rect x="32.9" y="59.6" width="0.7" height="0.7" fill="#787878"/><rect x="40.4" y="81.7" width="1.6" height="1.2" fill="#5a5a5a"/><rect x="55.5" y="55.8" width="1.2" height="1.8" fill="#3c3c3c"/><rect x="58.6" y="65.8" width="1.1" height="1.4" fill="#b4b4b4"/><rect x="123.2" y="56.4" width="1.2" height="1.8" fill="#b4b4b4"/><rect x="11.9" y="53.5" width="1.8" height="1.3" fill="#4b4b4b"/><rect x="75.3" y="57.3" width="1.5" height="1.5" fill="#787878"/><rect x="36.6" y="79.1" width="0.6" height="0.7" fill="#323232"/><rect x="59.0" y="50.4" width="1.2" height="1.7" fill="#323232"/><rect x="75.1" y="46.1" width="1.2" height="1.3" fill="#4b4b4b"/><rect x="135.9" y="66.7" width="1.5" height="0.9" fill="#5a5a5a"/><rect x="93.0" y="71.6" width="0.7" height="1.5" fill="#4b4b4b"/><rect x="33.5" y="69.7" width="1.1" height="1.1" fill="#878787"/><rect x="99.7" y="71.7" width="0.8" height="0.9" fill="#9b9b9b"/><rect x="134.7" y="82.3" width="1.7" height="1.4" fill="#787878"/><rect x="41.5" y="55.2" width="1.6" height="1.2" fill="#878787"/><rect x="100.9" y="82.1" width="0.8" height="0.6" fill="#3c3c3c"/><rect x="96.7" y="64.6" width="1.0" height="1.1" fill="#9b9b9b"/><rect x="59.4" y="54.8" width="0.6" height="1.6" fill="#3c3c3c"/><rect x="62.1" y="65.7" width="1.7" height="1.1" fill="#878787"/><rect x="92.5" y="66.9" width="1.6" height="1.7" fill="#3c3c3c"/><rect x="101.1" y="58.3" width="1.5" height="1.7" fill="#9b9b9b"/><rect x="59.4" y="73.1" width="0.9" height="1.5" fill="#b4b4b4"/><rect x="80.1" y="76.2" width="1.3" height="1.1" fill="#878787"/><rect x="47.0" y="63.7" width="0.7" height="1.1" fill="#878787"/><rect x="40.9" y="85.7" width="1.5" height="1.1" fill="#9b9b9b"/><rect x="79.6" y="80.1" width="1.6" height="1.1" fill="#787878"/><rect x="101.9" y="70.0" width="0.9" height="1.4" fill="#b4b4b4"/><rect x="55.6" y="52.5" width="0.6" height="1.5" fill="#787878"/><rect x="110.5" y="67.1" width="0.6" height="1.5" fill="#787878"/><rect x="72.1" y="66.6" width="0.8" height="1.4" fill="#9b9b9b"/><rect x="90.5" y="58.0" width="1.6" height="1.1" fill="#4b4b4b"/><rect x="13.4" y="48.0" width="1.2" height="1.3" fill="#9b9b9b"/><rect x="77.7" y="85.6" width="1.0" height="1.5" fill="#3c3c3c"/><rect x="1.2" y="68.7" width="0.8" height="1.0" fill="#5a5a5a"/><rect x="51.9" y="57.4" width="1.0" height="1.2" fill="#323232"/><rect x="73.6" y="62.5" width="1.1" height="1.5" fill="#5a5a5a"/><rect x="28.2" y="47.1" width="1.7" height="1.4" fill="#323232"/><rect x="100.9" y="57.0" width="1.2" height="1.4" fill="#323232"/><rect x="90.8" y="58.1" width="1.0" height="1.3" fill="#787878"/><rect x="95.5" y="60.0" width="1.7" height="0.9" fill="#9b9b9b"/><rect x="95.7" y="47.1" width="1.7" height="1.5" fill="#696969"/><rect x="83.2" y="87.0" width="0.9" height="0.9" fill="#787878"/><rect x="20.5" y="86.0" width="1.0" height="1.1" fill="#878787"/><rect x="24.0" y="53.6" width="1.3" height="1.5" fill="#9b9b9b"/><rect x="48.5" y="75.3" width="0.9" height="1.7" fill="#5a5a5a"/><rect x="65.4" y="48.5" width="1.2" height="1.4" fill="#3c3c3c"/><rect x="104.6" y="74.2" width="1.7" height="0.6" fill="#787878"/><rect x="6.0" y="60.7" width="1.8" height="1.3" fill="#878787"/><rect x="8.6" y="50.2" width="0.6" height="1.4" fill="#4b4b4b"/><rect x="75.6" y="47.8" width="0.8" height="1.4" fill="#323232"/><rect x="63.8" y="58.0" width="1.3" height="1.0" fill="#787878"/><rect x="0.5" y="84.3" width="1.0" height="0.6" fill="#787878"/><rect x="42.4" y="70.6" width="0.9" height="0.7" fill="#3c3c3c"/><rect x="64.0" y="67.2" width="1.0" height="1.7" fill="#9b9b9b"/><rect x="94.5" y="66.8" width="1.1" height="1.1" fill="#b4b4b4"/><rect x="36.3" y="64.4" width="1.3" height="1.8" fill="#5a5a5a"/><rect x="38.9" y="58.3" width="1.1" height="1.4" fill="#323232"/><rect x="84.7" y="57.8" width="0.8" height="1.6" fill="#b4b4b4"/><rect x="93.3" y="74.7" width="1.5" height="1.1" fill="#878787"/><rect x="68.4" y="55.4" width="1.3" height="1.4" fill="#5a5a5a"/><rect x="10.2" y="56.2" width="1.8" height="1.3" fill="#b4b4b4"/><rect x="75.9" y="47.6" width="0.9" height="1.0" fill="#3c3c3c"/><rect x="72.6" y="50.7" width="1.6" height="1.6" fill="#3c3c3c"/><rect x="61.1" y="87.1" width="1.7" height="1.3" fill="#b4b4b4"/><rect x="80.8" y="70.2" width="0.8" height="1.2" fill="#5a5a5a"/><rect x="92.0" y="55.0" width="1.1" height="1.3" fill="#787878"/><rect x="135.1" y="84.2" width="1.3" height="0.6" fill="#5a5a5a"/><rect x="82.4" y="56.1" width="1.0" height="0.8" fill="#b4b4b4"/><rect x="71.4" y="86.5" width="0.8" height="0.8" fill="#5a5a5a"/><rect x="103.5" y="48.4" width="0.6" height="1.6" fill="#4b4b4b"/><rect x="108.0" y="72.3" width="1.5" height="1.7" fill="#787878"/><rect x="109.9" y="83.4" width="1.5" height="1.0" fill="#3c3c3c"/><rect x="84.0" y="84.8" width="0.7" height="1.3" fill="#878787"/><rect x="120.0" y="73.2" width="1.1" height="1.4" fill="#878787"/><rect x="67.6" y="86.2" width="0.9" height="0.9" fill="#5a5a5a"/><rect x="92.1" y="48.7" width="0.8" height="0.9" fill="#696969"/><rect x="127.7" y="73.6" width="0.7" height="1.4" fill="#878787"/><rect x="127.6" y="59.3" width="0.6" height="1.1" fill="#878787"/><rect x="16.7" y="56.5" width="0.7" height="1.0" fill="#787878"/><rect x="76.1" y="62.2" width="1.7" height="1.4" fill="#4b4b4b"/><rect x="27.8" y="46.5" width="1.4" height="1.4" fill="#5a5a5a"/><rect x="61.2" y="66.1" width="0.7" height="1.3" fill="#323232"/><rect x="17.7" y="61.9" width="0.9" height="1.1" fill="#878787"/><rect x="101.8" y="77.6" width="1.5" height="0.7" fill="#3c3c3c"/><rect x="20.2" y="52.7" width="0.6" height="0.6" fill="#878787"/><rect x="19.8" y="75.6" width="0.8" height="1.0" fill="#323232"/><rect x="80.9" y="55.5" width="0.8" height="1.1" fill="#878787"/><rect x="27.4" y="72.6" width="0.8" height="0.8" fill="#b4b4b4"/><rect x="108.1" y="63.0" width="1.1" height="1.5" fill="#3c3c3c"/><rect x="53.0" y="65.7" width="0.6" height="1.3" fill="#5a5a5a"/><rect x="110.1" y="84.8" width="1.1" height="1.5" fill="#878787"/><rect x="39.5" y="57.9" width="1.4" height="0.8" fill="#787878"/><rect x="126.2" y="50.5" width="1.4" height="0.9" fill="#696969"/><rect x="40.0" y="77.1" width="1.5" height="1.4" fill="#4b4b4b"/><rect x="85.7" y="81.9" width="1.0" height="0.9" fill="#b4b4b4"/><rect x="133.7" y="76.7" width="1.6" height="1.0" fill="#696969"/><rect x="136.4" y="80.8" width="1.4" height="1.8" fill="#4b4b4b"/><rect x="35.4" y="66.6" width="0.7" height="1.5" fill="#323232"/><rect x="59.3" y="70.0" width="0.9" height="1.7" fill="#878787"/><rect x="26.1" y="64.6" width="1.6" height="1.8" fill="#696969"/><rect x="25.5" y="67.0" width="1.3" height="1.3" fill="#696969"/><rect x="27.1" y="69.1" width="1.0" height="0.6" fill="#323232"/><rect x="93.9" y="72.0" width="1.4" height="1.2" fill="#b4b4b4"/><rect x="87.0" y="48.7" width="1.5" height="0.9" fill="#9b9b9b"/><rect x="24.3" y="65.2" width="1.2" height="1.4" fill="#696969"/><rect x="43.4" y="62.5" width="1.0" height="1.5" fill="#9b9b9b"/><rect x="73.5" y="71.7" width="1.7" height="1.4" fill="#5a5a5a"/><rect x="17.2" y="70.9" width="1.4" height="1.1" fill="#4b4b4b"/><rect x="74.5" y="54.1" width="1.4" height="1.0" fill="#323232"/><rect x="50.4" y="84.7" width="0.8" height="1.4" fill="#696969"/><rect x="93.3" y="68.7" width="1.6" height="1.0" fill="#3c3c3c"/><rect x="7.8" y="72.9" width="1.2" height="0.7" fill="#4b4b4b"/><rect x="116.4" y="52.7" width="1.0" height="0.7" fill="#787878"/><rect x="125.4" y="61.5" width="1.4" height="1.0" fill="#878787"/><rect x="75.6" y="70.2" width="1.6" height="1.4" fill="#787878"/><rect x="39.2" y="78.1" width="1.4" height="1.2" fill="#323232"/><rect x="60.2" y="81.4" width="1.2" height="1.7" fill="#4b4b4b"/><rect x="69.7" y="48.4" width="0.8" height="1.3" fill="#3c3c3c"/><rect x="135.2" y="78.9" width="0.9" height="1.1" fill="#b4b4b4"/><rect x="57.3" y="57.6" width="1.8" height="1.4" fill="#878787"/><rect x="93.1" y="81.5" width="0.7" height="0.7" fill="#878787"/><rect x="72.8" y="85.9" width="1.7" height="1.1" fill="#878787"/><rect x="13.4" y="55.6" width="0.8" height="1.4" fill="#696969"/><rect x="50.2" y="82.9" width="0.9" height="0.6" fill="#4b4b4b"/><rect x="65.9" y="51.5" width="0.8" height="1.7" fill="#3c3c3c"/><rect x="77.3" y="52.4" width="1.0" height="0.8" fill="#323232"/><rect x="38.4" y="48.0" width="1.4" height="1.1" fill="#3c3c3c"/><rect x="14.9" y="47.5" width="1.4" height="1.2" fill="#5a5a5a"/><rect x="113.1" y="83.8" width="0.8" height="1.2" fill="#696969"/><rect x="125.2" y="54.7" width="1.4" height="0.7" fill="#4b4b4b"/><rect x="129.5" y="71.6" width="1.0" height="1.5" fill="#323232"/><rect x="111.5" y="55.9" width="1.6" height="1.2" fill="#b4b4b4"/><rect x="118.1" y="56.3" width="1.3" height="1.0" fill="#4b4b4b"/><rect x="81.2" y="56.9" width="0.9" height="1.4" fill="#5a5a5a"/><rect x="63.3" y="50.9" width="0.7" height="0.8" fill="#878787"/><rect x="67.7" y="72.7" width="1.0" height="1.0" fill="#4b4b4b"/><rect x="30.8" y="71.2" width="0.9" height="0.7" fill="#b4b4b4"/><rect x="81.6" y="71.5" width="1.5" height="1.3" fill="#878787"/><rect x="55.5" y="72.9" width="1.0" height="1.1" fill="#787878"/><rect x="16.8" y="56.4" width="1.2" height="1.3" fill="#696969"/><rect x="109.2" y="74.1" width="1.6" height="1.1" fill="#323232"/><rect x="34.3" y="59.1" width="0.7" height="1.6" fill="#696969"/><rect x="80.8" y="72.4" width="1.4" height="1.8" fill="#b4b4b4"/><rect x="121.8" y="49.5" width="0.9" height="1.5" fill="#5a5a5a"/><rect x="12.9" y="48.8" width="1.4" height="1.7" fill="#696969"/><rect x="127.3" y="79.5" width="1.0" height="1.2" fill="#5a5a5a"/><rect x="87.2" y="79.3" width="1.0" height="0.8" fill="#3c3c3c"/><rect x="57.2" y="49.4" width="1.5" height="1.3" fill="#5a5a5a"/><rect x="61.9" y="70.8" width="1.0" height="0.6" fill="#878787"/><rect x="59.8" y="56.7" width="0.8" height="1.3" fill="#3c3c3c"/><rect x="17.2" y="79.5" width="0.7" height="1.3" fill="#3c3c3c"/><rect x="68.8" y="53.4" width="1.3" height="1.0" fill="#787878"/><rect x="78.9" y="83.2" width="1.7" height="1.5" fill="#323232"/><rect x="64.6" y="78.3" width="1.4" height="0.8" fill="#b4b4b4"/><rect x="118.9" y="79.4" width="1.5" height="1.7" fill="#9b9b9b"/><rect x="12.6" y="52.0" width="0.7" height="0.8" fill="#696969"/><rect x="15.5" y="51.8" width="0.8" height="1.3" fill="#787878"/><rect x="14.1" y="59.9" width="1.1" height="1.2" fill="#878787"/><rect x="12.7" y="82.7" width="0.7" height="0.9" fill="#4b4b4b"/><rect x="56.4" y="67.6" width="0.8" height="1.2" fill="#696969"/><rect x="8.1" y="65.3" width="1.3" height="1.3" fill="#b4b4b4"/><rect x="73.6" y="66.3" width="1.8" height="0.9" fill="#878787"/><rect x="85.5" y="65.8" width="1.4" height="1.1" fill="#9b9b9b"/><rect x="127.9" y="54.7" width="0.7" height="0.8" fill="#5a5a5a"/><rect x="124.4" y="49.8" width="0.6" height="1.6" fill="#787878"/><rect x="12.4" y="57.8" width="1.6" height="1.2" fill="#787878"/><rect x="59.7" y="65.0" width="1.2" height="1.0" fill="#9b9b9b"/><rect x="69.0" y="85.5" width="1.7" height="1.8" fill="#4b4b4b"/><rect x="21.0" y="67.8" width="1.3" height="1.7" fill="#b4b4b4"/><rect x="10.9" y="63.7" width="1.7" height="1.6" fill="#323232"/><rect x="11.2" y="55.3" width="0.7" height="1.5" fill="#323232"/><rect x="80.6" y="80.8" width="1.1" height="0.8" fill="#3c3c3c"/><rect x="46.6" y="64.4" width="1.5" height="0.8" fill="#3c3c3c"/><rect x="27.3" y="61.7" width="1.2" height="0.7" fill="#696969"/><rect x="6.0" y="66.3" width="0.7" height="0.7" fill="#696969"/><rect x="127.5" y="48.7" width="1.0" height="1.0" fill="#b4b4b4"/><rect x="128.0" y="53.1" width="1.8" height="0.8" fill="#5a5a5a"/><rect x="16.5" y="58.6" width="1.1" height="1.6" fill="#787878"/><rect x="27.8" y="83.3" width="1.6" height="1.2" fill="#323232"/><rect x="40.4" y="83.9" width="1.6" height="1.1" fill="#3c3c3c"/><rect x="81.2" y="80.0" width="0.7" height="0.9" fill="#787878"/><rect x="59.7" y="66.7" width="1.5" height="1.0" fill="#696969"/><rect x="74.6" y="62.6" width="1.3" height="0.9" fill="#323232"/><rect x="62.3" y="47.9" width="1.3" height="1.6" fill="#3c3c3c"/><rect x="36.9" y="48.1" width="1.0" height="1.0" fill="#3c3c3c"/><rect x="32.4" y="79.4" width="1.3" height="1.5" fill="#323232"/><rect x="49.2" y="64.4" width="1.2" height="0.6" fill="#3c3c3c"/><rect x="54.9" y="80.6" width="1.4" height="0.7" fill="#878787"/><rect x="102.5" y="66.9" width="1.6" height="1.6" fill="#4b4b4b"/><rect x="92.0" y="65.2" width="1.2" height="1.3" fill="#b4b4b4"/><rect x="70.4" y="87.0" width="1.7" height="1.6" fill="#b4b4b4"/><rect x="81.7" y="83.7" width="0.7" height="1.2" fill="#878787"/><rect x="1.0" y="70.1" width="1.7" height="0.9" fill="#9b9b9b"/><rect x="15.4" y="72.3" width="1.6" height="1.1" fill="#787878"/><rect x="30.7" y="76.4" width="1.7" height="1.5" fill="#696969"/><rect x="131.1" y="63.0" width="1.2" height="1.7" fill="#b4b4b4"/><rect x="10.5" y="64.3" width="0.9" height="0.8" fill="#878787"/><rect x="127.6" y="51.1" width="1.1" height="0.9" fill="#b4b4b4"/><rect x="15.0" y="59.8" width="1.1" height="1.2" fill="#878787"/><rect x="18.2" y="58.9" width="0.6" height="1.5" fill="#b4b4b4"/><rect x="31.2" y="56.1" width="1.2" height="1.4" fill="#787878"/><rect x="89.6" y="58.2" width="1.4" height="0.8" fill="#5a5a5a"/><rect x="135.2" y="85.5" width="1.7" height="1.4" fill="#3c3c3c"/><rect x="33.1" y="78.6" width="1.7" height="0.9" fill="#3c3c3c"/><rect x="60.7" y="57.5" width="1.7" height="1.3" fill="#4b4b4b"/><rect x="101.9" y="77.8" width="1.2" height="0.9" fill="#b4b4b4"/><rect x="82.3" y="75.1" width="1.5" height="0.8" fill="#696969"/><rect x="132.5" y="54.8" width="0.9" height="1.8" fill="#323232"/><rect x="126.3" y="80.9" width="1.6" height="1.6" fill="#3c3c3c"/><rect x="120.5" y="84.8" width="1.5" height="0.7" fill="#878787"/><rect x="8.4" y="76.3" width="1.2" height="1.7" fill="#9b9b9b"/><rect x="116.7" y="54.3" width="1.0" height="1.1" fill="#323232"/><rect x="87.3" y="48.8" width="1.7" height="1.5" fill="#878787"/><rect x="63.1" y="54.5" width="1.1" height="1.4" fill="#b4b4b4"/><rect x="97.7" y="52.5" width="1.8" height="1.7" fill="#5a5a5a"/><rect x="18.7" y="86.2" width="1.6" height="1.3" fill="#4b4b4b"/><rect x="92.4" y="46.9" width="1.6" height="1.3" fill="#696969"/><rect x="83.8" y="60.7" width="1.0" height="0.7" fill="#323232"/><rect x="116.0" y="68.8" width="0.7" height="1.2" fill="#9b9b9b"/><rect x="110.3" y="85.8" width="1.6" height="1.8" fill="#9b9b9b"/><rect x="106.0" y="71.0" width="1.3" height="0.8" fill="#787878"/><rect x="49.6" y="46.2" width="1.6" height="1.3" fill="#9b9b9b"/><rect x="81.0" y="81.4" width="1.5" height="1.8" fill="#9b9b9b"/><rect x="122.9" y="72.3" width="1.5" height="1.3" fill="#787878"/><rect x="8.3" y="69.6" width="1.0" height="0.7" fill="#3c3c3c"/><rect x="78.6" y="76.9" width="1.5" height="0.7" fill="#b4b4b4"/><rect x="57.7" y="79.3" width="1.0" height="1.8" fill="#5a5a5a"/><rect x="78.7" y="58.5" width="1.0" height="1.2" fill="#878787"/><rect x="122.2" y="58.1" width="1.2" height="1.2" fill="#696969"/><rect x="95.2" y="60.8" width="1.1" height="1.7" fill="#4b4b4b"/><rect x="118.3" y="76.8" width="0.7" height="0.8" fill="#3c3c3c"/><rect x="114.6" y="87.1" width="1.5" height="0.8" fill="#3c3c3c"/><rect x="85.2" y="71.1" width="0.8" height="1.8" fill="#b4b4b4"/><rect x="131.7" y="48.5" width="1.1" height="1.6" fill="#323232"/><rect x="35.4" y="55.1" width="1.0" height="1.3" fill="#787878"/><rect x="115.6" y="86.5" width="1.3" height="0.9" fill="#696969"/><rect x="123.1" y="60.8" width="1.3" height="1.6" fill="#9b9b9b"/><rect x="13.5" y="85.4" width="0.8" height="1.5" fill="#b4b4b4"/><rect x="79.8" y="80.2" width="0.8" height="1.6" fill="#9b9b9b"/><rect x="117.0" y="66.6" width="1.1" height="0.9" fill="#b4b4b4"/><rect x="0.6" y="65.4" width="1.8" height="1.0" fill="#4b4b4b"/><rect x="95.8" y="59.7" width="1.5" height="1.3" fill="#878787"/><rect x="70.4" y="80.6" width="1.6" height="1.4" fill="#696969"/><rect x="47.7" y="78.0" width="1.0" height="0.8" fill="#323232"/><rect x="13.7" y="49.8" width="1.8" height="1.5" fill="#9b9b9b"/><rect x="8.5" y="52.8" width="0.7" height="1.3" fill="#878787"/><rect x="130.4" y="58.3" width="0.9" height="0.9" fill="#4b4b4b"/><rect x="115.7" y="52.6" width="1.3" height="1.1" fill="#b4b4b4"/><rect x="129.8" y="59.0" width="1.6" height="1.2" fill="#3c3c3c"/><rect x="63.3" y="60.8" width="1.3" height="1.2" fill="#5a5a5a"/><rect x="95.8" y="55.6" width="1.4" height="1.6" fill="#5a5a5a"/><rect x="33.4" y="52.5" width="1.8" height="1.7" fill="#5a5a5a"/><rect x="73.9" y="48.1" width="1.0" height="1.7" fill="#3c3c3c"/><rect x="23.3" y="74.3" width="0.6" height="1.7" fill="#3c3c3c"/><rect x="118.3" y="47.9" width="1.7" height="0.9" fill="#5a5a5a"/><rect x="13.2" y="68.2" width="0.7" height="1.1" fill="#696969"/><rect x="60.1" y="51.2" width="1.3" height="1.6" fill="#696969"/><rect x="0.5" y="69.0" width="1.2" height="1.5" fill="#4b4b4b"/><rect x="94.8" y="55.3" width="0.8" height="1.2" fill="#696969"/><rect x="30.5" y="87.0" width="1.2" height="1.0" fill="#323232"/><rect x="72.2" y="48.1" width="1.4" height="1.2" fill="#878787"/><rect x="134.0" y="55.8" width="0.7" height="1.1" fill="#b4b4b4"/><rect x="28.5" y="46.2" width="0.8" height="0.7" fill="#9b9b9b"/><rect x="56.8" y="85.7" width="0.6" height="0.9" fill="#323232"/><rect x="81.1" y="72.7" width="1.6" height="1.6" fill="#4b4b4b"/><rect x="79.9" y="64.7" width="1.1" height="1.2" fill="#4b4b4b"/><rect x="93.0" y="79.6" width="1.2" height="1.7" fill="#9b9b9b"/><rect x="113.2" y="79.4" width="0.9" height="1.0" fill="#323232"/><rect x="60.8" y="65.0" width="1.1" height="0.8" fill="#696969"/><rect x="58.8" y="82.0" width="1.8" height="1.5" fill="#696969"/><rect x="41.3" y="68.9" width="1.8" height="1.7" fill="#b4b4b4"/><rect x="84.6" y="69.0" width="1.2" height="1.0" fill="#3c3c3c"/><rect x="103.2" y="65.9" width="0.9" height="0.7" fill="#878787"/><rect x="62.4" y="64.3" width="0.7" height="1.5" fill="#878787"/><rect x="112.4" y="74.2" width="1.5" height="0.8" fill="#b4b4b4"/><rect x="10.8" y="63.6" width="0.8" height="1.6" fill="#3c3c3c"/><rect x="118.3" y="69.0" width="0.8" height="0.9" fill="#b4b4b4"/><rect x="6.6" y="54.3" width="1.1" height="1.6" fill="#4b4b4b"/><rect x="80.7" y="56.8" width="0.7" height="1.3" fill="#878787"/><rect x="115.3" y="67.3" width="1.2" height="0.9" fill="#878787"/><rect x="3.9" y="79.5" width="1.6" height="0.8" fill="#323232"/><rect x="47.9" y="60.3" width="0.8" height="0.8" fill="#b4b4b4"/><rect x="38.2" y="71.2" width="0.9" height="1.5" fill="#696969"/><rect x="101.4" y="79.6" width="0.9" height="1.3" fill="#4b4b4b"/><rect x="130.2" y="70.2" width="0.9" height="1.4" fill="#696969"/><rect x="100.2" y="78.0" width="1.3" height="0.9" fill="#3c3c3c"/><rect x="13.7" y="78.2" width="0.8" height="1.5" fill="#696969"/><rect x="25.8" y="82.7" width="0.6" height="1.4" fill="#4b4b4b"/><rect x="82.4" y="84.8" width="1.3" height="1.3" fill="#787878"/><rect x="13.7" y="71.1" width="0.9" height="1.8" fill="#878787"/><rect x="117.9" y="75.9" width="0.9" height="0.6" fill="#787878"/><rect x="16.0" y="51.6" width="1.6" height="1.0" fill="#b4b4b4"/><rect x="4.8" y="53.1" width="1.5" height="1.3" fill="#696969"/><rect x="16.9" y="64.2" width="1.7" height="1.7" fill="#696969"/><rect x="2.9" y="62.5" width="1.7" height="1.2" fill="#3c3c3c"/><rect x="94.7" y="74.3" width="1.6" height="0.6" fill="#3c3c3c"/><rect x="24.5" y="75.7" width="1.3" height="1.4" fill="#9b9b9b"/><rect x="64.3" y="51.8" width="1.2" height="1.2" fill="#b4b4b4"/><rect x="29.4" y="76.4" width="1.3" height="1.8" fill="#696969"/><rect x="74.9" y="77.9" width="0.9" height="1.0" fill="#878787"/><rect x="67.3" y="83.0" width="1.3" height="1.0" fill="#4b4b4b"/><rect x="134.1" y="66.6" width="1.8" height="1.3" fill="#878787"/><rect x="59.9" y="51.0" width="1.0" height="1.5" fill="#5a5a5a"/><rect x="106.9" y="64.1" width="1.5" height="1.3" fill="#b4b4b4"/><rect x="49.4" y="81.1" width="0.9" height="1.6" fill="#b4b4b4"/><rect x="96.1" y="63.8" width="1.8" height="1.2" fill="#4b4b4b"/><rect x="53.5" y="71.7" width="1.0" height="0.6" fill="#4b4b4b"/><rect x="24.2" y="75.6" width="0.8" height="1.2" fill="#696969"/><rect x="12.1" y="81.6" width="0.6" height="1.8" fill="#9b9b9b"/><rect x="10.6" y="78.6" width="1.8" height="1.6" fill="#787878"/><rect x="60.2" y="82.1" width="0.7" height="1.2" fill="#9b9b9b"/><rect x="111.6" y="46.1" width="1.3" height="1.1" fill="#5a5a5a"/><rect x="130.3" y="70.9" width="0.9" height="1.3" fill="#323232"/><rect x="125.5" y="55.9" width="1.0" height="1.2" fill="#9b9b9b"/><rect x="31.6" y="64.2" width="1.1" height="1.3" fill="#696969"/><rect x="63.6" y="72.5" width="1.4" height="1.7" fill="#4b4b4b"/><rect x="32.4" y="86.5" width="1.3" height="1.0" fill="#696969"/><rect x="59.3" y="87.0" width="1.2" height="1.8" fill="#696969"/><rect x="52.2" y="87.4" width="1.1" height="1.1" fill="#4b4b4b"/><rect x="71.4" y="68.7" width="1.3" height="1.7" fill="#5a5a5a"/><rect x="12.6" y="87.0" width="0.6" height="0.7" fill="#696969"/><rect x="132.3" y="78.7" width="1.7" height="0.7" fill="#9b9b9b"/><rect x="2.7" y="52.9" width="0.6" height="0.7" fill="#787878"/><rect x="64.7" y="80.1" width="1.3" height="1.5" fill="#5a5a5a"/><rect x="80.6" y="83.8" width="1.4" height="0.9" fill="#787878"/><rect x="49.3" y="75.9" width="1.1" height="1.1" fill="#5a5a5a"/><rect x="27.3" y="66.4" width="1.6" height="0.9" fill="#323232"/><rect x="12.5" y="56.0" width="0.8" height="1.2" fill="#3c3c3c"/><rect x="31.0" y="74.6" width="1.3" height="1.5" fill="#323232"/><rect x="45.5" y="87.4" width="1.1" height="1.2" fill="#4b4b4b"/><rect x="34.3" y="76.8" width="1.8" height="1.6" fill="#3c3c3c"/><rect x="11.5" y="68.5" width="0.8" height="0.9" fill="#9b9b9b"/><rect x="44.7" y="65.2" width="1.6" height="1.3" fill="#5a5a5a"/><rect x="60.7" y="68.3" width="1.4" height="1.6" fill="#b4b4b4"/><rect x="33.9" y="78.4" width="0.7" height="0.8" fill="#b4b4b4"/><rect x="30.4" y="71.9" width="0.9" height="0.6" fill="#787878"/><rect x="59.1" y="79.8" width="1.7" height="1.1" fill="#323232"/><rect x="67.2" y="62.6" width="0.7" height="1.4" fill="#787878"/><rect x="93.9" y="59.2" width="1.2" height="1.0" fill="#878787"/><rect x="29.9" y="60.7" width="1.5" height="1.0" fill="#4b4b4b"/><rect x="62.5" y="70.2" width="1.7" height="0.6" fill="#787878"/><rect x="81.5" y="63.9" width="1.4" height="1.1" fill="#787878"/><rect x="75.2" y="50.4" width="1.2" height="0.9" fill="#696969"/><rect x="58.6" y="70.7" width="0.7" height="1.0" fill="#3c3c3c"/><rect x="54.0" y="81.1" width="1.5" height="0.8" fill="#b4b4b4"/><rect x="131.7" y="61.3" width="0.6" height="1.5" fill="#4b4b4b"/><rect x="6.2" y="77.8" width="0.7" height="0.9" fill="#b4b4b4"/><rect x="104.7" y="55.7" width="1.2" height="1.6" fill="#4b4b4b"/><rect x="71.7" y="53.7" width="0.7" height="0.8" fill="#b4b4b4"/><rect x="107.6" y="66.5" width="1.1" height="1.4" fill="#9b9b9b"/><rect x="56.1" y="80.9" width="1.2" height="1.7" fill="#3c3c3c"/><rect x="113.0" y="78.0" width="1.4" height="1.3" fill="#5a5a5a"/><rect x="79.9" y="48.9" width="0.9" height="1.4" fill="#4b4b4b"/><rect x="75.0" y="71.2" width="1.1" height="0.9" fill="#696969"/><rect x="123.1" y="46.3" width="0.8" height="1.2" fill="#b4b4b4"/><rect x="61.1" y="63.8" width="1.4" height="1.5" fill="#b4b4b4"/><rect x="110.4" y="76.1" width="1.8" height="1.1" fill="#9b9b9b"/><rect x="70.4" y="57.8" width="0.8" height="0.9" fill="#5a5a5a"/><rect x="76.0" y="67.6" width="1.0" height="0.6" fill="#696969"/><rect x="89.1" y="68.4" width="1.5" height="0.7" fill="#3c3c3c"/><rect x="108.0" y="57.6" width="0.6" height="1.7" fill="#3c3c3c"/><rect x="128.8" y="60.4" width="1.4" height="1.2" fill="#4b4b4b"/><rect x="123.1" y="83.5" width="1.5" height="0.9" fill="#787878"/><rect x="111.5" y="58.0" width="1.4" height="0.8" fill="#696969"/><rect x="104.7" y="86.8" width="1.3" height="1.4" fill="#878787"/><rect x="65.5" y="61.7" width="0.7" height="1.3" fill="#4b4b4b"/><rect x="71.2" y="77.1" width="0.7" height="1.6" fill="#787878"/><rect x="92.7" y="47.9" width="1.7" height="1.2" fill="#5a5a5a"/><rect x="118.6" y="67.5" width="0.8" height="1.3" fill="#696969"/><rect x="34.9" y="65.5" width="1.2" height="1.0" fill="#878787"/><rect x="20.4" y="56.5" width="0.7" height="0.6" fill="#b4b4b4"/><rect x="62.0" y="75.2" width="1.6" height="0.8" fill="#787878"/><rect x="89.9" y="57.9" width="1.7" height="1.0" fill="#5a5a5a"/><rect x="26.7" y="64.0" width="1.1" height="0.7" fill="#3c3c3c"/><rect x="21.2" y="62.0" width="1.1" height="1.0" fill="#787878"/><rect x="33.2" y="52.5" width="1.4" height="0.9" fill="#787878"/><rect x="36.0" y="53.3" width="1.7" height="0.8" fill="#3c3c3c"/><rect x="96.3" y="80.9" width="1.7" height="1.7" fill="#878787"/><rect x="23.0" y="65.0" width="0.6" height="1.3" fill="#878787"/><rect x="84.9" y="46.3" width="1.5" height="0.7" fill="#878787"/><rect x="1.3" y="76.1" width="0.7" height="0.7" fill="#787878"/><rect x="32.1" y="71.6" width="1.1" height="1.7" fill="#9b9b9b"/><rect x="33.1" y="67.9" width="1.6" height="1.0" fill="#787878"/><rect x="33.1" y="68.2" width="1.4" height="1.7" fill="#3c3c3c"/><rect x="112.5" y="72.3" width="1.5" height="1.6" fill="#3c3c3c"/><rect x="84.9" y="72.0" width="1.1" height="0.9" fill="#878787"/><rect x="39.2" y="50.7" width="0.6" height="1.2" fill="#4b4b4b"/><rect x="91.9" y="84.3" width="1.2" height="1.2" fill="#9b9b9b"/><rect x="21.8" y="64.1" width="1.2" height="1.4" fill="#696969"/><rect x="51.1" y="47.1" width="1.6" height="1.1" fill="#3c3c3c"/><rect x="89.4" y="67.9" width="1.6" height="1.5" fill="#9b9b9b"/><rect x="127.7" y="84.9" width="1.8" height="1.3" fill="#696969"/><rect x="82.1" y="65.8" width="0.8" height="1.4" fill="#9b9b9b"/><rect x="136.3" y="68.1" width="0.6" height="1.3" fill="#878787"/><rect x="65.4" y="57.9" width="1.5" height="1.2" fill="#696969"/><rect x="46.2" y="65.4" width="1.0" height="1.4" fill="#878787"/><rect x="131.3" y="82.5" width="1.3" height="1.7" fill="#b4b4b4"/><rect x="109.6" y="82.4" width="1.3" height="1.6" fill="#878787"/><rect x="13.3" y="83.5" width="1.1" height="1.4" fill="#9b9b9b"/><rect x="66.8" y="55.7" width="1.6" height="1.4" fill="#4b4b4b"/><rect x="133.1" y="86.2" width="1.5" height="1.0" fill="#b4b4b4"/><rect x="105.2" y="86.2" width="1.1" height="1.1" fill="#9b9b9b"/><rect x="3.5" y="65.5" width="0.9" height="1.3" fill="#4b4b4b"/><rect x="117.5" y="67.0" width="1.4" height="0.7" fill="#323232"/><rect x="126.9" y="71.5" width="1.2" height="1.2" fill="#878787"/><rect x="122.3" y="59.1" width="1.7" height="1.2" fill="#323232"/><rect x="115.2" y="75.5" width="1.1" height="1.7" fill="#9b9b9b"/><rect x="129.9" y="53.6" width="1.2" height="1.2" fill="#4b4b4b"/><rect x="62.4" y="66.5" width="1.6" height="1.0" fill="#323232"/><rect x="91.0" y="56.4" width="1.7" height="1.1" fill="#9b9b9b"/><rect x="19.6" y="51.0" width="1.3" height="1.8" fill="#696969"/><rect x="130.7" y="57.8" width="0.7" height="1.4" fill="#323232"/><rect x="16.0" y="76.9" width="0.8" height="1.6" fill="#4b4b4b"/><rect x="86.9" y="49.1" width="1.0" height="1.5" fill="#3c3c3c"/><rect x="85.9" y="61.8" width="0.7" height="1.4" fill="#5a5a5a"/><rect x="35.2" y="77.9" width="1.6" height="1.1" fill="#5a5a5a"/><rect x="53.3" y="66.0" width="1.6" height="1.7" fill="#323232"/><rect x="100.9" y="61.6" width="0.9" height="1.1" fill="#4b4b4b"/><rect x="10.4" y="81.4" width="1.8" height="1.7" fill="#3c3c3c"/><rect x="78.5" y="77.1" width="1.3" height="1.6" fill="#9b9b9b"/><rect x="68.6" y="86.5" width="1.2" height="1.1" fill="#787878"/><rect x="80.2" y="85.0" width="0.9" height="1.7" fill="#787878"/><rect x="105.3" y="58.3" width="1.2" height="1.7" fill="#b4b4b4"/><rect x="128.7" y="67.8" width="0.9" height="1.8" fill="#9b9b9b"/><rect x="130.6" y="81.4" width="1.8" height="1.7" fill="#696969"/><rect x="75.4" y="59.3" width="0.7" height="1.5" fill="#4b4b4b"/><rect x="107.3" y="48.6" width="0.9" height="1.2" fill="#696969"/><rect x="65.2" y="81.7" width="1.4" height="1.0" fill="#878787"/><rect x="6.9" y="47.2" width="1.3" height="1.3" fill="#b4b4b4"/><rect x="135.1" y="66.3" width="1.1" height="0.7" fill="#4b4b4b"/><rect x="30.5" y="52.5" width="1.2" height="1.0" fill="#696969"/><rect x="26.3" y="64.0" width="1.0" height="1.8" fill="#b4b4b4"/><rect x="100.5" y="79.2" width="1.2" height="1.7" fill="#696969"/><rect x="108.2" y="60.9" width="0.9" height="1.4" fill="#4b4b4b"/><rect x="132.6" y="84.1" width="1.4" height="1.7" fill="#b4b4b4"/><rect x="110.1" y="68.1" width="1.0" height="1.0" fill="#323232"/><rect x="33.1" y="61.8" width="1.0" height="1.3" fill="#878787"/><rect x="133.8" y="61.8" width="1.5" height="1.1" fill="#3c3c3c"/><rect x="40.7" y="48.4" width="0.9" height="1.7" fill="#787878"/><rect x="13.0" y="71.6" width="1.4" height="1.5" fill="#9b9b9b"/><rect x="107.7" y="85.1" width="1.7" height="1.2" fill="#3c3c3c"/><rect x="39.8" y="51.1" width="0.7" height="0.9" fill="#9b9b9b"/><rect x="77.3" y="53.1" width="0.8" height="0.7" fill="#878787"/><rect x="54.5" y="75.9" width="1.3" height="1.1" fill="#3c3c3c"/><rect x="16.4" y="50.3" width="1.7" height="0.9" fill="#5a5a5a"/><rect x="54.5" y="60.5" width="0.8" height="1.4" fill="#787878"/><rect x="1.7" y="65.9" width="1.5" height="0.7" fill="#787878"/><rect x="7.9" y="70.4" width="1.1" height="1.1" fill="#4b4b4b"/><rect x="2.0" y="67.3" width="0.7" height="0.8" fill="#b4b4b4"/><rect x="95.7" y="70.3" width="1.2" height="1.5" fill="#878787"/><rect x="95.9" y="48.2" width="1.6" height="1.1" fill="#4b4b4b"/><rect x="54.6" y="85.9" width="0.6" height="1.4" fill="#878787"/><rect x="30.2" y="63.0" width="0.7" height="1.1" fill="#4b4b4b"/><rect x="66.0" y="84.1" width="0.9" height="1.4" fill="#5a5a5a"/><rect x="0.2" y="54.0" width="1.3" height="1.3" fill="#4b4b4b"/><rect x="118.5" y="79.5" width="1.6" height="0.9" fill="#696969"/><rect x="93.0" y="69.3" width="1.2" height="0.9" fill="#5a5a5a"/><rect x="54.6" y="66.1" width="0.9" height="0.9" fill="#9b9b9b"/><rect x="11.8" y="82.4" width="1.8" height="0.8" fill="#b4b4b4"/><rect x="85.2" y="46.2" width="1.1" height="1.0" fill="#696969"/><rect x="105.0" y="80.7" width="1.2" height="0.6" fill="#9b9b9b"/><rect x="43.5" y="76.4" width="1.2" height="0.8" fill="#9b9b9b"/><rect x="48.2" y="77.2" width="1.5" height="1.0" fill="#4b4b4b"/><rect x="48.0" y="53.2" width="1.1" height="0.7" fill="#323232"/><rect x="34.4" y="66.7" width="1.6" height="1.3" fill="#3c3c3c"/><rect x="99.1" y="74.7" width="1.5" height="1.4" fill="#b4b4b4"/><rect x="62.3" y="61.2" width="1.2" height="0.9" fill="#323232"/><rect x="68.4" y="58.9" width="1.5" height="1.4" fill="#323232"/><rect x="43.6" y="53.3" width="1.6" height="1.2" fill="#9b9b9b"/><rect x="47.3" y="84.6" width="1.1" height="1.0" fill="#b4b4b4"/><rect x="84.1" y="71.5" width="1.3" height="1.2" fill="#b4b4b4"/><rect x="35.7" y="74.7" width="1.7" height="0.9" fill="#9b9b9b"/><rect x="109.9" y="87.4" width="0.7" height="0.9" fill="#5a5a5a"/><rect x="51.5" y="70.6" width="1.5" height="1.3" fill="#4b4b4b"/><rect x="98.6" y="70.4" width="1.7" height="1.7" fill="#3c3c3c"/><rect x="9.1" y="48.4" width="0.8" height="0.6" fill="#9b9b9b"/><rect x="40.1" y="58.7" width="1.7" height="1.5" fill="#b4b4b4"/><rect x="12.8" y="72.0" width="1.5" height="1.7" fill="#696969"/><rect x="41.0" y="85.5" width="0.9" height="1.4" fill="#787878"/><rect x="50.5" y="48.5" width="1.1" height="1.2" fill="#5a5a5a"/><rect x="16.8" y="67.3" width="1.8" height="1.0" fill="#b4b4b4"/><rect x="90.2" y="49.6" width="1.5" height="1.2" fill="#787878"/><rect x="20.2" y="83.8" width="1.2" height="1.2" fill="#4b4b4b"/><rect x="74.4" y="87.3" width="0.6" height="0.9" fill="#696969"/><rect x="90.1" y="48.2" width="0.8" height="1.3" fill="#3c3c3c"/><rect x="119.8" y="48.6" width="0.8" height="1.7" fill="#4b4b4b"/><rect x="79.9" y="46.4" width="0.7" height="1.6" fill="#4b4b4b"/><rect x="70.2" y="75.0" width="0.8" height="1.5" fill="#4b4b4b"/><rect x="130.4" y="51.7" width="1.1" height="0.7" fill="#b4b4b4"/><rect x="130.8" y="46.6" width="1.6" height="1.4" fill="#878787"/><rect x="121.2" y="51.2" width="0.9" height="1.2" fill="#323232"/><rect x="15.0" y="75.1" width="1.8" height="1.8" fill="#878787"/><rect x="17.6" y="68.0" width="0.7" height="0.9" fill="#9b9b9b"/><rect x="71.7" y="64.5" width="1.6" height="1.1" fill="#787878"/><rect x="68.6" y="55.9" width="1.5" height="0.7" fill="#323232"/><rect x="26.2" y="63.5" width="1.6" height="1.1" fill="#5a5a5a"/><rect x="64.4" y="70.1" width="0.9" height="1.1" fill="#696969"/><rect x="11.5" y="64.8" width="0.9" height="0.9" fill="#787878"/><rect x="3.8" y="60.3" width="1.1" height="0.9" fill="#696969"/><rect x="92.7" y="77.5" width="0.8" height="1.7" fill="#323232"/><rect x="18.1" y="53.8" width="1.0" height="1.2" fill="#4b4b4b"/><rect x="113.9" y="81.7" width="0.6" height="0.6" fill="#787878"/><rect x="25.0" y="59.6" width="1.0" height="1.3" fill="#323232"/><rect x="119.3" y="54.7" width="1.0" height="0.8" fill="#787878"/><rect x="15.4" y="64.2" width="0.9" height="0.9" fill="#4b4b4b"/><rect x="97.5" y="76.6" width="1.0" height="1.8" fill="#5a5a5a"/><rect x="72.1" y="62.8" width="0.7" height="0.9" fill="#4b4b4b"/><rect x="136.3" y="79.9" width="0.9" height="1.8" fill="#3c3c3c"/><rect x="5.2" y="54.6" width="1.8" height="1.6" fill="#696969"/><rect x="90.4" y="47.0" width="1.7" height="1.0" fill="#b4b4b4"/><rect x="68.0" y="49.7" width="1.7" height="1.4" fill="#323232"/><rect x="53.8" y="81.4" width="0.8" height="1.0" fill="#787878"/><rect x="99.8" y="78.7" width="1.4" height="1.5" fill="#878787"/><rect x="111.6" y="65.9" width="0.7" height="0.9" fill="#696969"/><rect x="121.9" y="62.9" width="1.8" height="1.3" fill="#b4b4b4"/><rect x="51.5" y="69.1" width="1.5" height="1.1" fill="#696969"/><rect x="94.3" y="68.0" width="1.6" height="0.9" fill="#4b4b4b"/><rect x="48.6" y="70.3" width="0.8" height="1.2" fill="#787878"/><rect x="67.9" y="64.5" width="1.7" height="1.3" fill="#787878"/><rect x="50.6" y="61.2" width="0.9" height="1.6" fill="#4b4b4b"/><rect x="96.3" y="55.0" width="0.6" height="1.7" fill="#696969"/><rect x="97.3" y="59.8" width="1.1" height="1.6" fill="#3c3c3c"/><rect x="16.4" y="64.1" width="1.1" height="1.5" fill="#787878"/><rect x="86.2" y="82.7" width="0.8" height="1.1" fill="#696969"/><rect x="87.8" y="75.0" width="1.3" height="1.3" fill="#5a5a5a"/><rect x="116.4" y="86.5" width="1.5" height="1.5" fill="#3c3c3c"/><rect x="98.8" y="48.5" width="1.5" height="1.7" fill="#4b4b4b"/><rect x="50.9" y="56.1" width="0.7" height="1.2" fill="#787878"/><rect x="48.6" y="49.2" width="0.8" height="1.7" fill="#9b9b9b"/><rect x="6.7" y="74.6" width="1.3" height="1.2" fill="#b4b4b4"/><rect x="33.7" y="56.9" width="1.3" height="1.5" fill="#9b9b9b"/><rect x="108.4" y="59.1" width="1.0" height="1.1" fill="#696969"/><rect x="69.0" y="82.1" width="0.9" height="0.7" fill="#787878"/><rect x="92.3" y="56.2" width="1.5" height="1.2" fill="#5a5a5a"/><rect x="43.3" y="69.3" width="1.3" height="1.2" fill="#323232"/><rect x="53.1" y="86.6" width="1.7" height="1.6" fill="#b4b4b4"/><rect x="84.8" y="55.6" width="0.7" height="0.7" fill="#9b9b9b"/><rect x="105.3" y="70.5" width="1.6" height="1.6" fill="#696969"/><rect x="84.1" y="49.5" width="1.1" height="1.3" fill="#787878"/><rect x="86.0" y="60.2" width="0.7" height="1.0" fill="#5a5a5a"/><rect x="81.9" y="85.0" width="1.0" height="0.9" fill="#323232"/><rect x="10.7" y="67.9" width="0.8" height="0.8" fill="#9b9b9b"/><rect x="88.8" y="74.4" width="1.7" height="0.8" fill="#696969"/><rect x="32.4" y="61.2" width="1.8" height="0.6" fill="#787878"/><rect x="4.6" y="67.6" width="1.7" height="1.3" fill="#3c3c3c"/><rect x="66.0" y="71.9" width="1.1" height="0.9" fill="#696969"/><rect x="125.1" y="81.4" width="1.0" height="1.2" fill="#b4b4b4"/><rect x="67.9" y="86.9" width="1.3" height="0.8" fill="#878787"/><rect x="28.2" y="67.2" width="0.6" height="1.2" fill="#323232"/><rect x="113.3" y="64.9" width="0.7" height="1.5" fill="#3c3c3c"/><rect x="29.8" y="49.2" width="0.7" height="1.7" fill="#4b4b4b"/><rect x="75.4" y="46.2" width="0.9" height="1.5" fill="#9b9b9b"/><rect x="88.6" y="86.0" width="1.7" height="1.6" fill="#787878"/><rect x="11.1" y="69.2" width="1.0" height="0.6" fill="#323232"/><rect x="57.7" y="69.8" width="1.7" height="1.3" fill="#323232"/><rect x="30.6" y="73.0" width="1.5" height="1.0" fill="#9b9b9b"/><rect x="127.5" y="77.4" width="0.9" height="1.4" fill="#323232"/><rect x="60.3" y="49.5" width="0.7" height="0.7" fill="#3c3c3c"/><rect x="43.7" y="58.6" width="0.9" height="1.4" fill="#323232"/><rect x="124.2" y="50.7" width="0.9" height="1.1" fill="#878787"/><rect x="135.2" y="82.2" width="1.2" height="1.5" fill="#b4b4b4"/><rect x="96.0" y="48.8" width="1.8" height="1.0" fill="#323232"/><rect x="128.6" y="77.0" width="0.9" height="0.8" fill="#787878"/><rect x="22.4" y="52.4" width="1.4" height="1.3" fill="#4b4b4b"/><rect x="65.3" y="86.3" width="1.2" height="1.4" fill="#323232"/><rect x="16.5" y="75.1" width="1.3" height="1.7" fill="#9b9b9b"/><rect x="88.0" y="79.2" width="1.7" height="0.7" fill="#323232"/><rect x="113.3" y="48.4" width="0.9" height="1.4" fill="#323232"/><rect x="43.9" y="70.5" width="1.1" height="0.7" fill="#9b9b9b"/><rect x="67.4" y="79.3" width="0.6" height="0.8" fill="#5a5a5a"/><rect x="3.9" y="52.7" width="1.0" height="1.2" fill="#3c3c3c"/><rect x="52.8" y="81.1" width="1.6" height="0.9" fill="#787878"/><rect x="55.7" y="63.8" width="1.4" height="0.7" fill="#878787"/><rect x="91.5" y="56.8" width="1.2" height="1.0" fill="#b4b4b4"/><rect x="64.7" y="48.5" width="1.1" height="1.1" fill="#323232"/><rect x="37.1" y="85.5" width="1.1" height="1.7" fill="#9b9b9b"/><rect x="95.4" y="61.3" width="1.5" height="1.2" fill="#b4b4b4"/><rect x="123.6" y="81.0" width="1.6" height="1.6" fill="#5a5a5a"/><rect x="58.5" y="74.2" width="1.5" height="0.8" fill="#787878"/><rect x="3.8" y="69.4" width="1.8" height="0.9" fill="#696969"/><rect x="131.7" y="78.5" width="1.6" height="1.2" fill="#4b4b4b"/><rect x="62.1" y="65.0" width="1.2" height="0.6" fill="#9b9b9b"/><rect x="54.7" y="60.0" width="0.7" height="1.0" fill="#b4b4b4"/><rect x="121.4" y="80.6" width="1.7" height="1.2" fill="#696969"/><rect x="80.9" y="48.0" width="1.2" height="0.9" fill="#4b4b4b"/><rect x="63.2" y="77.6" width="1.8" height="1.5" fill="#787878"/><rect x="69.3" y="50.7" width="1.5" height="0.8" fill="#878787"/><rect x="56.4" y="46.2" width="0.6" height="1.2" fill="#b4b4b4"/><rect x="132.8" y="46.9" width="1.2" height="1.0" fill="#4b4b4b"/><rect x="88.5" y="70.5" width="1.7" height="1.1" fill="#787878"/><rect x="75.2" y="72.1" width="1.4" height="1.4" fill="#5a5a5a"/><rect x="46.9" y="63.5" width="1.5" height="0.6" fill="#878787"/><rect x="83.4" y="67.2" width="0.9" height="0.8" fill="#9b9b9b"/><rect x="44.8" y="59.0" width="0.8" height="1.8" fill="#b4b4b4"/><rect x="42.9" y="69.7" width="1.0" height="1.5" fill="#4b4b4b"/><rect x="36" y="64.5" width="11" height="23.5" fill="#8a8a8a"/><rect x="37.0" y="66" width="1.1" height="22" fill="#333"/><rect x="39.7" y="66" width="1.1" height="22" fill="#333"/><rect x="42.4" y="66" width="1.1" height="22" fill="#333"/><rect x="45.1" y="66" width="1.1" height="22" fill="#333"/><path d="M48.5 57 L52 66 L45 66Z" fill="#c8c8c8"/><rect x="45" y="66" width="7" height="22" fill="#444"/><path d="M63.5 52 L66 60 L61 60Z" fill="#d0d0d0"/><rect x="60" y="60" width="7" height="28" fill="#3a3a3a"/><rect x="68" y="62" width="10" height="26" fill="#a4a4a4"/><rect x="70" y="64" width="0.8" height="24" fill="#777"/><rect x="74" y="64" width="0.8" height="24" fill="#777"/><rect x="110" y="79.5" width="27" height="8.5" fill="#9c9c9c"/><rect x="110" y="79.5" width="27" height="1" fill="#c4c4c4"/><rect x="120" y="37" width="2.4" height="10" fill="#8a8a8a"/><rect x="120.8" y="30" width="0.8" height="8" fill="#9a9a9a"/><rect x="119" y="39" width="4.5" height="2" fill="#bbb"/><rect x="128" y="50" width="9" height="11" fill="#b0b0b0"/><rect x="104" y="48" width="6" height="9" fill="#a6a6a6"/><rect x="93.6" y="0" width="0.8" height="14" fill="#a8a8a8"/><path d="M92.8 13 L95.2 13 L96 24 L92 24Z" fill="#909090"/><path d="M88 29 L90 24 L98 24 L100 29Z" fill="#8e8e8e"/><rect x="87" y="29" width="14" height="13" fill="#cfcfcf"/><rect x="87" y="36" width="14" height="6" fill="#e8e8e8"/><rect x="87" y="29" width="14" height="2" fill="#9a9a9a"/><rect x="89.5" y="31" width="1.2" height="11" fill="#efefef"/><rect x="93.5" y="31" width="1.2" height="11" fill="#efefef"/><rect x="97.5" y="31" width="1.2" height="11" fill="#efefef"/><rect x="86.5" y="42" width="15" height="46" fill="#4c4c4c"/><rect x="87.5" y="43" width="0.8" height="45" fill="#6a6a6a"/><rect x="89.5" y="43" width="0.8" height="45" fill="#6a6a6a"/><rect x="91.5" y="43" width="0.8" height="45" fill="#6a6a6a"/><rect x="93.5" y="43" width="0.8" height="45" fill="#6a6a6a"/><rect x="95.5" y="43" width="0.8" height="45" fill="#6a6a6a"/><rect x="97.5" y="43" width="0.8" height="45" fill="#6a6a6a"/><rect x="99.5" y="43" width="0.8" height="45" fill="#6a6a6a"/><rect x="86.5" y="45.0" width="15" height="0.6" fill="#383838"/><rect x="86.5" y="49.5" width="15" height="0.6" fill="#383838"/><rect x="86.5" y="54.0" width="15" height="0.6" fill="#383838"/><rect x="86.5" y="58.5" width="15" height="0.6" fill="#383838"/><rect x="86.5" y="63.0" width="15" height="0.6" fill="#383838"/><rect x="86.5" y="67.5" width="15" height="0.6" fill="#383838"/><rect x="86.5" y="72.0" width="15" height="0.6" fill="#383838"/><rect x="86.5" y="76.5" width="15" height="0.6" fill="#383838"/><rect x="86.5" y="81.0" width="15" height="0.6" fill="#383838"/><rect x="86.5" y="85.5" width="15" height="0.6" fill="#383838"/></svg><g transform="translate(0,0.6)" stroke="#333" stroke-width="0.25"><g font-family="Liberation Sans" font-size="10.4" fill="#1e1e1e" letter-spacing="0.3" text-rendering="geometricPrecision">
<text x="160.9" y="20.3">New York,</text><text x="160.9" y="34.5">Manhattan</text><text x="160.9" y="48.7">Bridge</text>
<text x="124.4" y="171.8" text-anchor="end">New York,</text><text x="124.4" y="186" text-anchor="end">Empire State</text><text x="124.4" y="200.2" text-anchor="end">Building</text>
</g></g></svg>
  <div class="abs" style="left:25px;top:180px;width:118px;height:89px;background:#fff;box-shadow:0 0.5px 1.5px 0.5px rgba(0,0,0,0.9);">
    <svg style="left:20px;top:16px" width="77" height="50" viewBox="0 0 77 50"><defs><radialGradient id="p3sky" cx="0.55" cy="0.3" r="0.75"><stop offset="0" stop-color="#e0e0e0"/><stop offset="0.65" stop-color="#cdcdcd"/><stop offset="1" stop-color="#8a8a8a"/></radialGradient><radialGradient id="p3vig" cx="0.5" cy="0.45" r="0.72"><stop offset="0.65" stop-color="#000" stop-opacity="0"/><stop offset="1" stop-color="#000" stop-opacity="0.35"/></radialGradient></defs><rect width="77" height="50" fill="url(#p3sky)"/><path d="M18 8 Q35 3 52 9 M26 16 Q40 9 56 15 M60 10 Q68 6 76 12" stroke="#b0b0b0" stroke-width="0.5" fill="none"/><rect x="5" y="1" width="6.5" height="39" fill="#7e7e7e"/><rect x="22.5" y="6" width="1" height="34" fill="#777"/><rect x="25" y="4.3" width="5" height="35.7" fill="#b0b0b0"/><rect x="39" y="13" width="6" height="27" fill="#a8a8a8"/><rect x="41" y="9" width="2" height="31" fill="#a0a0a0"/><rect x="48" y="12" width="7" height="28" fill="#8a8a8a"/><rect x="56" y="1" width="5.5" height="39" fill="#a8a8a8"/><rect x="31" y="18" width="4" height="22" fill="#9a9a9a"/><rect x="44" y="18" width="4" height="22" fill="#909090"/><path d="M56 2 Q58.7 -1.5 61.5 2Z" fill="#a8a8a8"/><path d="M39.5 13.5 L42 8 L44.5 13.5Z" fill="#a8a8a8"/><path d="M25 4.8 Q27.5 2.2 30 4.8Z" fill="#b0b0b0"/><rect x="15" y="10.5" width="7" height="30" fill="#353535"/><rect x="0" y="22" width="15" height="18" fill="#8c8c8c"/><rect x="2" y="18" width="8" height="4" fill="#888"/><rect x="30" y="26" width="10" height="14" fill="#7a7a7a"/><rect x="55" y="24" width="22" height="16" fill="#6a6a6a"/><rect x="45" y="28" width="10" height="12" fill="#808080"/><rect x="62" y="20" width="5" height="6" fill="#777"/><rect x="70" y="22" width="7" height="4" fill="#7a7a7a"/><rect x="47.3" y="32.5" width="1.0" height="1.5" fill="#464646"/><rect x="63.9" y="33.4" width="0.6" height="0.6" fill="#5a5a5a"/><rect x="8.6" y="25.7" width="0.6" height="1.1" fill="#5a5a5a"/><rect x="1.0" y="19.4" width="0.6" height="1.5" fill="#bebebe"/><rect x="12.1" y="33.9" width="0.5" height="1.2" fill="#5a5a5a"/><rect x="10.1" y="38.3" width="0.4" height="1.4" fill="#5a5a5a"/><rect x="66.3" y="21.2" width="1.2" height="1.1" fill="#5a5a5a"/><rect x="13.8" y="38.2" width="0.6" height="1.6" fill="#bebebe"/><rect x="22.7" y="23.0" width="0.5" height="0.7" fill="#464646"/><rect x="25.2" y="34.4" width="0.9" height="1.2" fill="#a0a0a0"/><rect x="5.0" y="22.9" width="0.6" height="1.3" fill="#5a5a5a"/><rect x="36.6" y="31.6" width="0.4" height="1.6" fill="#464646"/><rect x="72.1" y="22.9" width="0.7" height="1.1" fill="#bebebe"/><rect x="27.8" y="28.5" width="0.4" height="0.6" fill="#5a5a5a"/><rect x="47.4" y="37.9" width="0.5" height="0.8" fill="#bebebe"/><rect x="26.2" y="22.9" width="0.8" height="1.4" fill="#464646"/><rect x="44.8" y="33.5" width="0.7" height="0.8" fill="#bebebe"/><rect x="71.9" y="16.3" width="0.7" height="1.2" fill="#5a5a5a"/><rect x="25.8" y="37.1" width="0.8" height="0.8" fill="#a0a0a0"/><rect x="23.3" y="34.0" width="0.9" height="1.3" fill="#a0a0a0"/><rect x="75.8" y="18.0" width="0.4" height="1.6" fill="#bebebe"/><rect x="2.4" y="32.5" width="0.7" height="0.8" fill="#bebebe"/><rect x="11.1" y="38.5" width="0.9" height="1.4" fill="#a0a0a0"/><rect x="63.7" y="17.3" width="1.0" height="1.5" fill="#bebebe"/><rect x="8.1" y="24.9" width="0.5" height="1.4" fill="#a0a0a0"/><rect x="10.7" y="37.1" width="0.9" height="0.7" fill="#bebebe"/><rect x="73.0" y="31.2" width="0.7" height="0.8" fill="#bebebe"/><rect x="30.7" y="17.7" width="0.7" height="1.6" fill="#5a5a5a"/><rect x="47.6" y="26.5" width="0.7" height="0.6" fill="#a0a0a0"/><rect x="39.2" y="27.7" width="0.8" height="0.6" fill="#a0a0a0"/><rect x="52.8" y="30.6" width="1.0" height="0.9" fill="#a0a0a0"/><rect x="63.5" y="20.6" width="1.2" height="1.3" fill="#a0a0a0"/><rect x="49.4" y="28.5" width="0.4" height="1.1" fill="#a0a0a0"/><rect x="24.8" y="20.8" width="0.6" height="1.1" fill="#a0a0a0"/><rect x="26.4" y="30.1" width="1.0" height="1.4" fill="#a0a0a0"/><rect x="70.1" y="18.3" width="1.1" height="1.0" fill="#a0a0a0"/><rect x="72.7" y="27.0" width="0.8" height="0.7" fill="#a0a0a0"/><rect x="71.2" y="25.9" width="1.0" height="1.3" fill="#bebebe"/><rect x="13.1" y="33.5" width="0.9" height="1.2" fill="#bebebe"/><rect x="23.0" y="27.8" width="1.1" height="0.8" fill="#464646"/><rect x="14.9" y="28.7" width="0.9" height="0.7" fill="#5a5a5a"/><rect x="47.9" y="15.0" width="0.8" height="0.7" fill="#464646"/><rect x="67.8" y="16.8" width="1.2" height="1.0" fill="#464646"/><rect x="31.6" y="22.8" width="0.9" height="0.6" fill="#5a5a5a"/><rect x="18.1" y="36.6" width="0.4" height="0.9" fill="#a0a0a0"/><rect x="65.0" y="35.7" width="1.0" height="1.1" fill="#464646"/><rect x="41.8" y="21.5" width="0.6" height="1.1" fill="#a0a0a0"/><rect x="72.8" y="34.5" width="0.7" height="1.4" fill="#a0a0a0"/><rect x="35.5" y="17.9" width="0.7" height="1.0" fill="#5a5a5a"/><rect x="73.6" y="29.2" width="0.7" height="1.5" fill="#464646"/><rect x="29.0" y="22.2" width="1.1" height="1.1" fill="#a0a0a0"/><rect x="47.8" y="36.3" width="0.7" height="1.0" fill="#5a5a5a"/><rect x="37.5" y="26.0" width="1.0" height="0.9" fill="#5a5a5a"/><rect x="45.3" y="20.5" width="1.2" height="1.0" fill="#bebebe"/><rect x="1.5" y="37.6" width="0.6" height="1.5" fill="#5a5a5a"/><rect x="36.2" y="17.0" width="0.9" height="1.0" fill="#a0a0a0"/><rect x="3.0" y="17.4" width="0.7" height="1.0" fill="#a0a0a0"/><rect x="18.5" y="25.9" width="0.4" height="1.0" fill="#5a5a5a"/><rect x="54.8" y="21.1" width="0.8" height="1.6" fill="#464646"/><rect x="1.2" y="17.2" width="0.6" height="1.3" fill="#a0a0a0"/><rect x="55.6" y="14.7" width="0.7" height="1.2" fill="#5a5a5a"/><rect x="2.8" y="20.3" width="0.8" height="1.5" fill="#5a5a5a"/><rect x="1.1" y="33.5" width="0.7" height="1.1" fill="#bebebe"/><rect x="65.3" y="35.0" width="0.8" height="1.3" fill="#5a5a5a"/><rect x="68.3" y="25.6" width="1.0" height="0.8" fill="#464646"/><rect x="52.8" y="24.8" width="0.6" height="1.4" fill="#a0a0a0"/><rect x="10.8" y="26.0" width="0.8" height="1.0" fill="#a0a0a0"/><rect x="40.9" y="24.6" width="0.8" height="0.6" fill="#5a5a5a"/><rect x="20.3" y="16.1" width="0.5" height="1.5" fill="#a0a0a0"/><rect x="54.9" y="38.5" width="1.2" height="1.3" fill="#464646"/><path d="M0 40 L77 40 L77 50 L0 50Z" fill="#9c9c9c"/><path d="M0 38 L26 40 L31 50 L0 50Z" fill="#555"/><path d="M0 37 L26 39 L26 40.5 L0 39Z" fill="#777"/><rect x="26" y="40" width="4" height="10" fill="#666"/><rect x="38" y="41.5" width="5" height="3" fill="#5a5a5a"/><rect x="52" y="41" width="3.5" height="2.5" fill="#555"/><rect width="77" height="50" fill="url(#p3vig)"/></svg>
    <div class="txt" style="left:0;top:72.5px;width:118px;text-align:center;color:#1a1a1a;font-size:4.7px;line-height:6px;">New York 1956</div>
  </div>
  <div class="abs" style="left:25px;top:304px;width:118px;height:89px;background:#fff;box-shadow:0 0.5px 1.5px 0.5px rgba(0,0,0,0.9);">
    <svg style="left:20px;top:15px" width="78" height="50" viewBox="0 0 78 50"><defs><linearGradient id="p4sky" x1="0" y1="1" x2="1" y2="0"><stop offset="0" stop-color="#c2c2c2"/><stop offset="1" stop-color="#e2e2e2"/></linearGradient></defs><rect width="78" height="50" fill="url(#p4sky)"/><path d="M41 12 L25.1 5.1" stroke="#5c5c5c" stroke-width="1"/><path d="M41 12 L33.2 0.7" stroke="#5c5c5c" stroke-width="1"/><path d="M41 12 L42.1 0.4" stroke="#5c5c5c" stroke-width="1"/><path d="M41 12 L22.1 13.3" stroke="#5c5c5c" stroke-width="1"/><path d="M41 12 L28.8 19.2" stroke="#5c5c5c" stroke-width="1"/><path d="M34 26 Q33 14 40 9 Q48 6 56 11 L62 11.5 Q70 13 78 18 L78 50 L47 50 Q42 40 38 32Z" fill="#6a6a6a"/><path d="M56 11 Q64 18 60 28 Q62 40 68 50 L78 50 L78 18 Q70 13 62 11.5Z" fill="#585858"/><path d="M50 28 Q56 36 58 50 L54 50 Q52 38 48 30Z" fill="#7a7a7a"/><path d="M42 32 Q46 40 49 50 L47 50 Q43 40 40 33Z" fill="#787878"/><path d="M62 30 Q66 40 72 50 L70 50 Q64 40 60 32Z" fill="#666"/><path d="M36 17 Q40 13 45 16 Q48 22 46 28 Q40 30 37 24Z" fill="#8c8c8c"/><path d="M39 12 Q44 9 49 12 Q46 14 40 15Z" fill="#6a6a6a"/><path d="M11.5 18.5 Q25 23 37 28 L38.5 32 Q26 28 14 22Z" fill="#3e3e3e"/><path d="M14.5 22 L20.5 24.5 L19.5 28 L15 25.5Z" fill="#4a4a4a"/><path d="M3 7.5 Q10 4.5 17 8 Q16 15 12 19.5 Q7 17 3 7.5Z" fill="#353535"/><path d="M6.5 5.5 Q7.5 0.5 10 1.5 Q10.5 4 9.5 6Z" fill="#454545"/></svg>
  </div>
</div>
</body></html>
